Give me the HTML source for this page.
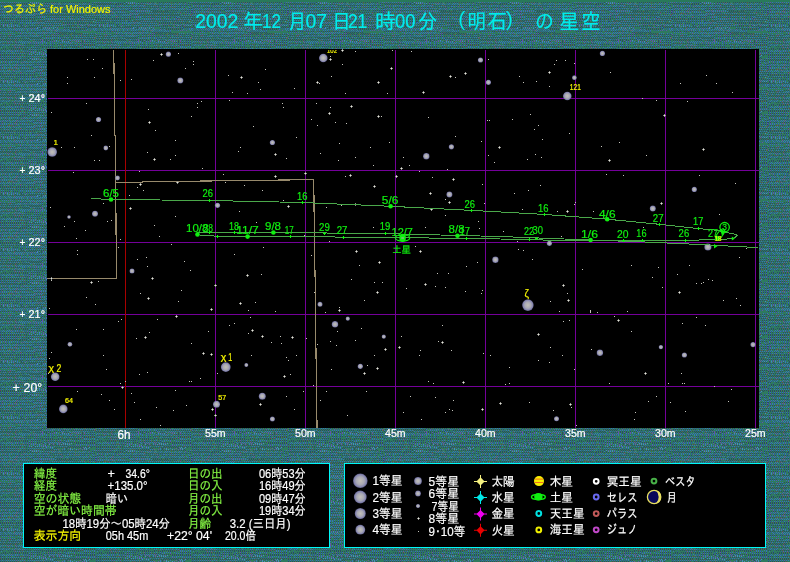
<!DOCTYPE html>
<html lang="ja"><head><meta charset="utf-8"><title>つるぷら for Windows</title>
<style>html,body{margin:0;padding:0;background:#2f7470;overflow:hidden}svg{display:block}text{font-family:"Liberation Sans","IPAGothic","Noto Sans CJK JP",sans-serif}.g{fill:#10f010;stroke:#10f010}.w{fill:#fff;stroke:#fff}.y{fill:#f4f400;stroke:#f4f400}.lg{fill:#84f444;stroke:#84f444}.c{fill:#00ecec;stroke:#00ecec}text{stroke-width:.2px}</style></head><body>
<svg style="will-change:transform" width="790" height="562" viewBox="0 0 790 562">
<defs>
<pattern id="bg" width="96" height="56" patternUnits="userSpaceOnUse"><rect width="96" height="56" fill="#2e7a5e"/>
<rect x="0" y="0" width="1" height="1" fill="#2e609c"/>
<rect x="2" y="0" width="1" height="1" fill="#3672ba"/>
<rect x="4" y="0" width="1" height="1" fill="#2e609c"/>
<rect x="6" y="0" width="1" height="1" fill="#3672ba"/>
<rect x="8" y="0" width="1" height="1" fill="#3672ba"/>
<rect x="10" y="0" width="1" height="1" fill="#3672ba"/>
<rect x="12" y="0" width="1" height="1" fill="#3672ba"/>
<rect x="14" y="0" width="1" height="1" fill="#3672ba"/>
<rect x="16" y="0" width="1" height="1" fill="#6452ac"/>
<rect x="18" y="0" width="1" height="1" fill="#3672ba"/>
<rect x="20" y="0" width="1" height="1" fill="#3672ba"/>
<rect x="22" y="0" width="1" height="1" fill="#3672ba"/>
<rect x="24" y="0" width="1" height="1" fill="#3672ba"/>
<rect x="28" y="0" width="1" height="1" fill="#3672ba"/>
<rect x="30" y="0" width="1" height="1" fill="#3672ba"/>
<rect x="32" y="0" width="1" height="1" fill="#3672ba"/>
<rect x="34" y="0" width="1" height="1" fill="#3672ba"/>
<rect x="36" y="0" width="1" height="1" fill="#3672ba"/>
<rect x="38" y="0" width="1" height="1" fill="#3672ba"/>
<rect x="40" y="0" width="1" height="1" fill="#3672ba"/>
<rect x="42" y="0" width="1" height="1" fill="#3672ba"/>
<rect x="43" y="0" width="1" height="1" fill="#4a7c52"/>
<rect x="44" y="0" width="1" height="1" fill="#3672ba"/>
<rect x="46" y="0" width="1" height="1" fill="#2e609c"/>
<rect x="48" y="0" width="1" height="1" fill="#2e609c"/>
<rect x="50" y="0" width="1" height="1" fill="#2e609c"/>
<rect x="52" y="0" width="1" height="1" fill="#3672ba"/>
<rect x="54" y="0" width="1" height="1" fill="#2a4c62"/>
<rect x="56" y="0" width="1" height="1" fill="#2a4c62"/>
<rect x="57" y="0" width="1" height="1" fill="#4a7c52"/>
<rect x="64" y="0" width="1" height="1" fill="#3874bc"/>
<rect x="66" y="0" width="1" height="1" fill="#2a4c62"/>
<rect x="68" y="0" width="1" height="1" fill="#6452ac"/>
<rect x="70" y="0" width="1" height="1" fill="#4a86c4"/>
<rect x="74" y="0" width="1" height="1" fill="#3874bc"/>
<rect x="79" y="0" width="1" height="1" fill="#4a7c52"/>
<rect x="80" y="0" width="1" height="1" fill="#6452ac"/>
<rect x="82" y="0" width="1" height="1" fill="#2a4c62"/>
<rect x="84" y="0" width="1" height="1" fill="#4a86c4"/>
<rect x="86" y="0" width="1" height="1" fill="#4a86c4"/>
<rect x="88" y="0" width="1" height="1" fill="#3874bc"/>
<rect x="0" y="1" width="1" height="1" fill="#2a4c62"/>
<rect x="2" y="1" width="1" height="1" fill="#2a4c62"/>
<rect x="4" y="1" width="1" height="1" fill="#2a4c62"/>
<rect x="6" y="1" width="1" height="1" fill="#2a4c62"/>
<rect x="7" y="1" width="1" height="1" fill="#4a7c52"/>
<rect x="8" y="1" width="1" height="1" fill="#2a4c62"/>
<rect x="10" y="1" width="1" height="1" fill="#2a4c62"/>
<rect x="12" y="1" width="1" height="1" fill="#2a4c62"/>
<rect x="14" y="1" width="1" height="1" fill="#2a4c62"/>
<rect x="16" y="1" width="1" height="1" fill="#2a4c62"/>
<rect x="18" y="1" width="1" height="1" fill="#5a4650"/>
<rect x="22" y="1" width="1" height="1" fill="#2a4c62"/>
<rect x="24" y="1" width="1" height="1" fill="#5a4650"/>
<rect x="26" y="1" width="1" height="1" fill="#2a4c62"/>
<rect x="28" y="1" width="1" height="1" fill="#2a4c62"/>
<rect x="30" y="1" width="1" height="1" fill="#2a4c62"/>
<rect x="32" y="1" width="1" height="1" fill="#2a4c62"/>
<rect x="36" y="1" width="1" height="1" fill="#5a4650"/>
<rect x="38" y="1" width="1" height="1" fill="#5a4650"/>
<rect x="40" y="1" width="1" height="1" fill="#2a4c62"/>
<rect x="42" y="1" width="1" height="1" fill="#2a4c62"/>
<rect x="43" y="1" width="1" height="1" fill="#4a7c52"/>
<rect x="44" y="1" width="1" height="1" fill="#2a4c62"/>
<rect x="46" y="1" width="1" height="1" fill="#2a4c62"/>
<rect x="48" y="1" width="1" height="1" fill="#2a4c62"/>
<rect x="50" y="1" width="1" height="1" fill="#2a4c62"/>
<rect x="52" y="1" width="1" height="1" fill="#2a4c62"/>
<rect x="54" y="1" width="1" height="1" fill="#3874bc"/>
<rect x="56" y="1" width="1" height="1" fill="#3874bc"/>
<rect x="58" y="1" width="1" height="1" fill="#6452ac"/>
<rect x="59" y="1" width="1" height="1" fill="#4a7c52"/>
<rect x="62" y="1" width="1" height="1" fill="#6452ac"/>
<rect x="64" y="1" width="1" height="1" fill="#3874bc"/>
<rect x="66" y="1" width="1" height="1" fill="#2a4c62"/>
<rect x="70" y="1" width="1" height="1" fill="#4a86c4"/>
<rect x="72" y="1" width="1" height="1" fill="#4a86c4"/>
<rect x="76" y="1" width="1" height="1" fill="#4a86c4"/>
<rect x="78" y="1" width="1" height="1" fill="#6452ac"/>
<rect x="82" y="1" width="1" height="1" fill="#6452ac"/>
<rect x="84" y="1" width="1" height="1" fill="#6452ac"/>
<rect x="86" y="1" width="1" height="1" fill="#4a86c4"/>
<rect x="88" y="1" width="1" height="1" fill="#2a4c62"/>
<rect x="0" y="2" width="1" height="1" fill="#3672ba"/>
<rect x="2" y="2" width="1" height="1" fill="#6452ac"/>
<rect x="4" y="2" width="1" height="1" fill="#3672ba"/>
<rect x="6" y="2" width="1" height="1" fill="#2e609c"/>
<rect x="8" y="2" width="1" height="1" fill="#3672ba"/>
<rect x="10" y="2" width="1" height="1" fill="#3672ba"/>
<rect x="12" y="2" width="1" height="1" fill="#3672ba"/>
<rect x="14" y="2" width="1" height="1" fill="#6452ac"/>
<rect x="16" y="2" width="1" height="1" fill="#3672ba"/>
<rect x="18" y="2" width="1" height="1" fill="#3672ba"/>
<rect x="20" y="2" width="1" height="1" fill="#3672ba"/>
<rect x="22" y="2" width="1" height="1" fill="#2e609c"/>
<rect x="24" y="2" width="1" height="1" fill="#2e609c"/>
<rect x="26" y="2" width="1" height="1" fill="#2e609c"/>
<rect x="28" y="2" width="1" height="1" fill="#2a4c62"/>
<rect x="30" y="2" width="1" height="1" fill="#4a86c4"/>
<rect x="32" y="2" width="1" height="1" fill="#6452ac"/>
<rect x="34" y="2" width="1" height="1" fill="#3874bc"/>
<rect x="36" y="2" width="1" height="1" fill="#4a86c4"/>
<rect x="38" y="2" width="1" height="1" fill="#3874bc"/>
<rect x="42" y="2" width="1" height="1" fill="#2a4c62"/>
<rect x="45" y="2" width="1" height="1" fill="#2a4c62"/>
<rect x="47" y="2" width="1" height="1" fill="#2a4c62"/>
<rect x="49" y="2" width="1" height="1" fill="#2a4c62"/>
<rect x="51" y="2" width="1" height="1" fill="#5a4650"/>
<rect x="53" y="2" width="1" height="1" fill="#2a4c62"/>
<rect x="54" y="2" width="1" height="1" fill="#4a7c52"/>
<rect x="55" y="2" width="1" height="1" fill="#2a4c62"/>
<rect x="57" y="2" width="1" height="1" fill="#2a4c62"/>
<rect x="61" y="2" width="1" height="1" fill="#2a4c62"/>
<rect x="63" y="2" width="1" height="1" fill="#2a4c62"/>
<rect x="65" y="2" width="1" height="1" fill="#2a4c62"/>
<rect x="67" y="2" width="1" height="1" fill="#2a4c62"/>
<rect x="69" y="2" width="1" height="1" fill="#2a4c62"/>
<rect x="70" y="2" width="1" height="1" fill="#4a7c52"/>
<rect x="71" y="2" width="1" height="1" fill="#2a4c62"/>
<rect x="73" y="2" width="1" height="1" fill="#2a4c62"/>
<rect x="75" y="2" width="1" height="1" fill="#5a4650"/>
<rect x="77" y="2" width="1" height="1" fill="#2a4c62"/>
<rect x="79" y="2" width="1" height="1" fill="#2a4c62"/>
<rect x="81" y="2" width="1" height="1" fill="#2a4c62"/>
<rect x="82" y="2" width="1" height="1" fill="#4a7c52"/>
<rect x="83" y="2" width="1" height="1" fill="#2a4c62"/>
<rect x="85" y="2" width="1" height="1" fill="#2a4c62"/>
<rect x="87" y="2" width="1" height="1" fill="#2a4c62"/>
<rect x="89" y="2" width="1" height="1" fill="#2a4c62"/>
<rect x="92" y="2" width="1" height="1" fill="#2e609c"/>
<rect x="94" y="2" width="1" height="1" fill="#3672ba"/>
<rect x="95" y="2" width="1" height="1" fill="#4a7c52"/>
<rect x="0" y="3" width="1" height="1" fill="#2a4c62"/>
<rect x="2" y="3" width="1" height="1" fill="#2a4c62"/>
<rect x="4" y="3" width="1" height="1" fill="#2a4c62"/>
<rect x="6" y="3" width="1" height="1" fill="#2a4c62"/>
<rect x="8" y="3" width="1" height="1" fill="#2a4c62"/>
<rect x="10" y="3" width="1" height="1" fill="#2a4c62"/>
<rect x="12" y="3" width="1" height="1" fill="#2a4c62"/>
<rect x="14" y="3" width="1" height="1" fill="#2a4c62"/>
<rect x="16" y="3" width="1" height="1" fill="#2a4c62"/>
<rect x="19" y="3" width="1" height="1" fill="#4a7c52"/>
<rect x="20" y="3" width="1" height="1" fill="#2a4c62"/>
<rect x="22" y="3" width="1" height="1" fill="#2a4c62"/>
<rect x="24" y="3" width="1" height="1" fill="#2a4c62"/>
<rect x="26" y="3" width="1" height="1" fill="#2a4c62"/>
<rect x="28" y="3" width="1" height="1" fill="#3874bc"/>
<rect x="30" y="3" width="1" height="1" fill="#2a4c62"/>
<rect x="32" y="3" width="1" height="1" fill="#4a86c4"/>
<rect x="33" y="3" width="1" height="1" fill="#4a7c52"/>
<rect x="34" y="3" width="1" height="1" fill="#4a86c4"/>
<rect x="36" y="3" width="1" height="1" fill="#4a86c4"/>
<rect x="38" y="3" width="1" height="1" fill="#6452ac"/>
<rect x="40" y="3" width="1" height="1" fill="#3874bc"/>
<rect x="42" y="3" width="1" height="1" fill="#4a86c4"/>
<rect x="45" y="3" width="1" height="1" fill="#6452ac"/>
<rect x="47" y="3" width="1" height="1" fill="#3672ba"/>
<rect x="49" y="3" width="1" height="1" fill="#3672ba"/>
<rect x="51" y="3" width="1" height="1" fill="#3672ba"/>
<rect x="53" y="3" width="1" height="1" fill="#6452ac"/>
<rect x="54" y="3" width="1" height="1" fill="#4a7c52"/>
<rect x="55" y="3" width="1" height="1" fill="#3672ba"/>
<rect x="57" y="3" width="1" height="1" fill="#2e609c"/>
<rect x="58" y="3" width="1" height="1" fill="#4a7c52"/>
<rect x="59" y="3" width="1" height="1" fill="#3672ba"/>
<rect x="60" y="3" width="1" height="1" fill="#4a7c52"/>
<rect x="63" y="3" width="1" height="1" fill="#2e609c"/>
<rect x="65" y="3" width="1" height="1" fill="#3672ba"/>
<rect x="69" y="3" width="1" height="1" fill="#3672ba"/>
<rect x="71" y="3" width="1" height="1" fill="#3672ba"/>
<rect x="73" y="3" width="1" height="1" fill="#3672ba"/>
<rect x="78" y="3" width="1" height="1" fill="#4a7c52"/>
<rect x="79" y="3" width="1" height="1" fill="#3672ba"/>
<rect x="83" y="3" width="1" height="1" fill="#3672ba"/>
<rect x="85" y="3" width="1" height="1" fill="#3672ba"/>
<rect x="89" y="3" width="1" height="1" fill="#6452ac"/>
<rect x="92" y="3" width="1" height="1" fill="#2a4c62"/>
<rect x="94" y="3" width="1" height="1" fill="#2a4c62"/>
<rect x="1" y="4" width="1" height="1" fill="#2a4c62"/>
<rect x="3" y="4" width="1" height="1" fill="#2a4c62"/>
<rect x="5" y="4" width="1" height="1" fill="#2a4c62"/>
<rect x="6" y="4" width="1" height="1" fill="#4a7c52"/>
<rect x="7" y="4" width="1" height="1" fill="#2a4c62"/>
<rect x="9" y="4" width="1" height="1" fill="#2a4c62"/>
<rect x="11" y="4" width="1" height="1" fill="#5a4650"/>
<rect x="13" y="4" width="1" height="1" fill="#2a4c62"/>
<rect x="15" y="4" width="1" height="1" fill="#2a4c62"/>
<rect x="17" y="4" width="1" height="1" fill="#2a4c62"/>
<rect x="19" y="4" width="1" height="1" fill="#2a4c62"/>
<rect x="20" y="4" width="1" height="1" fill="#2a4c62"/>
<rect x="22" y="4" width="1" height="1" fill="#2a4c62"/>
<rect x="24" y="4" width="1" height="1" fill="#5a4650"/>
<rect x="26" y="4" width="1" height="1" fill="#2a4c62"/>
<rect x="28" y="4" width="1" height="1" fill="#2a4c62"/>
<rect x="30" y="4" width="1" height="1" fill="#2a4c62"/>
<rect x="32" y="4" width="1" height="1" fill="#2a4c62"/>
<rect x="34" y="4" width="1" height="1" fill="#2a4c62"/>
<rect x="36" y="4" width="1" height="1" fill="#5a4650"/>
<rect x="38" y="4" width="1" height="1" fill="#2a4c62"/>
<rect x="42" y="4" width="1" height="1" fill="#2a4c62"/>
<rect x="44" y="4" width="1" height="1" fill="#2a4c62"/>
<rect x="46" y="4" width="1" height="1" fill="#2a4c62"/>
<rect x="48" y="4" width="1" height="1" fill="#5a4650"/>
<rect x="51" y="4" width="1" height="1" fill="#4a7c52"/>
<rect x="52" y="4" width="1" height="1" fill="#3672ba"/>
<rect x="54" y="4" width="1" height="1" fill="#3672ba"/>
<rect x="56" y="4" width="1" height="1" fill="#2e609c"/>
<rect x="58" y="4" width="1" height="1" fill="#3672ba"/>
<rect x="60" y="4" width="1" height="1" fill="#3672ba"/>
<rect x="62" y="4" width="1" height="1" fill="#2e609c"/>
<rect x="64" y="4" width="1" height="1" fill="#3672ba"/>
<rect x="66" y="4" width="1" height="1" fill="#2e609c"/>
<rect x="68" y="4" width="1" height="1" fill="#3672ba"/>
<rect x="70" y="4" width="1" height="1" fill="#3672ba"/>
<rect x="72" y="4" width="1" height="1" fill="#2e609c"/>
<rect x="74" y="4" width="1" height="1" fill="#3672ba"/>
<rect x="75" y="4" width="1" height="1" fill="#4a7c52"/>
<rect x="76" y="4" width="1" height="1" fill="#3672ba"/>
<rect x="78" y="4" width="1" height="1" fill="#3672ba"/>
<rect x="80" y="4" width="1" height="1" fill="#3672ba"/>
<rect x="82" y="4" width="1" height="1" fill="#3672ba"/>
<rect x="83" y="4" width="1" height="1" fill="#4a7c52"/>
<rect x="84" y="4" width="1" height="1" fill="#3672ba"/>
<rect x="86" y="4" width="1" height="1" fill="#2e609c"/>
<rect x="88" y="4" width="1" height="1" fill="#3672ba"/>
<rect x="90" y="4" width="1" height="1" fill="#2e609c"/>
<rect x="92" y="4" width="1" height="1" fill="#3672ba"/>
<rect x="1" y="5" width="1" height="1" fill="#3672ba"/>
<rect x="3" y="5" width="1" height="1" fill="#6452ac"/>
<rect x="5" y="5" width="1" height="1" fill="#3672ba"/>
<rect x="7" y="5" width="1" height="1" fill="#2e609c"/>
<rect x="9" y="5" width="1" height="1" fill="#3672ba"/>
<rect x="11" y="5" width="1" height="1" fill="#3672ba"/>
<rect x="13" y="5" width="1" height="1" fill="#3672ba"/>
<rect x="15" y="5" width="1" height="1" fill="#3672ba"/>
<rect x="17" y="5" width="1" height="1" fill="#3672ba"/>
<rect x="19" y="5" width="1" height="1" fill="#2e609c"/>
<rect x="22" y="5" width="1" height="1" fill="#2e609c"/>
<rect x="24" y="5" width="1" height="1" fill="#3672ba"/>
<rect x="26" y="5" width="1" height="1" fill="#3672ba"/>
<rect x="30" y="5" width="1" height="1" fill="#3672ba"/>
<rect x="34" y="5" width="1" height="1" fill="#3672ba"/>
<rect x="38" y="5" width="1" height="1" fill="#3672ba"/>
<rect x="40" y="5" width="1" height="1" fill="#3672ba"/>
<rect x="42" y="5" width="1" height="1" fill="#2e609c"/>
<rect x="44" y="5" width="1" height="1" fill="#3672ba"/>
<rect x="46" y="5" width="1" height="1" fill="#3672ba"/>
<rect x="48" y="5" width="1" height="1" fill="#6452ac"/>
<rect x="50" y="5" width="1" height="1" fill="#2a4c62"/>
<rect x="52" y="5" width="1" height="1" fill="#2a4c62"/>
<rect x="54" y="5" width="1" height="1" fill="#2a4c62"/>
<rect x="56" y="5" width="1" height="1" fill="#2a4c62"/>
<rect x="58" y="5" width="1" height="1" fill="#5a4650"/>
<rect x="59" y="5" width="1" height="1" fill="#4a7c52"/>
<rect x="60" y="5" width="1" height="1" fill="#2a4c62"/>
<rect x="62" y="5" width="1" height="1" fill="#2a4c62"/>
<rect x="64" y="5" width="1" height="1" fill="#2a4c62"/>
<rect x="66" y="5" width="1" height="1" fill="#2a4c62"/>
<rect x="68" y="5" width="1" height="1" fill="#2a4c62"/>
<rect x="70" y="5" width="1" height="1" fill="#2a4c62"/>
<rect x="72" y="5" width="1" height="1" fill="#2a4c62"/>
<rect x="74" y="5" width="1" height="1" fill="#2a4c62"/>
<rect x="75" y="5" width="1" height="1" fill="#4a7c52"/>
<rect x="76" y="5" width="1" height="1" fill="#2a4c62"/>
<rect x="78" y="5" width="1" height="1" fill="#2a4c62"/>
<rect x="80" y="5" width="1" height="1" fill="#2a4c62"/>
<rect x="82" y="5" width="1" height="1" fill="#2a4c62"/>
<rect x="84" y="5" width="1" height="1" fill="#2a4c62"/>
<rect x="86" y="5" width="1" height="1" fill="#2a4c62"/>
<rect x="88" y="5" width="1" height="1" fill="#2a4c62"/>
<rect x="90" y="5" width="1" height="1" fill="#2a4c62"/>
<rect x="92" y="5" width="1" height="1" fill="#2a4c62"/>
<rect x="94" y="5" width="1" height="1" fill="#2a4c62"/>
<rect x="0" y="6" width="1" height="1" fill="#4a7c52"/>
<rect x="1" y="6" width="1" height="1" fill="#3672ba"/>
<rect x="5" y="6" width="1" height="1" fill="#6452ac"/>
<rect x="7" y="6" width="1" height="1" fill="#2e609c"/>
<rect x="9" y="6" width="1" height="1" fill="#3672ba"/>
<rect x="11" y="6" width="1" height="1" fill="#3672ba"/>
<rect x="15" y="6" width="1" height="1" fill="#2e609c"/>
<rect x="17" y="6" width="1" height="1" fill="#3672ba"/>
<rect x="19" y="6" width="1" height="1" fill="#2e609c"/>
<rect x="21" y="6" width="1" height="1" fill="#6452ac"/>
<rect x="23" y="6" width="1" height="1" fill="#6452ac"/>
<rect x="25" y="6" width="1" height="1" fill="#3672ba"/>
<rect x="27" y="6" width="1" height="1" fill="#3672ba"/>
<rect x="29" y="6" width="1" height="1" fill="#3672ba"/>
<rect x="31" y="6" width="1" height="1" fill="#3672ba"/>
<rect x="33" y="6" width="1" height="1" fill="#3672ba"/>
<rect x="35" y="6" width="1" height="1" fill="#2e609c"/>
<rect x="37" y="6" width="1" height="1" fill="#3672ba"/>
<rect x="39" y="6" width="1" height="1" fill="#3672ba"/>
<rect x="41" y="6" width="1" height="1" fill="#2e609c"/>
<rect x="43" y="6" width="1" height="1" fill="#6452ac"/>
<rect x="45" y="6" width="1" height="1" fill="#2e609c"/>
<rect x="47" y="6" width="1" height="1" fill="#3672ba"/>
<rect x="49" y="6" width="1" height="1" fill="#2e609c"/>
<rect x="51" y="6" width="1" height="1" fill="#2e609c"/>
<rect x="55" y="6" width="1" height="1" fill="#3672ba"/>
<rect x="57" y="6" width="1" height="1" fill="#3672ba"/>
<rect x="59" y="6" width="1" height="1" fill="#2e609c"/>
<rect x="60" y="6" width="1" height="1" fill="#4a7c52"/>
<rect x="61" y="6" width="1" height="1" fill="#6452ac"/>
<rect x="63" y="6" width="1" height="1" fill="#2e609c"/>
<rect x="65" y="6" width="1" height="1" fill="#2e609c"/>
<rect x="67" y="6" width="1" height="1" fill="#3672ba"/>
<rect x="68" y="6" width="1" height="1" fill="#3672ba"/>
<rect x="69" y="6" width="1" height="1" fill="#4a7c52"/>
<rect x="70" y="6" width="1" height="1" fill="#3672ba"/>
<rect x="72" y="6" width="1" height="1" fill="#3672ba"/>
<rect x="74" y="6" width="1" height="1" fill="#6452ac"/>
<rect x="76" y="6" width="1" height="1" fill="#3672ba"/>
<rect x="78" y="6" width="1" height="1" fill="#3672ba"/>
<rect x="79" y="6" width="1" height="1" fill="#4a7c52"/>
<rect x="80" y="6" width="1" height="1" fill="#3672ba"/>
<rect x="82" y="6" width="1" height="1" fill="#3672ba"/>
<rect x="84" y="6" width="1" height="1" fill="#2e609c"/>
<rect x="86" y="6" width="1" height="1" fill="#3672ba"/>
<rect x="88" y="6" width="1" height="1" fill="#3672ba"/>
<rect x="92" y="6" width="1" height="1" fill="#3672ba"/>
<rect x="94" y="6" width="1" height="1" fill="#2e609c"/>
<rect x="1" y="7" width="1" height="1" fill="#2a4c62"/>
<rect x="3" y="7" width="1" height="1" fill="#2a4c62"/>
<rect x="5" y="7" width="1" height="1" fill="#2a4c62"/>
<rect x="7" y="7" width="1" height="1" fill="#2a4c62"/>
<rect x="11" y="7" width="1" height="1" fill="#2a4c62"/>
<rect x="13" y="7" width="1" height="1" fill="#2a4c62"/>
<rect x="15" y="7" width="1" height="1" fill="#2a4c62"/>
<rect x="17" y="7" width="1" height="1" fill="#2a4c62"/>
<rect x="19" y="7" width="1" height="1" fill="#2a4c62"/>
<rect x="23" y="7" width="1" height="1" fill="#2a4c62"/>
<rect x="25" y="7" width="1" height="1" fill="#2a4c62"/>
<rect x="27" y="7" width="1" height="1" fill="#5a4650"/>
<rect x="29" y="7" width="1" height="1" fill="#2a4c62"/>
<rect x="31" y="7" width="1" height="1" fill="#2a4c62"/>
<rect x="33" y="7" width="1" height="1" fill="#2a4c62"/>
<rect x="35" y="7" width="1" height="1" fill="#2a4c62"/>
<rect x="37" y="7" width="1" height="1" fill="#2a4c62"/>
<rect x="39" y="7" width="1" height="1" fill="#2a4c62"/>
<rect x="41" y="7" width="1" height="1" fill="#2a4c62"/>
<rect x="43" y="7" width="1" height="1" fill="#2a4c62"/>
<rect x="44" y="7" width="1" height="1" fill="#2a4c62"/>
<rect x="46" y="7" width="1" height="1" fill="#2a4c62"/>
<rect x="48" y="7" width="1" height="1" fill="#5a4650"/>
<rect x="50" y="7" width="1" height="1" fill="#2a4c62"/>
<rect x="52" y="7" width="1" height="1" fill="#2a4c62"/>
<rect x="54" y="7" width="1" height="1" fill="#2a4c62"/>
<rect x="56" y="7" width="1" height="1" fill="#2a4c62"/>
<rect x="58" y="7" width="1" height="1" fill="#2a4c62"/>
<rect x="60" y="7" width="1" height="1" fill="#2a4c62"/>
<rect x="62" y="7" width="1" height="1" fill="#2a4c62"/>
<rect x="66" y="7" width="1" height="1" fill="#2a4c62"/>
<rect x="68" y="7" width="1" height="1" fill="#2a4c62"/>
<rect x="72" y="7" width="1" height="1" fill="#2a4c62"/>
<rect x="76" y="7" width="1" height="1" fill="#5a4650"/>
<rect x="78" y="7" width="1" height="1" fill="#5a4650"/>
<rect x="80" y="7" width="1" height="1" fill="#2a4c62"/>
<rect x="82" y="7" width="1" height="1" fill="#2a4c62"/>
<rect x="84" y="7" width="1" height="1" fill="#2a4c62"/>
<rect x="88" y="7" width="1" height="1" fill="#2a4c62"/>
<rect x="93" y="7" width="1" height="1" fill="#3672ba"/>
<rect x="94" y="7" width="1" height="1" fill="#4a7c52"/>
<rect x="95" y="7" width="1" height="1" fill="#2e609c"/>
<rect x="1" y="8" width="1" height="1" fill="#2e609c"/>
<rect x="3" y="8" width="1" height="1" fill="#3672ba"/>
<rect x="5" y="8" width="1" height="1" fill="#3672ba"/>
<rect x="7" y="8" width="1" height="1" fill="#6452ac"/>
<rect x="9" y="8" width="1" height="1" fill="#3672ba"/>
<rect x="13" y="8" width="1" height="1" fill="#3672ba"/>
<rect x="15" y="8" width="1" height="1" fill="#3672ba"/>
<rect x="16" y="8" width="1" height="1" fill="#4a7c52"/>
<rect x="17" y="8" width="1" height="1" fill="#6452ac"/>
<rect x="19" y="8" width="1" height="1" fill="#2e609c"/>
<rect x="21" y="8" width="1" height="1" fill="#2e609c"/>
<rect x="23" y="8" width="1" height="1" fill="#3672ba"/>
<rect x="25" y="8" width="1" height="1" fill="#2e609c"/>
<rect x="27" y="8" width="1" height="1" fill="#3672ba"/>
<rect x="29" y="8" width="1" height="1" fill="#3672ba"/>
<rect x="31" y="8" width="1" height="1" fill="#3672ba"/>
<rect x="33" y="8" width="1" height="1" fill="#3672ba"/>
<rect x="37" y="8" width="1" height="1" fill="#6452ac"/>
<rect x="39" y="8" width="1" height="1" fill="#3672ba"/>
<rect x="41" y="8" width="1" height="1" fill="#3672ba"/>
<rect x="43" y="8" width="1" height="1" fill="#3672ba"/>
<rect x="44" y="8" width="1" height="1" fill="#2e609c"/>
<rect x="46" y="8" width="1" height="1" fill="#3672ba"/>
<rect x="48" y="8" width="1" height="1" fill="#3672ba"/>
<rect x="50" y="8" width="1" height="1" fill="#3672ba"/>
<rect x="51" y="8" width="1" height="1" fill="#4a7c52"/>
<rect x="52" y="8" width="1" height="1" fill="#3672ba"/>
<rect x="55" y="8" width="1" height="1" fill="#4a7c52"/>
<rect x="56" y="8" width="1" height="1" fill="#3672ba"/>
<rect x="58" y="8" width="1" height="1" fill="#2e609c"/>
<rect x="60" y="8" width="1" height="1" fill="#3672ba"/>
<rect x="62" y="8" width="1" height="1" fill="#6452ac"/>
<rect x="66" y="8" width="1" height="1" fill="#3672ba"/>
<rect x="68" y="8" width="1" height="1" fill="#3672ba"/>
<rect x="70" y="8" width="1" height="1" fill="#2e609c"/>
<rect x="72" y="8" width="1" height="1" fill="#2e609c"/>
<rect x="74" y="8" width="1" height="1" fill="#2e609c"/>
<rect x="76" y="8" width="1" height="1" fill="#3672ba"/>
<rect x="78" y="8" width="1" height="1" fill="#3672ba"/>
<rect x="80" y="8" width="1" height="1" fill="#3672ba"/>
<rect x="82" y="8" width="1" height="1" fill="#3672ba"/>
<rect x="84" y="8" width="1" height="1" fill="#3672ba"/>
<rect x="86" y="8" width="1" height="1" fill="#3672ba"/>
<rect x="88" y="8" width="1" height="1" fill="#6452ac"/>
<rect x="90" y="8" width="1" height="1" fill="#3672ba"/>
<rect x="93" y="8" width="1" height="1" fill="#2a4c62"/>
<rect x="95" y="8" width="1" height="1" fill="#2a4c62"/>
<rect x="0" y="9" width="1" height="1" fill="#3672ba"/>
<rect x="2" y="9" width="1" height="1" fill="#6452ac"/>
<rect x="4" y="9" width="1" height="1" fill="#2e609c"/>
<rect x="6" y="9" width="1" height="1" fill="#3672ba"/>
<rect x="8" y="9" width="1" height="1" fill="#2e609c"/>
<rect x="10" y="9" width="1" height="1" fill="#3672ba"/>
<rect x="12" y="9" width="1" height="1" fill="#3672ba"/>
<rect x="14" y="9" width="1" height="1" fill="#3672ba"/>
<rect x="16" y="9" width="1" height="1" fill="#6452ac"/>
<rect x="18" y="9" width="1" height="1" fill="#3672ba"/>
<rect x="20" y="9" width="1" height="1" fill="#3672ba"/>
<rect x="22" y="9" width="1" height="1" fill="#3672ba"/>
<rect x="24" y="9" width="1" height="1" fill="#3672ba"/>
<rect x="26" y="9" width="1" height="1" fill="#2e609c"/>
<rect x="30" y="9" width="1" height="1" fill="#3672ba"/>
<rect x="32" y="9" width="1" height="1" fill="#2e609c"/>
<rect x="33" y="9" width="1" height="1" fill="#2a4c62"/>
<rect x="35" y="9" width="1" height="1" fill="#2a4c62"/>
<rect x="37" y="9" width="1" height="1" fill="#2a4c62"/>
<rect x="39" y="9" width="1" height="1" fill="#2a4c62"/>
<rect x="40" y="9" width="1" height="1" fill="#4a7c52"/>
<rect x="41" y="9" width="1" height="1" fill="#2a4c62"/>
<rect x="43" y="9" width="1" height="1" fill="#2a4c62"/>
<rect x="45" y="9" width="1" height="1" fill="#2a4c62"/>
<rect x="47" y="9" width="1" height="1" fill="#2a4c62"/>
<rect x="49" y="9" width="1" height="1" fill="#2a4c62"/>
<rect x="53" y="9" width="1" height="1" fill="#2a4c62"/>
<rect x="55" y="9" width="1" height="1" fill="#3672ba"/>
<rect x="57" y="9" width="1" height="1" fill="#2e609c"/>
<rect x="59" y="9" width="1" height="1" fill="#2e609c"/>
<rect x="61" y="9" width="1" height="1" fill="#6452ac"/>
<rect x="63" y="9" width="1" height="1" fill="#2e609c"/>
<rect x="65" y="9" width="1" height="1" fill="#3672ba"/>
<rect x="67" y="9" width="1" height="1" fill="#3672ba"/>
<rect x="69" y="9" width="1" height="1" fill="#2e609c"/>
<rect x="71" y="9" width="1" height="1" fill="#2e609c"/>
<rect x="73" y="9" width="1" height="1" fill="#3672ba"/>
<rect x="75" y="9" width="1" height="1" fill="#2e609c"/>
<rect x="77" y="9" width="1" height="1" fill="#2e609c"/>
<rect x="79" y="9" width="1" height="1" fill="#3672ba"/>
<rect x="81" y="9" width="1" height="1" fill="#2e609c"/>
<rect x="83" y="9" width="1" height="1" fill="#3672ba"/>
<rect x="85" y="9" width="1" height="1" fill="#3672ba"/>
<rect x="87" y="9" width="1" height="1" fill="#3672ba"/>
<rect x="91" y="9" width="1" height="1" fill="#3672ba"/>
<rect x="93" y="9" width="1" height="1" fill="#3672ba"/>
<rect x="95" y="9" width="1" height="1" fill="#3672ba"/>
<rect x="0" y="10" width="1" height="1" fill="#2a4c62"/>
<rect x="2" y="10" width="1" height="1" fill="#2a4c62"/>
<rect x="6" y="10" width="1" height="1" fill="#2a4c62"/>
<rect x="8" y="10" width="1" height="1" fill="#2a4c62"/>
<rect x="12" y="10" width="1" height="1" fill="#2a4c62"/>
<rect x="14" y="10" width="1" height="1" fill="#2a4c62"/>
<rect x="15" y="10" width="1" height="1" fill="#4a7c52"/>
<rect x="16" y="10" width="1" height="1" fill="#2a4c62"/>
<rect x="18" y="10" width="1" height="1" fill="#2a4c62"/>
<rect x="20" y="10" width="1" height="1" fill="#2a4c62"/>
<rect x="22" y="10" width="1" height="1" fill="#2a4c62"/>
<rect x="24" y="10" width="1" height="1" fill="#2a4c62"/>
<rect x="26" y="10" width="1" height="1" fill="#5a4650"/>
<rect x="28" y="10" width="1" height="1" fill="#2a4c62"/>
<rect x="30" y="10" width="1" height="1" fill="#2a4c62"/>
<rect x="32" y="10" width="1" height="1" fill="#2a4c62"/>
<rect x="33" y="10" width="1" height="1" fill="#3672ba"/>
<rect x="35" y="10" width="1" height="1" fill="#3672ba"/>
<rect x="37" y="10" width="1" height="1" fill="#3672ba"/>
<rect x="39" y="10" width="1" height="1" fill="#6452ac"/>
<rect x="41" y="10" width="1" height="1" fill="#3672ba"/>
<rect x="43" y="10" width="1" height="1" fill="#3672ba"/>
<rect x="45" y="10" width="1" height="1" fill="#6452ac"/>
<rect x="47" y="10" width="1" height="1" fill="#6452ac"/>
<rect x="49" y="10" width="1" height="1" fill="#3672ba"/>
<rect x="51" y="10" width="1" height="1" fill="#3672ba"/>
<rect x="53" y="10" width="1" height="1" fill="#3672ba"/>
<rect x="55" y="10" width="1" height="1" fill="#2a4c62"/>
<rect x="57" y="10" width="1" height="1" fill="#2a4c62"/>
<rect x="59" y="10" width="1" height="1" fill="#2a4c62"/>
<rect x="61" y="10" width="1" height="1" fill="#2a4c62"/>
<rect x="65" y="10" width="1" height="1" fill="#2a4c62"/>
<rect x="69" y="10" width="1" height="1" fill="#2a4c62"/>
<rect x="71" y="10" width="1" height="1" fill="#2a4c62"/>
<rect x="72" y="10" width="1" height="1" fill="#4a7c52"/>
<rect x="73" y="10" width="1" height="1" fill="#2a4c62"/>
<rect x="75" y="10" width="1" height="1" fill="#2a4c62"/>
<rect x="77" y="10" width="1" height="1" fill="#2a4c62"/>
<rect x="79" y="10" width="1" height="1" fill="#2a4c62"/>
<rect x="81" y="10" width="1" height="1" fill="#2a4c62"/>
<rect x="85" y="10" width="1" height="1" fill="#2a4c62"/>
<rect x="87" y="10" width="1" height="1" fill="#2a4c62"/>
<rect x="89" y="10" width="1" height="1" fill="#2a4c62"/>
<rect x="91" y="10" width="1" height="1" fill="#2a4c62"/>
<rect x="93" y="10" width="1" height="1" fill="#2a4c62"/>
<rect x="95" y="10" width="1" height="1" fill="#2a4c62"/>
<rect x="0" y="11" width="1" height="1" fill="#2e609c"/>
<rect x="2" y="11" width="1" height="1" fill="#6452ac"/>
<rect x="4" y="11" width="1" height="1" fill="#3672ba"/>
<rect x="6" y="11" width="1" height="1" fill="#3672ba"/>
<rect x="8" y="11" width="1" height="1" fill="#3672ba"/>
<rect x="10" y="11" width="1" height="1" fill="#3672ba"/>
<rect x="12" y="11" width="1" height="1" fill="#3672ba"/>
<rect x="14" y="11" width="1" height="1" fill="#6452ac"/>
<rect x="15" y="11" width="1" height="1" fill="#4a7c52"/>
<rect x="16" y="11" width="1" height="1" fill="#6452ac"/>
<rect x="18" y="11" width="1" height="1" fill="#2e609c"/>
<rect x="20" y="11" width="1" height="1" fill="#6452ac"/>
<rect x="22" y="11" width="1" height="1" fill="#3672ba"/>
<rect x="24" y="11" width="1" height="1" fill="#3672ba"/>
<rect x="26" y="11" width="1" height="1" fill="#2e609c"/>
<rect x="27" y="11" width="1" height="1" fill="#4a7c52"/>
<rect x="28" y="11" width="1" height="1" fill="#2e609c"/>
<rect x="34" y="11" width="1" height="1" fill="#3672ba"/>
<rect x="36" y="11" width="1" height="1" fill="#3672ba"/>
<rect x="38" y="11" width="1" height="1" fill="#2e609c"/>
<rect x="40" y="11" width="1" height="1" fill="#6452ac"/>
<rect x="41" y="11" width="1" height="1" fill="#3672ba"/>
<rect x="43" y="11" width="1" height="1" fill="#3672ba"/>
<rect x="45" y="11" width="1" height="1" fill="#3672ba"/>
<rect x="47" y="11" width="1" height="1" fill="#3672ba"/>
<rect x="49" y="11" width="1" height="1" fill="#6452ac"/>
<rect x="51" y="11" width="1" height="1" fill="#6452ac"/>
<rect x="53" y="11" width="1" height="1" fill="#3672ba"/>
<rect x="55" y="11" width="1" height="1" fill="#3672ba"/>
<rect x="57" y="11" width="1" height="1" fill="#2a4c62"/>
<rect x="59" y="11" width="1" height="1" fill="#2a4c62"/>
<rect x="61" y="11" width="1" height="1" fill="#2a4c62"/>
<rect x="63" y="11" width="1" height="1" fill="#2a4c62"/>
<rect x="65" y="11" width="1" height="1" fill="#2a4c62"/>
<rect x="67" y="11" width="1" height="1" fill="#5a4650"/>
<rect x="69" y="11" width="1" height="1" fill="#2a4c62"/>
<rect x="71" y="11" width="1" height="1" fill="#2a4c62"/>
<rect x="75" y="11" width="1" height="1" fill="#2e609c"/>
<rect x="79" y="11" width="1" height="1" fill="#2e609c"/>
<rect x="81" y="11" width="1" height="1" fill="#2e609c"/>
<rect x="83" y="11" width="1" height="1" fill="#2e609c"/>
<rect x="85" y="11" width="1" height="1" fill="#2e609c"/>
<rect x="87" y="11" width="1" height="1" fill="#2e609c"/>
<rect x="89" y="11" width="1" height="1" fill="#3672ba"/>
<rect x="90" y="11" width="1" height="1" fill="#4a7c52"/>
<rect x="91" y="11" width="1" height="1" fill="#2e609c"/>
<rect x="93" y="11" width="1" height="1" fill="#2e609c"/>
<rect x="95" y="11" width="1" height="1" fill="#6452ac"/>
<rect x="0" y="12" width="1" height="1" fill="#2e609c"/>
<rect x="2" y="12" width="1" height="1" fill="#3672ba"/>
<rect x="4" y="12" width="1" height="1" fill="#3672ba"/>
<rect x="6" y="12" width="1" height="1" fill="#3672ba"/>
<rect x="9" y="12" width="1" height="1" fill="#4a7c52"/>
<rect x="10" y="12" width="1" height="1" fill="#2e609c"/>
<rect x="11" y="12" width="1" height="1" fill="#4a7c52"/>
<rect x="12" y="12" width="1" height="1" fill="#3672ba"/>
<rect x="14" y="12" width="1" height="1" fill="#2e609c"/>
<rect x="16" y="12" width="1" height="1" fill="#3672ba"/>
<rect x="17" y="12" width="1" height="1" fill="#4a7c52"/>
<rect x="18" y="12" width="1" height="1" fill="#3672ba"/>
<rect x="22" y="12" width="1" height="1" fill="#3672ba"/>
<rect x="24" y="12" width="1" height="1" fill="#3672ba"/>
<rect x="26" y="12" width="1" height="1" fill="#3672ba"/>
<rect x="28" y="12" width="1" height="1" fill="#3672ba"/>
<rect x="29" y="12" width="1" height="1" fill="#4a7c52"/>
<rect x="30" y="12" width="1" height="1" fill="#2e609c"/>
<rect x="34" y="12" width="1" height="1" fill="#5a4650"/>
<rect x="36" y="12" width="1" height="1" fill="#2a4c62"/>
<rect x="38" y="12" width="1" height="1" fill="#2a4c62"/>
<rect x="40" y="12" width="1" height="1" fill="#2a4c62"/>
<rect x="41" y="12" width="1" height="1" fill="#4a7c52"/>
<rect x="42" y="12" width="1" height="1" fill="#2a4c62"/>
<rect x="44" y="12" width="1" height="1" fill="#5a4650"/>
<rect x="46" y="12" width="1" height="1" fill="#2a4c62"/>
<rect x="48" y="12" width="1" height="1" fill="#2a4c62"/>
<rect x="54" y="12" width="1" height="1" fill="#2a4c62"/>
<rect x="55" y="12" width="1" height="1" fill="#4a7c52"/>
<rect x="56" y="12" width="1" height="1" fill="#2a4c62"/>
<rect x="58" y="12" width="1" height="1" fill="#2a4c62"/>
<rect x="60" y="12" width="1" height="1" fill="#2a4c62"/>
<rect x="62" y="12" width="1" height="1" fill="#5a4650"/>
<rect x="64" y="12" width="1" height="1" fill="#2a4c62"/>
<rect x="66" y="12" width="1" height="1" fill="#2a4c62"/>
<rect x="68" y="12" width="1" height="1" fill="#2a4c62"/>
<rect x="70" y="12" width="1" height="1" fill="#2a4c62"/>
<rect x="72" y="12" width="1" height="1" fill="#2a4c62"/>
<rect x="74" y="12" width="1" height="1" fill="#2a4c62"/>
<rect x="76" y="12" width="1" height="1" fill="#2a4c62"/>
<rect x="78" y="12" width="1" height="1" fill="#2a4c62"/>
<rect x="80" y="12" width="1" height="1" fill="#2a4c62"/>
<rect x="81" y="12" width="1" height="1" fill="#4a7c52"/>
<rect x="84" y="12" width="1" height="1" fill="#5a4650"/>
<rect x="86" y="12" width="1" height="1" fill="#2a4c62"/>
<rect x="89" y="12" width="1" height="1" fill="#2a4c62"/>
<rect x="91" y="12" width="1" height="1" fill="#2a4c62"/>
<rect x="93" y="12" width="1" height="1" fill="#2a4c62"/>
<rect x="95" y="12" width="1" height="1" fill="#2a4c62"/>
<rect x="0" y="13" width="1" height="1" fill="#5a4650"/>
<rect x="2" y="13" width="1" height="1" fill="#2a4c62"/>
<rect x="3" y="13" width="1" height="1" fill="#4a7c52"/>
<rect x="4" y="13" width="1" height="1" fill="#2a4c62"/>
<rect x="6" y="13" width="1" height="1" fill="#2a4c62"/>
<rect x="8" y="13" width="1" height="1" fill="#5a4650"/>
<rect x="9" y="13" width="1" height="1" fill="#4a7c52"/>
<rect x="10" y="13" width="1" height="1" fill="#5a4650"/>
<rect x="12" y="13" width="1" height="1" fill="#5a4650"/>
<rect x="14" y="13" width="1" height="1" fill="#2a4c62"/>
<rect x="16" y="13" width="1" height="1" fill="#5a4650"/>
<rect x="20" y="13" width="1" height="1" fill="#2a4c62"/>
<rect x="22" y="13" width="1" height="1" fill="#2a4c62"/>
<rect x="24" y="13" width="1" height="1" fill="#2a4c62"/>
<rect x="26" y="13" width="1" height="1" fill="#2a4c62"/>
<rect x="28" y="13" width="1" height="1" fill="#2a4c62"/>
<rect x="30" y="13" width="1" height="1" fill="#2a4c62"/>
<rect x="32" y="13" width="1" height="1" fill="#2a4c62"/>
<rect x="34" y="13" width="1" height="1" fill="#3672ba"/>
<rect x="36" y="13" width="1" height="1" fill="#6452ac"/>
<rect x="38" y="13" width="1" height="1" fill="#3672ba"/>
<rect x="40" y="13" width="1" height="1" fill="#6452ac"/>
<rect x="42" y="13" width="1" height="1" fill="#3672ba"/>
<rect x="44" y="13" width="1" height="1" fill="#2e609c"/>
<rect x="46" y="13" width="1" height="1" fill="#3672ba"/>
<rect x="48" y="13" width="1" height="1" fill="#2e609c"/>
<rect x="50" y="13" width="1" height="1" fill="#2e609c"/>
<rect x="52" y="13" width="1" height="1" fill="#3672ba"/>
<rect x="54" y="13" width="1" height="1" fill="#3672ba"/>
<rect x="56" y="13" width="1" height="1" fill="#3672ba"/>
<rect x="58" y="13" width="1" height="1" fill="#2e609c"/>
<rect x="60" y="13" width="1" height="1" fill="#3672ba"/>
<rect x="62" y="13" width="1" height="1" fill="#3672ba"/>
<rect x="64" y="13" width="1" height="1" fill="#3672ba"/>
<rect x="65" y="13" width="1" height="1" fill="#4a7c52"/>
<rect x="68" y="13" width="1" height="1" fill="#3672ba"/>
<rect x="70" y="13" width="1" height="1" fill="#3672ba"/>
<rect x="72" y="13" width="1" height="1" fill="#3672ba"/>
<rect x="74" y="13" width="1" height="1" fill="#2e609c"/>
<rect x="78" y="13" width="1" height="1" fill="#3672ba"/>
<rect x="80" y="13" width="1" height="1" fill="#3672ba"/>
<rect x="82" y="13" width="1" height="1" fill="#3672ba"/>
<rect x="84" y="13" width="1" height="1" fill="#6452ac"/>
<rect x="88" y="13" width="1" height="1" fill="#4a7c52"/>
<rect x="89" y="13" width="1" height="1" fill="#2e609c"/>
<rect x="91" y="13" width="1" height="1" fill="#3672ba"/>
<rect x="93" y="13" width="1" height="1" fill="#3672ba"/>
<rect x="95" y="13" width="1" height="1" fill="#2e609c"/>
<rect x="1" y="14" width="1" height="1" fill="#2e609c"/>
<rect x="3" y="14" width="1" height="1" fill="#3672ba"/>
<rect x="7" y="14" width="1" height="1" fill="#3672ba"/>
<rect x="8" y="14" width="1" height="1" fill="#4a7c52"/>
<rect x="9" y="14" width="1" height="1" fill="#3672ba"/>
<rect x="13" y="14" width="1" height="1" fill="#6452ac"/>
<rect x="14" y="14" width="1" height="1" fill="#4a7c52"/>
<rect x="15" y="14" width="1" height="1" fill="#2e609c"/>
<rect x="17" y="14" width="1" height="1" fill="#2e609c"/>
<rect x="19" y="14" width="1" height="1" fill="#3672ba"/>
<rect x="21" y="14" width="1" height="1" fill="#2e609c"/>
<rect x="23" y="14" width="1" height="1" fill="#2e609c"/>
<rect x="25" y="14" width="1" height="1" fill="#2e609c"/>
<rect x="27" y="14" width="1" height="1" fill="#3672ba"/>
<rect x="29" y="14" width="1" height="1" fill="#3672ba"/>
<rect x="31" y="14" width="1" height="1" fill="#3672ba"/>
<rect x="33" y="14" width="1" height="1" fill="#3672ba"/>
<rect x="35" y="14" width="1" height="1" fill="#2e609c"/>
<rect x="36" y="14" width="1" height="1" fill="#4a7c52"/>
<rect x="37" y="14" width="1" height="1" fill="#2e609c"/>
<rect x="39" y="14" width="1" height="1" fill="#3672ba"/>
<rect x="41" y="14" width="1" height="1" fill="#3672ba"/>
<rect x="43" y="14" width="1" height="1" fill="#5a4650"/>
<rect x="45" y="14" width="1" height="1" fill="#2a4c62"/>
<rect x="47" y="14" width="1" height="1" fill="#2a4c62"/>
<rect x="49" y="14" width="1" height="1" fill="#5a4650"/>
<rect x="51" y="14" width="1" height="1" fill="#2a4c62"/>
<rect x="53" y="14" width="1" height="1" fill="#5a4650"/>
<rect x="55" y="14" width="1" height="1" fill="#2a4c62"/>
<rect x="57" y="14" width="1" height="1" fill="#2a4c62"/>
<rect x="58" y="14" width="1" height="1" fill="#4a7c52"/>
<rect x="59" y="14" width="1" height="1" fill="#2a4c62"/>
<rect x="61" y="14" width="1" height="1" fill="#2a4c62"/>
<rect x="63" y="14" width="1" height="1" fill="#2a4c62"/>
<rect x="65" y="14" width="1" height="1" fill="#2a4c62"/>
<rect x="67" y="14" width="1" height="1" fill="#5a4650"/>
<rect x="69" y="14" width="1" height="1" fill="#2a4c62"/>
<rect x="71" y="14" width="1" height="1" fill="#2a4c62"/>
<rect x="73" y="14" width="1" height="1" fill="#2a4c62"/>
<rect x="75" y="14" width="1" height="1" fill="#2a4c62"/>
<rect x="77" y="14" width="1" height="1" fill="#2a4c62"/>
<rect x="79" y="14" width="1" height="1" fill="#2a4c62"/>
<rect x="81" y="14" width="1" height="1" fill="#2a4c62"/>
<rect x="83" y="14" width="1" height="1" fill="#2a4c62"/>
<rect x="87" y="14" width="1" height="1" fill="#2a4c62"/>
<rect x="89" y="14" width="1" height="1" fill="#5a4650"/>
<rect x="90" y="14" width="1" height="1" fill="#4a7c52"/>
<rect x="91" y="14" width="1" height="1" fill="#2a4c62"/>
<rect x="94" y="14" width="1" height="1" fill="#4a7c52"/>
<rect x="95" y="14" width="1" height="1" fill="#5a4650"/>
<rect x="0" y="15" width="1" height="1" fill="#3672ba"/>
<rect x="2" y="15" width="1" height="1" fill="#3672ba"/>
<rect x="4" y="15" width="1" height="1" fill="#3672ba"/>
<rect x="6" y="15" width="1" height="1" fill="#3672ba"/>
<rect x="8" y="15" width="1" height="1" fill="#3672ba"/>
<rect x="10" y="15" width="1" height="1" fill="#3672ba"/>
<rect x="12" y="15" width="1" height="1" fill="#2e609c"/>
<rect x="14" y="15" width="1" height="1" fill="#3672ba"/>
<rect x="16" y="15" width="1" height="1" fill="#3672ba"/>
<rect x="18" y="15" width="1" height="1" fill="#3672ba"/>
<rect x="20" y="15" width="1" height="1" fill="#3672ba"/>
<rect x="22" y="15" width="1" height="1" fill="#2e609c"/>
<rect x="24" y="15" width="1" height="1" fill="#2e609c"/>
<rect x="26" y="15" width="1" height="1" fill="#3672ba"/>
<rect x="28" y="15" width="1" height="1" fill="#3672ba"/>
<rect x="30" y="15" width="1" height="1" fill="#3672ba"/>
<rect x="32" y="15" width="1" height="1" fill="#3672ba"/>
<rect x="34" y="15" width="1" height="1" fill="#6452ac"/>
<rect x="36" y="15" width="1" height="1" fill="#2a4c62"/>
<rect x="38" y="15" width="1" height="1" fill="#2a4c62"/>
<rect x="40" y="15" width="1" height="1" fill="#2a4c62"/>
<rect x="42" y="15" width="1" height="1" fill="#5a4650"/>
<rect x="44" y="15" width="1" height="1" fill="#2a4c62"/>
<rect x="46" y="15" width="1" height="1" fill="#2a4c62"/>
<rect x="47" y="15" width="1" height="1" fill="#4a7c52"/>
<rect x="48" y="15" width="1" height="1" fill="#2a4c62"/>
<rect x="50" y="15" width="1" height="1" fill="#2a4c62"/>
<rect x="52" y="15" width="1" height="1" fill="#2a4c62"/>
<rect x="54" y="15" width="1" height="1" fill="#5a4650"/>
<rect x="56" y="15" width="1" height="1" fill="#2a4c62"/>
<rect x="58" y="15" width="1" height="1" fill="#2a4c62"/>
<rect x="59" y="15" width="1" height="1" fill="#4a7c52"/>
<rect x="60" y="15" width="1" height="1" fill="#5a4650"/>
<rect x="62" y="15" width="1" height="1" fill="#2a4c62"/>
<rect x="64" y="15" width="1" height="1" fill="#2a4c62"/>
<rect x="66" y="15" width="1" height="1" fill="#2a4c62"/>
<rect x="68" y="15" width="1" height="1" fill="#2a4c62"/>
<rect x="70" y="15" width="1" height="1" fill="#2a4c62"/>
<rect x="72" y="15" width="1" height="1" fill="#5a4650"/>
<rect x="73" y="15" width="1" height="1" fill="#4a7c52"/>
<rect x="74" y="15" width="1" height="1" fill="#2a4c62"/>
<rect x="76" y="15" width="1" height="1" fill="#2a4c62"/>
<rect x="77" y="15" width="1" height="1" fill="#4a7c52"/>
<rect x="78" y="15" width="1" height="1" fill="#2a4c62"/>
<rect x="80" y="15" width="1" height="1" fill="#2a4c62"/>
<rect x="82" y="15" width="1" height="1" fill="#2a4c62"/>
<rect x="84" y="15" width="1" height="1" fill="#2e609c"/>
<rect x="85" y="15" width="1" height="1" fill="#4a7c52"/>
<rect x="86" y="15" width="1" height="1" fill="#3672ba"/>
<rect x="88" y="15" width="1" height="1" fill="#3672ba"/>
<rect x="90" y="15" width="1" height="1" fill="#3672ba"/>
<rect x="92" y="15" width="1" height="1" fill="#3672ba"/>
<rect x="94" y="15" width="1" height="1" fill="#6452ac"/>
<rect x="0" y="16" width="1" height="1" fill="#2a4c62"/>
<rect x="2" y="16" width="1" height="1" fill="#2a4c62"/>
<rect x="6" y="16" width="1" height="1" fill="#2a4c62"/>
<rect x="8" y="16" width="1" height="1" fill="#2a4c62"/>
<rect x="12" y="16" width="1" height="1" fill="#2a4c62"/>
<rect x="14" y="16" width="1" height="1" fill="#2a4c62"/>
<rect x="20" y="16" width="1" height="1" fill="#5a4650"/>
<rect x="21" y="16" width="1" height="1" fill="#4a7c52"/>
<rect x="22" y="16" width="1" height="1" fill="#2a4c62"/>
<rect x="26" y="16" width="1" height="1" fill="#2a4c62"/>
<rect x="28" y="16" width="1" height="1" fill="#2a4c62"/>
<rect x="30" y="16" width="1" height="1" fill="#2a4c62"/>
<rect x="32" y="16" width="1" height="1" fill="#2a4c62"/>
<rect x="33" y="16" width="1" height="1" fill="#4a7c52"/>
<rect x="34" y="16" width="1" height="1" fill="#2a4c62"/>
<rect x="36" y="16" width="1" height="1" fill="#2e609c"/>
<rect x="38" y="16" width="1" height="1" fill="#2e609c"/>
<rect x="40" y="16" width="1" height="1" fill="#6452ac"/>
<rect x="42" y="16" width="1" height="1" fill="#3672ba"/>
<rect x="44" y="16" width="1" height="1" fill="#3672ba"/>
<rect x="46" y="16" width="1" height="1" fill="#3672ba"/>
<rect x="50" y="16" width="1" height="1" fill="#3672ba"/>
<rect x="52" y="16" width="1" height="1" fill="#3672ba"/>
<rect x="54" y="16" width="1" height="1" fill="#3672ba"/>
<rect x="56" y="16" width="1" height="1" fill="#2e609c"/>
<rect x="58" y="16" width="1" height="1" fill="#2e609c"/>
<rect x="60" y="16" width="1" height="1" fill="#3672ba"/>
<rect x="62" y="16" width="1" height="1" fill="#3672ba"/>
<rect x="64" y="16" width="1" height="1" fill="#3672ba"/>
<rect x="66" y="16" width="1" height="1" fill="#3672ba"/>
<rect x="68" y="16" width="1" height="1" fill="#3672ba"/>
<rect x="70" y="16" width="1" height="1" fill="#3672ba"/>
<rect x="72" y="16" width="1" height="1" fill="#3672ba"/>
<rect x="74" y="16" width="1" height="1" fill="#2e609c"/>
<rect x="76" y="16" width="1" height="1" fill="#2e609c"/>
<rect x="78" y="16" width="1" height="1" fill="#2e609c"/>
<rect x="80" y="16" width="1" height="1" fill="#3672ba"/>
<rect x="82" y="16" width="1" height="1" fill="#3672ba"/>
<rect x="84" y="16" width="1" height="1" fill="#2a4c62"/>
<rect x="86" y="16" width="1" height="1" fill="#2a4c62"/>
<rect x="88" y="16" width="1" height="1" fill="#2a4c62"/>
<rect x="89" y="16" width="1" height="1" fill="#4a7c52"/>
<rect x="90" y="16" width="1" height="1" fill="#2a4c62"/>
<rect x="92" y="16" width="1" height="1" fill="#2a4c62"/>
<rect x="94" y="16" width="1" height="1" fill="#2a4c62"/>
<rect x="2" y="17" width="1" height="1" fill="#2e609c"/>
<rect x="4" y="17" width="1" height="1" fill="#3672ba"/>
<rect x="6" y="17" width="1" height="1" fill="#3672ba"/>
<rect x="7" y="17" width="1" height="1" fill="#4a7c52"/>
<rect x="8" y="17" width="1" height="1" fill="#3672ba"/>
<rect x="10" y="17" width="1" height="1" fill="#2e609c"/>
<rect x="12" y="17" width="1" height="1" fill="#3672ba"/>
<rect x="14" y="17" width="1" height="1" fill="#2e609c"/>
<rect x="16" y="17" width="1" height="1" fill="#3672ba"/>
<rect x="18" y="17" width="1" height="1" fill="#2e609c"/>
<rect x="20" y="17" width="1" height="1" fill="#6452ac"/>
<rect x="22" y="17" width="1" height="1" fill="#3672ba"/>
<rect x="24" y="17" width="1" height="1" fill="#2e609c"/>
<rect x="26" y="17" width="1" height="1" fill="#3672ba"/>
<rect x="28" y="17" width="1" height="1" fill="#2e609c"/>
<rect x="30" y="17" width="1" height="1" fill="#3672ba"/>
<rect x="32" y="17" width="1" height="1" fill="#3672ba"/>
<rect x="34" y="17" width="1" height="1" fill="#2e609c"/>
<rect x="38" y="17" width="1" height="1" fill="#3672ba"/>
<rect x="40" y="17" width="1" height="1" fill="#6452ac"/>
<rect x="42" y="17" width="1" height="1" fill="#3672ba"/>
<rect x="44" y="17" width="1" height="1" fill="#3672ba"/>
<rect x="46" y="17" width="1" height="1" fill="#2a4c62"/>
<rect x="48" y="17" width="1" height="1" fill="#2a4c62"/>
<rect x="50" y="17" width="1" height="1" fill="#2a4c62"/>
<rect x="52" y="17" width="1" height="1" fill="#5a4650"/>
<rect x="54" y="17" width="1" height="1" fill="#2a4c62"/>
<rect x="56" y="17" width="1" height="1" fill="#2a4c62"/>
<rect x="58" y="17" width="1" height="1" fill="#2a4c62"/>
<rect x="60" y="17" width="1" height="1" fill="#2a4c62"/>
<rect x="62" y="17" width="1" height="1" fill="#2a4c62"/>
<rect x="64" y="17" width="1" height="1" fill="#5a4650"/>
<rect x="66" y="17" width="1" height="1" fill="#2a4c62"/>
<rect x="69" y="17" width="1" height="1" fill="#4a7c52"/>
<rect x="70" y="17" width="1" height="1" fill="#2a4c62"/>
<rect x="72" y="17" width="1" height="1" fill="#2a4c62"/>
<rect x="74" y="17" width="1" height="1" fill="#2a4c62"/>
<rect x="78" y="17" width="1" height="1" fill="#2a4c62"/>
<rect x="80" y="17" width="1" height="1" fill="#2a4c62"/>
<rect x="81" y="17" width="1" height="1" fill="#3672ba"/>
<rect x="83" y="17" width="1" height="1" fill="#3672ba"/>
<rect x="85" y="17" width="1" height="1" fill="#2e609c"/>
<rect x="87" y="17" width="1" height="1" fill="#3672ba"/>
<rect x="89" y="17" width="1" height="1" fill="#3672ba"/>
<rect x="91" y="17" width="1" height="1" fill="#2e609c"/>
<rect x="95" y="17" width="1" height="1" fill="#3672ba"/>
<rect x="0" y="18" width="1" height="1" fill="#2a4c62"/>
<rect x="2" y="18" width="1" height="1" fill="#2a4c62"/>
<rect x="4" y="18" width="1" height="1" fill="#5a4650"/>
<rect x="6" y="18" width="1" height="1" fill="#2a4c62"/>
<rect x="8" y="18" width="1" height="1" fill="#5a4650"/>
<rect x="10" y="18" width="1" height="1" fill="#2a4c62"/>
<rect x="12" y="18" width="1" height="1" fill="#2a4c62"/>
<rect x="16" y="18" width="1" height="1" fill="#2a4c62"/>
<rect x="18" y="18" width="1" height="1" fill="#2a4c62"/>
<rect x="20" y="18" width="1" height="1" fill="#2a4c62"/>
<rect x="22" y="18" width="1" height="1" fill="#2a4c62"/>
<rect x="24" y="18" width="1" height="1" fill="#2a4c62"/>
<rect x="28" y="18" width="1" height="1" fill="#2a4c62"/>
<rect x="30" y="18" width="1" height="1" fill="#2a4c62"/>
<rect x="32" y="18" width="1" height="1" fill="#2a4c62"/>
<rect x="33" y="18" width="1" height="1" fill="#4a7c52"/>
<rect x="34" y="18" width="1" height="1" fill="#2a4c62"/>
<rect x="36" y="18" width="1" height="1" fill="#2a4c62"/>
<rect x="38" y="18" width="1" height="1" fill="#2a4c62"/>
<rect x="40" y="18" width="1" height="1" fill="#2a4c62"/>
<rect x="42" y="18" width="1" height="1" fill="#2a4c62"/>
<rect x="46" y="18" width="1" height="1" fill="#3672ba"/>
<rect x="48" y="18" width="1" height="1" fill="#3672ba"/>
<rect x="50" y="18" width="1" height="1" fill="#3672ba"/>
<rect x="52" y="18" width="1" height="1" fill="#3672ba"/>
<rect x="54" y="18" width="1" height="1" fill="#6452ac"/>
<rect x="56" y="18" width="1" height="1" fill="#6452ac"/>
<rect x="57" y="18" width="1" height="1" fill="#4a7c52"/>
<rect x="58" y="18" width="1" height="1" fill="#3672ba"/>
<rect x="60" y="18" width="1" height="1" fill="#3672ba"/>
<rect x="62" y="18" width="1" height="1" fill="#3672ba"/>
<rect x="64" y="18" width="1" height="1" fill="#3672ba"/>
<rect x="68" y="18" width="1" height="1" fill="#3672ba"/>
<rect x="70" y="18" width="1" height="1" fill="#3672ba"/>
<rect x="71" y="18" width="1" height="1" fill="#4a7c52"/>
<rect x="72" y="18" width="1" height="1" fill="#6452ac"/>
<rect x="76" y="18" width="1" height="1" fill="#2e609c"/>
<rect x="78" y="18" width="1" height="1" fill="#3672ba"/>
<rect x="80" y="18" width="1" height="1" fill="#6452ac"/>
<rect x="81" y="18" width="1" height="1" fill="#2a4c62"/>
<rect x="83" y="18" width="1" height="1" fill="#5a4650"/>
<rect x="85" y="18" width="1" height="1" fill="#2a4c62"/>
<rect x="87" y="18" width="1" height="1" fill="#2a4c62"/>
<rect x="89" y="18" width="1" height="1" fill="#2a4c62"/>
<rect x="91" y="18" width="1" height="1" fill="#2a4c62"/>
<rect x="93" y="18" width="1" height="1" fill="#2a4c62"/>
<rect x="95" y="18" width="1" height="1" fill="#2a4c62"/>
<rect x="0" y="19" width="1" height="1" fill="#2a4c62"/>
<rect x="2" y="19" width="1" height="1" fill="#2a4c62"/>
<rect x="4" y="19" width="1" height="1" fill="#2a4c62"/>
<rect x="6" y="19" width="1" height="1" fill="#2a4c62"/>
<rect x="8" y="19" width="1" height="1" fill="#2a4c62"/>
<rect x="10" y="19" width="1" height="1" fill="#2a4c62"/>
<rect x="12" y="19" width="1" height="1" fill="#2a4c62"/>
<rect x="14" y="19" width="1" height="1" fill="#5a4650"/>
<rect x="16" y="19" width="1" height="1" fill="#2a4c62"/>
<rect x="18" y="19" width="1" height="1" fill="#2a4c62"/>
<rect x="20" y="19" width="1" height="1" fill="#2a4c62"/>
<rect x="22" y="19" width="1" height="1" fill="#2a4c62"/>
<rect x="24" y="19" width="1" height="1" fill="#2a4c62"/>
<rect x="26" y="19" width="1" height="1" fill="#2a4c62"/>
<rect x="28" y="19" width="1" height="1" fill="#2a4c62"/>
<rect x="30" y="19" width="1" height="1" fill="#5a4650"/>
<rect x="32" y="19" width="1" height="1" fill="#2a4c62"/>
<rect x="34" y="19" width="1" height="1" fill="#2a4c62"/>
<rect x="40" y="19" width="1" height="1" fill="#3672ba"/>
<rect x="42" y="19" width="1" height="1" fill="#3672ba"/>
<rect x="44" y="19" width="1" height="1" fill="#3672ba"/>
<rect x="46" y="19" width="1" height="1" fill="#2e609c"/>
<rect x="48" y="19" width="1" height="1" fill="#3672ba"/>
<rect x="50" y="19" width="1" height="1" fill="#3672ba"/>
<rect x="52" y="19" width="1" height="1" fill="#3672ba"/>
<rect x="54" y="19" width="1" height="1" fill="#3672ba"/>
<rect x="56" y="19" width="1" height="1" fill="#2e609c"/>
<rect x="58" y="19" width="1" height="1" fill="#2e609c"/>
<rect x="60" y="19" width="1" height="1" fill="#3672ba"/>
<rect x="62" y="19" width="1" height="1" fill="#3672ba"/>
<rect x="64" y="19" width="1" height="1" fill="#6452ac"/>
<rect x="66" y="19" width="1" height="1" fill="#2e609c"/>
<rect x="68" y="19" width="1" height="1" fill="#2e609c"/>
<rect x="70" y="19" width="1" height="1" fill="#3672ba"/>
<rect x="72" y="19" width="1" height="1" fill="#3672ba"/>
<rect x="74" y="19" width="1" height="1" fill="#3672ba"/>
<rect x="76" y="19" width="1" height="1" fill="#2e609c"/>
<rect x="78" y="19" width="1" height="1" fill="#3672ba"/>
<rect x="80" y="19" width="1" height="1" fill="#2e609c"/>
<rect x="82" y="19" width="1" height="1" fill="#6452ac"/>
<rect x="84" y="19" width="1" height="1" fill="#3672ba"/>
<rect x="85" y="19" width="1" height="1" fill="#4a7c52"/>
<rect x="86" y="19" width="1" height="1" fill="#2e609c"/>
<rect x="88" y="19" width="1" height="1" fill="#3672ba"/>
<rect x="90" y="19" width="1" height="1" fill="#2e609c"/>
<rect x="92" y="19" width="1" height="1" fill="#3672ba"/>
<rect x="94" y="19" width="1" height="1" fill="#3672ba"/>
<rect x="0" y="20" width="1" height="1" fill="#3672ba"/>
<rect x="4" y="20" width="1" height="1" fill="#2e609c"/>
<rect x="5" y="20" width="1" height="1" fill="#4a7c52"/>
<rect x="6" y="20" width="1" height="1" fill="#3672ba"/>
<rect x="8" y="20" width="1" height="1" fill="#3672ba"/>
<rect x="10" y="20" width="1" height="1" fill="#3672ba"/>
<rect x="11" y="20" width="1" height="1" fill="#4a7c52"/>
<rect x="12" y="20" width="1" height="1" fill="#3672ba"/>
<rect x="14" y="20" width="1" height="1" fill="#3672ba"/>
<rect x="16" y="20" width="1" height="1" fill="#2e609c"/>
<rect x="18" y="20" width="1" height="1" fill="#3672ba"/>
<rect x="20" y="20" width="1" height="1" fill="#2e609c"/>
<rect x="22" y="20" width="1" height="1" fill="#3672ba"/>
<rect x="24" y="20" width="1" height="1" fill="#2e609c"/>
<rect x="26" y="20" width="1" height="1" fill="#3672ba"/>
<rect x="28" y="20" width="1" height="1" fill="#2e609c"/>
<rect x="29" y="20" width="1" height="1" fill="#4a7c52"/>
<rect x="30" y="20" width="1" height="1" fill="#3672ba"/>
<rect x="32" y="20" width="1" height="1" fill="#2e609c"/>
<rect x="36" y="20" width="1" height="1" fill="#3672ba"/>
<rect x="38" y="20" width="1" height="1" fill="#2a4c62"/>
<rect x="40" y="20" width="1" height="1" fill="#5a4650"/>
<rect x="42" y="20" width="1" height="1" fill="#2a4c62"/>
<rect x="44" y="20" width="1" height="1" fill="#2a4c62"/>
<rect x="46" y="20" width="1" height="1" fill="#2a4c62"/>
<rect x="48" y="20" width="1" height="1" fill="#5a4650"/>
<rect x="50" y="20" width="1" height="1" fill="#2a4c62"/>
<rect x="51" y="20" width="1" height="1" fill="#4a7c52"/>
<rect x="52" y="20" width="1" height="1" fill="#2a4c62"/>
<rect x="54" y="20" width="1" height="1" fill="#2a4c62"/>
<rect x="56" y="20" width="1" height="1" fill="#2a4c62"/>
<rect x="58" y="20" width="1" height="1" fill="#2a4c62"/>
<rect x="60" y="20" width="1" height="1" fill="#5a4650"/>
<rect x="62" y="20" width="1" height="1" fill="#2a4c62"/>
<rect x="64" y="20" width="1" height="1" fill="#2a4c62"/>
<rect x="66" y="20" width="1" height="1" fill="#2a4c62"/>
<rect x="67" y="20" width="1" height="1" fill="#4a7c52"/>
<rect x="68" y="20" width="1" height="1" fill="#2a4c62"/>
<rect x="70" y="20" width="1" height="1" fill="#2a4c62"/>
<rect x="72" y="20" width="1" height="1" fill="#2a4c62"/>
<rect x="74" y="20" width="1" height="1" fill="#2a4c62"/>
<rect x="76" y="20" width="1" height="1" fill="#2a4c62"/>
<rect x="78" y="20" width="1" height="1" fill="#2a4c62"/>
<rect x="80" y="20" width="1" height="1" fill="#2a4c62"/>
<rect x="82" y="20" width="1" height="1" fill="#5a4650"/>
<rect x="84" y="20" width="1" height="1" fill="#2a4c62"/>
<rect x="86" y="20" width="1" height="1" fill="#5a4650"/>
<rect x="88" y="20" width="1" height="1" fill="#2a4c62"/>
<rect x="90" y="20" width="1" height="1" fill="#2a4c62"/>
<rect x="92" y="20" width="1" height="1" fill="#2a4c62"/>
<rect x="94" y="20" width="1" height="1" fill="#5a4650"/>
<rect x="1" y="21" width="1" height="1" fill="#2a4c62"/>
<rect x="3" y="21" width="1" height="1" fill="#2a4c62"/>
<rect x="5" y="21" width="1" height="1" fill="#2a4c62"/>
<rect x="7" y="21" width="1" height="1" fill="#2a4c62"/>
<rect x="9" y="21" width="1" height="1" fill="#2a4c62"/>
<rect x="11" y="21" width="1" height="1" fill="#2a4c62"/>
<rect x="13" y="21" width="1" height="1" fill="#2a4c62"/>
<rect x="14" y="21" width="1" height="1" fill="#4a7c52"/>
<rect x="16" y="21" width="1" height="1" fill="#2a4c62"/>
<rect x="18" y="21" width="1" height="1" fill="#2a4c62"/>
<rect x="20" y="21" width="1" height="1" fill="#2a4c62"/>
<rect x="22" y="21" width="1" height="1" fill="#2a4c62"/>
<rect x="24" y="21" width="1" height="1" fill="#2a4c62"/>
<rect x="26" y="21" width="1" height="1" fill="#2a4c62"/>
<rect x="28" y="21" width="1" height="1" fill="#2a4c62"/>
<rect x="32" y="21" width="1" height="1" fill="#2a4c62"/>
<rect x="33" y="21" width="1" height="1" fill="#2a4c62"/>
<rect x="35" y="21" width="1" height="1" fill="#2a4c62"/>
<rect x="37" y="21" width="1" height="1" fill="#5a4650"/>
<rect x="39" y="21" width="1" height="1" fill="#2a4c62"/>
<rect x="41" y="21" width="1" height="1" fill="#5a4650"/>
<rect x="43" y="21" width="1" height="1" fill="#2a4c62"/>
<rect x="45" y="21" width="1" height="1" fill="#6452ac"/>
<rect x="47" y="21" width="1" height="1" fill="#3672ba"/>
<rect x="49" y="21" width="1" height="1" fill="#6452ac"/>
<rect x="51" y="21" width="1" height="1" fill="#3672ba"/>
<rect x="53" y="21" width="1" height="1" fill="#3672ba"/>
<rect x="55" y="21" width="1" height="1" fill="#3672ba"/>
<rect x="56" y="21" width="1" height="1" fill="#4a7c52"/>
<rect x="57" y="21" width="1" height="1" fill="#2e609c"/>
<rect x="59" y="21" width="1" height="1" fill="#6452ac"/>
<rect x="63" y="21" width="1" height="1" fill="#3672ba"/>
<rect x="65" y="21" width="1" height="1" fill="#3672ba"/>
<rect x="67" y="21" width="1" height="1" fill="#2e609c"/>
<rect x="69" y="21" width="1" height="1" fill="#2e609c"/>
<rect x="71" y="21" width="1" height="1" fill="#3672ba"/>
<rect x="73" y="21" width="1" height="1" fill="#3672ba"/>
<rect x="74" y="21" width="1" height="1" fill="#4a7c52"/>
<rect x="75" y="21" width="1" height="1" fill="#3672ba"/>
<rect x="77" y="21" width="1" height="1" fill="#2e609c"/>
<rect x="78" y="21" width="1" height="1" fill="#4a7c52"/>
<rect x="79" y="21" width="1" height="1" fill="#6452ac"/>
<rect x="81" y="21" width="1" height="1" fill="#2e609c"/>
<rect x="83" y="21" width="1" height="1" fill="#3672ba"/>
<rect x="85" y="21" width="1" height="1" fill="#3672ba"/>
<rect x="87" y="21" width="1" height="1" fill="#3672ba"/>
<rect x="89" y="21" width="1" height="1" fill="#2e609c"/>
<rect x="93" y="21" width="1" height="1" fill="#4a86c4"/>
<rect x="1" y="22" width="1" height="1" fill="#3672ba"/>
<rect x="3" y="22" width="1" height="1" fill="#3672ba"/>
<rect x="9" y="22" width="1" height="1" fill="#2e609c"/>
<rect x="11" y="22" width="1" height="1" fill="#3672ba"/>
<rect x="13" y="22" width="1" height="1" fill="#2e609c"/>
<rect x="18" y="22" width="1" height="1" fill="#2e609c"/>
<rect x="20" y="22" width="1" height="1" fill="#3672ba"/>
<rect x="22" y="22" width="1" height="1" fill="#3672ba"/>
<rect x="24" y="22" width="1" height="1" fill="#2e609c"/>
<rect x="26" y="22" width="1" height="1" fill="#3672ba"/>
<rect x="28" y="22" width="1" height="1" fill="#3672ba"/>
<rect x="30" y="22" width="1" height="1" fill="#3672ba"/>
<rect x="32" y="22" width="1" height="1" fill="#2e609c"/>
<rect x="33" y="22" width="1" height="1" fill="#3672ba"/>
<rect x="35" y="22" width="1" height="1" fill="#3672ba"/>
<rect x="37" y="22" width="1" height="1" fill="#3672ba"/>
<rect x="39" y="22" width="1" height="1" fill="#6452ac"/>
<rect x="41" y="22" width="1" height="1" fill="#3672ba"/>
<rect x="43" y="22" width="1" height="1" fill="#3672ba"/>
<rect x="45" y="22" width="1" height="1" fill="#2a4c62"/>
<rect x="47" y="22" width="1" height="1" fill="#2a4c62"/>
<rect x="49" y="22" width="1" height="1" fill="#2a4c62"/>
<rect x="51" y="22" width="1" height="1" fill="#2a4c62"/>
<rect x="53" y="22" width="1" height="1" fill="#2a4c62"/>
<rect x="55" y="22" width="1" height="1" fill="#5a4650"/>
<rect x="57" y="22" width="1" height="1" fill="#2a4c62"/>
<rect x="59" y="22" width="1" height="1" fill="#2a4c62"/>
<rect x="61" y="22" width="1" height="1" fill="#2a4c62"/>
<rect x="63" y="22" width="1" height="1" fill="#5a4650"/>
<rect x="65" y="22" width="1" height="1" fill="#2a4c62"/>
<rect x="67" y="22" width="1" height="1" fill="#2a4c62"/>
<rect x="69" y="22" width="1" height="1" fill="#2a4c62"/>
<rect x="71" y="22" width="1" height="1" fill="#2a4c62"/>
<rect x="73" y="22" width="1" height="1" fill="#2a4c62"/>
<rect x="74" y="22" width="1" height="1" fill="#4a7c52"/>
<rect x="75" y="22" width="1" height="1" fill="#2a4c62"/>
<rect x="77" y="22" width="1" height="1" fill="#2a4c62"/>
<rect x="79" y="22" width="1" height="1" fill="#2a4c62"/>
<rect x="81" y="22" width="1" height="1" fill="#2a4c62"/>
<rect x="83" y="22" width="1" height="1" fill="#2a4c62"/>
<rect x="85" y="22" width="1" height="1" fill="#5a4650"/>
<rect x="87" y="22" width="1" height="1" fill="#2a4c62"/>
<rect x="89" y="22" width="1" height="1" fill="#2a4c62"/>
<rect x="91" y="22" width="1" height="1" fill="#5a4650"/>
<rect x="95" y="22" width="1" height="1" fill="#3874bc"/>
<rect x="1" y="23" width="1" height="1" fill="#2a4c62"/>
<rect x="3" y="23" width="1" height="1" fill="#2a4c62"/>
<rect x="5" y="23" width="1" height="1" fill="#2a4c62"/>
<rect x="7" y="23" width="1" height="1" fill="#2a4c62"/>
<rect x="9" y="23" width="1" height="1" fill="#2a4c62"/>
<rect x="10" y="23" width="1" height="1" fill="#4a7c52"/>
<rect x="13" y="23" width="1" height="1" fill="#2a4c62"/>
<rect x="15" y="23" width="1" height="1" fill="#2a4c62"/>
<rect x="17" y="23" width="1" height="1" fill="#2a4c62"/>
<rect x="20" y="23" width="1" height="1" fill="#2e609c"/>
<rect x="22" y="23" width="1" height="1" fill="#2e609c"/>
<rect x="26" y="23" width="1" height="1" fill="#3672ba"/>
<rect x="28" y="23" width="1" height="1" fill="#3672ba"/>
<rect x="30" y="23" width="1" height="1" fill="#3672ba"/>
<rect x="32" y="23" width="1" height="1" fill="#3672ba"/>
<rect x="34" y="23" width="1" height="1" fill="#3672ba"/>
<rect x="36" y="23" width="1" height="1" fill="#2e609c"/>
<rect x="38" y="23" width="1" height="1" fill="#6452ac"/>
<rect x="40" y="23" width="1" height="1" fill="#2e609c"/>
<rect x="42" y="23" width="1" height="1" fill="#3672ba"/>
<rect x="44" y="23" width="1" height="1" fill="#3672ba"/>
<rect x="46" y="23" width="1" height="1" fill="#3672ba"/>
<rect x="48" y="23" width="1" height="1" fill="#3672ba"/>
<rect x="50" y="23" width="1" height="1" fill="#3672ba"/>
<rect x="52" y="23" width="1" height="1" fill="#2e609c"/>
<rect x="54" y="23" width="1" height="1" fill="#3672ba"/>
<rect x="56" y="23" width="1" height="1" fill="#3672ba"/>
<rect x="58" y="23" width="1" height="1" fill="#3672ba"/>
<rect x="60" y="23" width="1" height="1" fill="#3672ba"/>
<rect x="63" y="23" width="1" height="1" fill="#2a4c62"/>
<rect x="65" y="23" width="1" height="1" fill="#2a4c62"/>
<rect x="67" y="23" width="1" height="1" fill="#2a4c62"/>
<rect x="69" y="23" width="1" height="1" fill="#2a4c62"/>
<rect x="71" y="23" width="1" height="1" fill="#2a4c62"/>
<rect x="73" y="23" width="1" height="1" fill="#2a4c62"/>
<rect x="77" y="23" width="1" height="1" fill="#2a4c62"/>
<rect x="79" y="23" width="1" height="1" fill="#2a4c62"/>
<rect x="81" y="23" width="1" height="1" fill="#2a4c62"/>
<rect x="83" y="23" width="1" height="1" fill="#2a4c62"/>
<rect x="85" y="23" width="1" height="1" fill="#2a4c62"/>
<rect x="89" y="23" width="1" height="1" fill="#2a4c62"/>
<rect x="91" y="23" width="1" height="1" fill="#2a4c62"/>
<rect x="93" y="23" width="1" height="1" fill="#2a4c62"/>
<rect x="95" y="23" width="1" height="1" fill="#2a4c62"/>
<rect x="1" y="24" width="1" height="1" fill="#6452ac"/>
<rect x="3" y="24" width="1" height="1" fill="#3672ba"/>
<rect x="5" y="24" width="1" height="1" fill="#6452ac"/>
<rect x="7" y="24" width="1" height="1" fill="#3672ba"/>
<rect x="9" y="24" width="1" height="1" fill="#6452ac"/>
<rect x="11" y="24" width="1" height="1" fill="#3672ba"/>
<rect x="13" y="24" width="1" height="1" fill="#2e609c"/>
<rect x="15" y="24" width="1" height="1" fill="#2e609c"/>
<rect x="17" y="24" width="1" height="1" fill="#2e609c"/>
<rect x="20" y="24" width="1" height="1" fill="#2a4c62"/>
<rect x="22" y="24" width="1" height="1" fill="#2a4c62"/>
<rect x="26" y="24" width="1" height="1" fill="#2a4c62"/>
<rect x="28" y="24" width="1" height="1" fill="#2a4c62"/>
<rect x="30" y="24" width="1" height="1" fill="#2a4c62"/>
<rect x="34" y="24" width="1" height="1" fill="#2a4c62"/>
<rect x="36" y="24" width="1" height="1" fill="#5a4650"/>
<rect x="38" y="24" width="1" height="1" fill="#2a4c62"/>
<rect x="40" y="24" width="1" height="1" fill="#2a4c62"/>
<rect x="41" y="24" width="1" height="1" fill="#4a7c52"/>
<rect x="42" y="24" width="1" height="1" fill="#2a4c62"/>
<rect x="44" y="24" width="1" height="1" fill="#5a4650"/>
<rect x="46" y="24" width="1" height="1" fill="#2a4c62"/>
<rect x="48" y="24" width="1" height="1" fill="#2a4c62"/>
<rect x="49" y="24" width="1" height="1" fill="#4a7c52"/>
<rect x="50" y="24" width="1" height="1" fill="#2a4c62"/>
<rect x="51" y="24" width="1" height="1" fill="#4a7c52"/>
<rect x="52" y="24" width="1" height="1" fill="#2a4c62"/>
<rect x="54" y="24" width="1" height="1" fill="#2a4c62"/>
<rect x="56" y="24" width="1" height="1" fill="#2a4c62"/>
<rect x="58" y="24" width="1" height="1" fill="#2a4c62"/>
<rect x="59" y="24" width="1" height="1" fill="#4a7c52"/>
<rect x="60" y="24" width="1" height="1" fill="#2a4c62"/>
<rect x="61" y="24" width="1" height="1" fill="#4a7c52"/>
<rect x="63" y="24" width="1" height="1" fill="#6452ac"/>
<rect x="64" y="24" width="1" height="1" fill="#4a7c52"/>
<rect x="65" y="24" width="1" height="1" fill="#3672ba"/>
<rect x="67" y="24" width="1" height="1" fill="#6452ac"/>
<rect x="69" y="24" width="1" height="1" fill="#6452ac"/>
<rect x="71" y="24" width="1" height="1" fill="#3672ba"/>
<rect x="73" y="24" width="1" height="1" fill="#2e609c"/>
<rect x="75" y="24" width="1" height="1" fill="#3672ba"/>
<rect x="77" y="24" width="1" height="1" fill="#6452ac"/>
<rect x="78" y="24" width="1" height="1" fill="#4a7c52"/>
<rect x="79" y="24" width="1" height="1" fill="#3672ba"/>
<rect x="81" y="24" width="1" height="1" fill="#3672ba"/>
<rect x="83" y="24" width="1" height="1" fill="#2e609c"/>
<rect x="85" y="24" width="1" height="1" fill="#3672ba"/>
<rect x="86" y="24" width="1" height="1" fill="#4a7c52"/>
<rect x="87" y="24" width="1" height="1" fill="#3672ba"/>
<rect x="89" y="24" width="1" height="1" fill="#6452ac"/>
<rect x="91" y="24" width="1" height="1" fill="#3672ba"/>
<rect x="93" y="24" width="1" height="1" fill="#2e609c"/>
<rect x="95" y="24" width="1" height="1" fill="#3672ba"/>
<rect x="1" y="25" width="1" height="1" fill="#2a4c62"/>
<rect x="3" y="25" width="1" height="1" fill="#4a86c4"/>
<rect x="5" y="25" width="1" height="1" fill="#6452ac"/>
<rect x="7" y="25" width="1" height="1" fill="#4a86c4"/>
<rect x="11" y="25" width="1" height="1" fill="#3874bc"/>
<rect x="13" y="25" width="1" height="1" fill="#6452ac"/>
<rect x="15" y="25" width="1" height="1" fill="#4a86c4"/>
<rect x="17" y="25" width="1" height="1" fill="#3874bc"/>
<rect x="21" y="25" width="1" height="1" fill="#2a4c62"/>
<rect x="22" y="25" width="1" height="1" fill="#3672ba"/>
<rect x="24" y="25" width="1" height="1" fill="#2e609c"/>
<rect x="26" y="25" width="1" height="1" fill="#6452ac"/>
<rect x="28" y="25" width="1" height="1" fill="#2e609c"/>
<rect x="30" y="25" width="1" height="1" fill="#3672ba"/>
<rect x="32" y="25" width="1" height="1" fill="#3672ba"/>
<rect x="34" y="25" width="1" height="1" fill="#3672ba"/>
<rect x="38" y="25" width="1" height="1" fill="#3672ba"/>
<rect x="40" y="25" width="1" height="1" fill="#3672ba"/>
<rect x="42" y="25" width="1" height="1" fill="#3672ba"/>
<rect x="46" y="25" width="1" height="1" fill="#3672ba"/>
<rect x="48" y="25" width="1" height="1" fill="#3672ba"/>
<rect x="50" y="25" width="1" height="1" fill="#3672ba"/>
<rect x="52" y="25" width="1" height="1" fill="#6452ac"/>
<rect x="53" y="25" width="1" height="1" fill="#4a7c52"/>
<rect x="54" y="25" width="1" height="1" fill="#3672ba"/>
<rect x="56" y="25" width="1" height="1" fill="#3672ba"/>
<rect x="58" y="25" width="1" height="1" fill="#3672ba"/>
<rect x="60" y="25" width="1" height="1" fill="#3672ba"/>
<rect x="62" y="25" width="1" height="1" fill="#3672ba"/>
<rect x="64" y="25" width="1" height="1" fill="#2e609c"/>
<rect x="67" y="25" width="1" height="1" fill="#2a4c62"/>
<rect x="69" y="25" width="1" height="1" fill="#2a4c62"/>
<rect x="71" y="25" width="1" height="1" fill="#2a4c62"/>
<rect x="72" y="25" width="1" height="1" fill="#4a7c52"/>
<rect x="73" y="25" width="1" height="1" fill="#5a4650"/>
<rect x="75" y="25" width="1" height="1" fill="#2a4c62"/>
<rect x="79" y="25" width="1" height="1" fill="#2a4c62"/>
<rect x="80" y="25" width="1" height="1" fill="#6452ac"/>
<rect x="81" y="25" width="1" height="1" fill="#4a7c52"/>
<rect x="82" y="25" width="1" height="1" fill="#4a86c4"/>
<rect x="84" y="25" width="1" height="1" fill="#6452ac"/>
<rect x="86" y="25" width="1" height="1" fill="#2a4c62"/>
<rect x="88" y="25" width="1" height="1" fill="#6452ac"/>
<rect x="90" y="25" width="1" height="1" fill="#3874bc"/>
<rect x="92" y="25" width="1" height="1" fill="#4a86c4"/>
<rect x="94" y="25" width="1" height="1" fill="#4a86c4"/>
<rect x="1" y="26" width="1" height="1" fill="#2a4c62"/>
<rect x="3" y="26" width="1" height="1" fill="#3874bc"/>
<rect x="4" y="26" width="1" height="1" fill="#4a7c52"/>
<rect x="5" y="26" width="1" height="1" fill="#2a4c62"/>
<rect x="7" y="26" width="1" height="1" fill="#3874bc"/>
<rect x="8" y="26" width="1" height="1" fill="#4a7c52"/>
<rect x="9" y="26" width="1" height="1" fill="#3874bc"/>
<rect x="11" y="26" width="1" height="1" fill="#4a86c4"/>
<rect x="13" y="26" width="1" height="1" fill="#3874bc"/>
<rect x="15" y="26" width="1" height="1" fill="#2a4c62"/>
<rect x="17" y="26" width="1" height="1" fill="#3874bc"/>
<rect x="19" y="26" width="1" height="1" fill="#3874bc"/>
<rect x="21" y="26" width="1" height="1" fill="#2a4c62"/>
<rect x="23" y="26" width="1" height="1" fill="#2a4c62"/>
<rect x="24" y="26" width="1" height="1" fill="#4a7c52"/>
<rect x="25" y="26" width="1" height="1" fill="#3874bc"/>
<rect x="29" y="26" width="1" height="1" fill="#2a4c62"/>
<rect x="31" y="26" width="1" height="1" fill="#2a4c62"/>
<rect x="33" y="26" width="1" height="1" fill="#2a4c62"/>
<rect x="35" y="26" width="1" height="1" fill="#2a4c62"/>
<rect x="37" y="26" width="1" height="1" fill="#2a4c62"/>
<rect x="39" y="26" width="1" height="1" fill="#2a4c62"/>
<rect x="41" y="26" width="1" height="1" fill="#2a4c62"/>
<rect x="43" y="26" width="1" height="1" fill="#2a4c62"/>
<rect x="45" y="26" width="1" height="1" fill="#5a4650"/>
<rect x="47" y="26" width="1" height="1" fill="#2a4c62"/>
<rect x="49" y="26" width="1" height="1" fill="#2a4c62"/>
<rect x="51" y="26" width="1" height="1" fill="#2a4c62"/>
<rect x="55" y="26" width="1" height="1" fill="#2a4c62"/>
<rect x="57" y="26" width="1" height="1" fill="#2a4c62"/>
<rect x="58" y="26" width="1" height="1" fill="#4a7c52"/>
<rect x="59" y="26" width="1" height="1" fill="#2a4c62"/>
<rect x="61" y="26" width="1" height="1" fill="#2a4c62"/>
<rect x="63" y="26" width="1" height="1" fill="#2a4c62"/>
<rect x="65" y="26" width="1" height="1" fill="#2a4c62"/>
<rect x="67" y="26" width="1" height="1" fill="#2a4c62"/>
<rect x="69" y="26" width="1" height="1" fill="#2a4c62"/>
<rect x="71" y="26" width="1" height="1" fill="#2a4c62"/>
<rect x="74" y="26" width="1" height="1" fill="#2a4c62"/>
<rect x="76" y="26" width="1" height="1" fill="#2a4c62"/>
<rect x="77" y="26" width="1" height="1" fill="#4a7c52"/>
<rect x="80" y="26" width="1" height="1" fill="#2a4c62"/>
<rect x="82" y="26" width="1" height="1" fill="#2a4c62"/>
<rect x="84" y="26" width="1" height="1" fill="#2a4c62"/>
<rect x="86" y="26" width="1" height="1" fill="#2a4c62"/>
<rect x="88" y="26" width="1" height="1" fill="#5a4650"/>
<rect x="90" y="26" width="1" height="1" fill="#2a4c62"/>
<rect x="92" y="26" width="1" height="1" fill="#2a4c62"/>
<rect x="94" y="26" width="1" height="1" fill="#2a4c62"/>
<rect x="0" y="27" width="1" height="1" fill="#2a4c62"/>
<rect x="2" y="27" width="1" height="1" fill="#2a4c62"/>
<rect x="4" y="27" width="1" height="1" fill="#2a4c62"/>
<rect x="6" y="27" width="1" height="1" fill="#2a4c62"/>
<rect x="10" y="27" width="1" height="1" fill="#2a4c62"/>
<rect x="12" y="27" width="1" height="1" fill="#2a4c62"/>
<rect x="14" y="27" width="1" height="1" fill="#5a4650"/>
<rect x="16" y="27" width="1" height="1" fill="#2a4c62"/>
<rect x="18" y="27" width="1" height="1" fill="#2a4c62"/>
<rect x="20" y="27" width="1" height="1" fill="#2a4c62"/>
<rect x="22" y="27" width="1" height="1" fill="#2a4c62"/>
<rect x="24" y="27" width="1" height="1" fill="#2a4c62"/>
<rect x="26" y="27" width="1" height="1" fill="#2a4c62"/>
<rect x="28" y="27" width="1" height="1" fill="#2a4c62"/>
<rect x="30" y="27" width="1" height="1" fill="#2a4c62"/>
<rect x="32" y="27" width="1" height="1" fill="#2a4c62"/>
<rect x="34" y="27" width="1" height="1" fill="#2a4c62"/>
<rect x="36" y="27" width="1" height="1" fill="#2a4c62"/>
<rect x="37" y="27" width="1" height="1" fill="#4a86c4"/>
<rect x="39" y="27" width="1" height="1" fill="#3874bc"/>
<rect x="41" y="27" width="1" height="1" fill="#2a4c62"/>
<rect x="43" y="27" width="1" height="1" fill="#6452ac"/>
<rect x="45" y="27" width="1" height="1" fill="#4a86c4"/>
<rect x="47" y="27" width="1" height="1" fill="#3874bc"/>
<rect x="49" y="27" width="1" height="1" fill="#6452ac"/>
<rect x="51" y="27" width="1" height="1" fill="#3874bc"/>
<rect x="53" y="27" width="1" height="1" fill="#3874bc"/>
<rect x="55" y="27" width="1" height="1" fill="#4a86c4"/>
<rect x="57" y="27" width="1" height="1" fill="#6452ac"/>
<rect x="64" y="27" width="1" height="1" fill="#3672ba"/>
<rect x="66" y="27" width="1" height="1" fill="#2e609c"/>
<rect x="68" y="27" width="1" height="1" fill="#3672ba"/>
<rect x="72" y="27" width="1" height="1" fill="#3672ba"/>
<rect x="74" y="27" width="1" height="1" fill="#3672ba"/>
<rect x="76" y="27" width="1" height="1" fill="#6452ac"/>
<rect x="78" y="27" width="1" height="1" fill="#3672ba"/>
<rect x="80" y="27" width="1" height="1" fill="#3672ba"/>
<rect x="82" y="27" width="1" height="1" fill="#3672ba"/>
<rect x="84" y="27" width="1" height="1" fill="#2e609c"/>
<rect x="86" y="27" width="1" height="1" fill="#3672ba"/>
<rect x="87" y="27" width="1" height="1" fill="#2a4c62"/>
<rect x="89" y="27" width="1" height="1" fill="#2a4c62"/>
<rect x="91" y="27" width="1" height="1" fill="#2a4c62"/>
<rect x="93" y="27" width="1" height="1" fill="#2a4c62"/>
<rect x="95" y="27" width="1" height="1" fill="#5a4650"/>
<rect x="0" y="28" width="1" height="1" fill="#3672ba"/>
<rect x="2" y="28" width="1" height="1" fill="#2e609c"/>
<rect x="4" y="28" width="1" height="1" fill="#3672ba"/>
<rect x="6" y="28" width="1" height="1" fill="#2e609c"/>
<rect x="8" y="28" width="1" height="1" fill="#3672ba"/>
<rect x="10" y="28" width="1" height="1" fill="#3672ba"/>
<rect x="14" y="28" width="1" height="1" fill="#6452ac"/>
<rect x="16" y="28" width="1" height="1" fill="#3672ba"/>
<rect x="18" y="28" width="1" height="1" fill="#3672ba"/>
<rect x="20" y="28" width="1" height="1" fill="#3672ba"/>
<rect x="22" y="28" width="1" height="1" fill="#3672ba"/>
<rect x="24" y="28" width="1" height="1" fill="#6452ac"/>
<rect x="26" y="28" width="1" height="1" fill="#3672ba"/>
<rect x="28" y="28" width="1" height="1" fill="#3672ba"/>
<rect x="30" y="28" width="1" height="1" fill="#6452ac"/>
<rect x="32" y="28" width="1" height="1" fill="#6452ac"/>
<rect x="34" y="28" width="1" height="1" fill="#3672ba"/>
<rect x="35" y="28" width="1" height="1" fill="#4a7c52"/>
<rect x="36" y="28" width="1" height="1" fill="#3672ba"/>
<rect x="37" y="28" width="1" height="1" fill="#4a86c4"/>
<rect x="39" y="28" width="1" height="1" fill="#2a4c62"/>
<rect x="41" y="28" width="1" height="1" fill="#2a4c62"/>
<rect x="43" y="28" width="1" height="1" fill="#3874bc"/>
<rect x="45" y="28" width="1" height="1" fill="#3874bc"/>
<rect x="47" y="28" width="1" height="1" fill="#6452ac"/>
<rect x="48" y="28" width="1" height="1" fill="#4a7c52"/>
<rect x="49" y="28" width="1" height="1" fill="#4a86c4"/>
<rect x="53" y="28" width="1" height="1" fill="#4a86c4"/>
<rect x="55" y="28" width="1" height="1" fill="#2a4c62"/>
<rect x="57" y="28" width="1" height="1" fill="#3874bc"/>
<rect x="64" y="28" width="1" height="1" fill="#2a4c62"/>
<rect x="66" y="28" width="1" height="1" fill="#2a4c62"/>
<rect x="68" y="28" width="1" height="1" fill="#2a4c62"/>
<rect x="70" y="28" width="1" height="1" fill="#2a4c62"/>
<rect x="72" y="28" width="1" height="1" fill="#2a4c62"/>
<rect x="74" y="28" width="1" height="1" fill="#2a4c62"/>
<rect x="76" y="28" width="1" height="1" fill="#2a4c62"/>
<rect x="78" y="28" width="1" height="1" fill="#5a4650"/>
<rect x="80" y="28" width="1" height="1" fill="#2a4c62"/>
<rect x="82" y="28" width="1" height="1" fill="#5a4650"/>
<rect x="84" y="28" width="1" height="1" fill="#2a4c62"/>
<rect x="86" y="28" width="1" height="1" fill="#2a4c62"/>
<rect x="87" y="28" width="1" height="1" fill="#2e609c"/>
<rect x="89" y="28" width="1" height="1" fill="#2e609c"/>
<rect x="91" y="28" width="1" height="1" fill="#2e609c"/>
<rect x="93" y="28" width="1" height="1" fill="#3672ba"/>
<rect x="95" y="28" width="1" height="1" fill="#3672ba"/>
<rect x="1" y="29" width="1" height="1" fill="#2e609c"/>
<rect x="5" y="29" width="1" height="1" fill="#3672ba"/>
<rect x="7" y="29" width="1" height="1" fill="#2e609c"/>
<rect x="9" y="29" width="1" height="1" fill="#3672ba"/>
<rect x="11" y="29" width="1" height="1" fill="#3672ba"/>
<rect x="13" y="29" width="1" height="1" fill="#3672ba"/>
<rect x="14" y="29" width="1" height="1" fill="#4a7c52"/>
<rect x="15" y="29" width="1" height="1" fill="#3672ba"/>
<rect x="17" y="29" width="1" height="1" fill="#3672ba"/>
<rect x="19" y="29" width="1" height="1" fill="#3672ba"/>
<rect x="21" y="29" width="1" height="1" fill="#3672ba"/>
<rect x="22" y="29" width="1" height="1" fill="#4a7c52"/>
<rect x="23" y="29" width="1" height="1" fill="#2e609c"/>
<rect x="27" y="29" width="1" height="1" fill="#3672ba"/>
<rect x="29" y="29" width="1" height="1" fill="#2e609c"/>
<rect x="31" y="29" width="1" height="1" fill="#3672ba"/>
<rect x="33" y="29" width="1" height="1" fill="#2e609c"/>
<rect x="34" y="29" width="1" height="1" fill="#2e609c"/>
<rect x="36" y="29" width="1" height="1" fill="#2e609c"/>
<rect x="38" y="29" width="1" height="1" fill="#2e609c"/>
<rect x="40" y="29" width="1" height="1" fill="#3672ba"/>
<rect x="42" y="29" width="1" height="1" fill="#3672ba"/>
<rect x="44" y="29" width="1" height="1" fill="#3672ba"/>
<rect x="46" y="29" width="1" height="1" fill="#3672ba"/>
<rect x="48" y="29" width="1" height="1" fill="#3672ba"/>
<rect x="50" y="29" width="1" height="1" fill="#6452ac"/>
<rect x="52" y="29" width="1" height="1" fill="#2e609c"/>
<rect x="54" y="29" width="1" height="1" fill="#2e609c"/>
<rect x="56" y="29" width="1" height="1" fill="#3672ba"/>
<rect x="58" y="29" width="1" height="1" fill="#3672ba"/>
<rect x="59" y="29" width="1" height="1" fill="#4a7c52"/>
<rect x="60" y="29" width="1" height="1" fill="#2e609c"/>
<rect x="62" y="29" width="1" height="1" fill="#2e609c"/>
<rect x="64" y="29" width="1" height="1" fill="#6452ac"/>
<rect x="66" y="29" width="1" height="1" fill="#2e609c"/>
<rect x="68" y="29" width="1" height="1" fill="#3672ba"/>
<rect x="70" y="29" width="1" height="1" fill="#2a4c62"/>
<rect x="71" y="29" width="1" height="1" fill="#4a7c52"/>
<rect x="72" y="29" width="1" height="1" fill="#2a4c62"/>
<rect x="74" y="29" width="1" height="1" fill="#2a4c62"/>
<rect x="76" y="29" width="1" height="1" fill="#2a4c62"/>
<rect x="78" y="29" width="1" height="1" fill="#2a4c62"/>
<rect x="80" y="29" width="1" height="1" fill="#2a4c62"/>
<rect x="82" y="29" width="1" height="1" fill="#2a4c62"/>
<rect x="84" y="29" width="1" height="1" fill="#2a4c62"/>
<rect x="87" y="29" width="1" height="1" fill="#3672ba"/>
<rect x="91" y="29" width="1" height="1" fill="#2e609c"/>
<rect x="93" y="29" width="1" height="1" fill="#3672ba"/>
<rect x="95" y="29" width="1" height="1" fill="#3672ba"/>
<rect x="0" y="30" width="1" height="1" fill="#3672ba"/>
<rect x="2" y="30" width="1" height="1" fill="#2e609c"/>
<rect x="4" y="30" width="1" height="1" fill="#2e609c"/>
<rect x="6" y="30" width="1" height="1" fill="#3672ba"/>
<rect x="10" y="30" width="1" height="1" fill="#2e609c"/>
<rect x="12" y="30" width="1" height="1" fill="#2e609c"/>
<rect x="14" y="30" width="1" height="1" fill="#2e609c"/>
<rect x="16" y="30" width="1" height="1" fill="#3672ba"/>
<rect x="17" y="30" width="1" height="1" fill="#2e609c"/>
<rect x="19" y="30" width="1" height="1" fill="#6452ac"/>
<rect x="21" y="30" width="1" height="1" fill="#3672ba"/>
<rect x="23" y="30" width="1" height="1" fill="#3672ba"/>
<rect x="25" y="30" width="1" height="1" fill="#2e609c"/>
<rect x="27" y="30" width="1" height="1" fill="#3672ba"/>
<rect x="29" y="30" width="1" height="1" fill="#2e609c"/>
<rect x="31" y="30" width="1" height="1" fill="#3672ba"/>
<rect x="35" y="30" width="1" height="1" fill="#3672ba"/>
<rect x="37" y="30" width="1" height="1" fill="#3672ba"/>
<rect x="39" y="30" width="1" height="1" fill="#3672ba"/>
<rect x="41" y="30" width="1" height="1" fill="#2e609c"/>
<rect x="45" y="30" width="1" height="1" fill="#2e609c"/>
<rect x="46" y="30" width="1" height="1" fill="#4a7c52"/>
<rect x="47" y="30" width="1" height="1" fill="#3672ba"/>
<rect x="49" y="30" width="1" height="1" fill="#3672ba"/>
<rect x="51" y="30" width="1" height="1" fill="#3672ba"/>
<rect x="52" y="30" width="1" height="1" fill="#4a7c52"/>
<rect x="53" y="30" width="1" height="1" fill="#2e609c"/>
<rect x="54" y="30" width="1" height="1" fill="#4a7c52"/>
<rect x="55" y="30" width="1" height="1" fill="#6452ac"/>
<rect x="56" y="30" width="1" height="1" fill="#4a7c52"/>
<rect x="57" y="30" width="1" height="1" fill="#3672ba"/>
<rect x="59" y="30" width="1" height="1" fill="#2e609c"/>
<rect x="61" y="30" width="1" height="1" fill="#2e609c"/>
<rect x="63" y="30" width="1" height="1" fill="#3672ba"/>
<rect x="65" y="30" width="1" height="1" fill="#3672ba"/>
<rect x="67" y="30" width="1" height="1" fill="#2e609c"/>
<rect x="69" y="30" width="1" height="1" fill="#3672ba"/>
<rect x="71" y="30" width="1" height="1" fill="#2e609c"/>
<rect x="72" y="30" width="1" height="1" fill="#2e609c"/>
<rect x="74" y="30" width="1" height="1" fill="#3672ba"/>
<rect x="78" y="30" width="1" height="1" fill="#2e609c"/>
<rect x="80" y="30" width="1" height="1" fill="#2e609c"/>
<rect x="82" y="30" width="1" height="1" fill="#3672ba"/>
<rect x="84" y="30" width="1" height="1" fill="#6452ac"/>
<rect x="86" y="30" width="1" height="1" fill="#6452ac"/>
<rect x="88" y="30" width="1" height="1" fill="#2e609c"/>
<rect x="90" y="30" width="1" height="1" fill="#6452ac"/>
<rect x="94" y="30" width="1" height="1" fill="#3672ba"/>
<rect x="0" y="31" width="1" height="1" fill="#2a4c62"/>
<rect x="2" y="31" width="1" height="1" fill="#2a4c62"/>
<rect x="4" y="31" width="1" height="1" fill="#2a4c62"/>
<rect x="6" y="31" width="1" height="1" fill="#2a4c62"/>
<rect x="8" y="31" width="1" height="1" fill="#2a4c62"/>
<rect x="12" y="31" width="1" height="1" fill="#2a4c62"/>
<rect x="14" y="31" width="1" height="1" fill="#2a4c62"/>
<rect x="16" y="31" width="1" height="1" fill="#5a4650"/>
<rect x="18" y="31" width="1" height="1" fill="#2a4c62"/>
<rect x="20" y="31" width="1" height="1" fill="#2a4c62"/>
<rect x="23" y="31" width="1" height="1" fill="#2a4c62"/>
<rect x="25" y="31" width="1" height="1" fill="#2a4c62"/>
<rect x="29" y="31" width="1" height="1" fill="#5a4650"/>
<rect x="31" y="31" width="1" height="1" fill="#2a4c62"/>
<rect x="33" y="31" width="1" height="1" fill="#2a4c62"/>
<rect x="35" y="31" width="1" height="1" fill="#2a4c62"/>
<rect x="37" y="31" width="1" height="1" fill="#2a4c62"/>
<rect x="39" y="31" width="1" height="1" fill="#2a4c62"/>
<rect x="41" y="31" width="1" height="1" fill="#2a4c62"/>
<rect x="43" y="31" width="1" height="1" fill="#5a4650"/>
<rect x="45" y="31" width="1" height="1" fill="#2a4c62"/>
<rect x="47" y="31" width="1" height="1" fill="#5a4650"/>
<rect x="49" y="31" width="1" height="1" fill="#2a4c62"/>
<rect x="53" y="31" width="1" height="1" fill="#2a4c62"/>
<rect x="56" y="31" width="1" height="1" fill="#3672ba"/>
<rect x="58" y="31" width="1" height="1" fill="#2e609c"/>
<rect x="60" y="31" width="1" height="1" fill="#2e609c"/>
<rect x="62" y="31" width="1" height="1" fill="#2e609c"/>
<rect x="64" y="31" width="1" height="1" fill="#2e609c"/>
<rect x="66" y="31" width="1" height="1" fill="#2e609c"/>
<rect x="68" y="31" width="1" height="1" fill="#3672ba"/>
<rect x="70" y="31" width="1" height="1" fill="#3672ba"/>
<rect x="72" y="31" width="1" height="1" fill="#3672ba"/>
<rect x="74" y="31" width="1" height="1" fill="#2e609c"/>
<rect x="2" y="32" width="1" height="1" fill="#3672ba"/>
<rect x="4" y="32" width="1" height="1" fill="#3672ba"/>
<rect x="6" y="32" width="1" height="1" fill="#3672ba"/>
<rect x="8" y="32" width="1" height="1" fill="#6452ac"/>
<rect x="10" y="32" width="1" height="1" fill="#3672ba"/>
<rect x="12" y="32" width="1" height="1" fill="#3672ba"/>
<rect x="14" y="32" width="1" height="1" fill="#2e609c"/>
<rect x="18" y="32" width="1" height="1" fill="#3672ba"/>
<rect x="20" y="32" width="1" height="1" fill="#3672ba"/>
<rect x="23" y="32" width="1" height="1" fill="#3672ba"/>
<rect x="25" y="32" width="1" height="1" fill="#3672ba"/>
<rect x="29" y="32" width="1" height="1" fill="#3672ba"/>
<rect x="31" y="32" width="1" height="1" fill="#3672ba"/>
<rect x="33" y="32" width="1" height="1" fill="#3672ba"/>
<rect x="37" y="32" width="1" height="1" fill="#3672ba"/>
<rect x="39" y="32" width="1" height="1" fill="#3672ba"/>
<rect x="41" y="32" width="1" height="1" fill="#3672ba"/>
<rect x="43" y="32" width="1" height="1" fill="#3672ba"/>
<rect x="44" y="32" width="1" height="1" fill="#4a7c52"/>
<rect x="45" y="32" width="1" height="1" fill="#3672ba"/>
<rect x="47" y="32" width="1" height="1" fill="#3672ba"/>
<rect x="49" y="32" width="1" height="1" fill="#3672ba"/>
<rect x="51" y="32" width="1" height="1" fill="#3672ba"/>
<rect x="56" y="32" width="1" height="1" fill="#2a4c62"/>
<rect x="58" y="32" width="1" height="1" fill="#2a4c62"/>
<rect x="60" y="32" width="1" height="1" fill="#5a4650"/>
<rect x="62" y="32" width="1" height="1" fill="#2a4c62"/>
<rect x="64" y="32" width="1" height="1" fill="#2a4c62"/>
<rect x="66" y="32" width="1" height="1" fill="#2a4c62"/>
<rect x="68" y="32" width="1" height="1" fill="#2a4c62"/>
<rect x="70" y="32" width="1" height="1" fill="#2a4c62"/>
<rect x="72" y="32" width="1" height="1" fill="#2a4c62"/>
<rect x="74" y="32" width="1" height="1" fill="#2a4c62"/>
<rect x="20" y="33" width="1" height="1" fill="#6452ac"/>
<rect x="21" y="33" width="1" height="1" fill="#4a7c52"/>
<rect x="22" y="33" width="1" height="1" fill="#3672ba"/>
<rect x="24" y="33" width="1" height="1" fill="#2e609c"/>
<rect x="26" y="33" width="1" height="1" fill="#3672ba"/>
<rect x="28" y="33" width="1" height="1" fill="#3672ba"/>
<rect x="30" y="33" width="1" height="1" fill="#3672ba"/>
<rect x="32" y="33" width="1" height="1" fill="#6452ac"/>
<rect x="34" y="33" width="1" height="1" fill="#3672ba"/>
<rect x="35" y="33" width="1" height="1" fill="#4a7c52"/>
<rect x="36" y="33" width="1" height="1" fill="#3672ba"/>
<rect x="38" y="33" width="1" height="1" fill="#3672ba"/>
<rect x="40" y="33" width="1" height="1" fill="#3672ba"/>
<rect x="42" y="33" width="1" height="1" fill="#6452ac"/>
<rect x="44" y="33" width="1" height="1" fill="#3672ba"/>
<rect x="46" y="33" width="1" height="1" fill="#6452ac"/>
<rect x="48" y="33" width="1" height="1" fill="#2e609c"/>
<rect x="50" y="33" width="1" height="1" fill="#3672ba"/>
<rect x="52" y="33" width="1" height="1" fill="#2e609c"/>
<rect x="54" y="33" width="1" height="1" fill="#3672ba"/>
<rect x="56" y="33" width="1" height="1" fill="#6452ac"/>
<rect x="58" y="33" width="1" height="1" fill="#6452ac"/>
<rect x="59" y="33" width="1" height="1" fill="#2a4c62"/>
<rect x="61" y="33" width="1" height="1" fill="#2a4c62"/>
<rect x="63" y="33" width="1" height="1" fill="#2a4c62"/>
<rect x="65" y="33" width="1" height="1" fill="#2a4c62"/>
<rect x="69" y="33" width="1" height="1" fill="#2a4c62"/>
<rect x="72" y="33" width="1" height="1" fill="#4a7c52"/>
<rect x="73" y="33" width="1" height="1" fill="#2a4c62"/>
<rect x="75" y="33" width="1" height="1" fill="#2a4c62"/>
<rect x="77" y="33" width="1" height="1" fill="#2a4c62"/>
<rect x="79" y="33" width="1" height="1" fill="#2a4c62"/>
<rect x="81" y="33" width="1" height="1" fill="#5a4650"/>
<rect x="83" y="33" width="1" height="1" fill="#3672ba"/>
<rect x="85" y="33" width="1" height="1" fill="#3672ba"/>
<rect x="87" y="33" width="1" height="1" fill="#3672ba"/>
<rect x="88" y="33" width="1" height="1" fill="#4a7c52"/>
<rect x="91" y="33" width="1" height="1" fill="#3672ba"/>
<rect x="93" y="33" width="1" height="1" fill="#2e609c"/>
<rect x="95" y="33" width="1" height="1" fill="#3672ba"/>
<rect x="0" y="34" width="1" height="1" fill="#6452ac"/>
<rect x="2" y="34" width="1" height="1" fill="#2e609c"/>
<rect x="4" y="34" width="1" height="1" fill="#3672ba"/>
<rect x="8" y="34" width="1" height="1" fill="#3672ba"/>
<rect x="10" y="34" width="1" height="1" fill="#6452ac"/>
<rect x="12" y="34" width="1" height="1" fill="#3672ba"/>
<rect x="14" y="34" width="1" height="1" fill="#3672ba"/>
<rect x="16" y="34" width="1" height="1" fill="#2a4c62"/>
<rect x="18" y="34" width="1" height="1" fill="#2a4c62"/>
<rect x="20" y="34" width="1" height="1" fill="#2a4c62"/>
<rect x="22" y="34" width="1" height="1" fill="#2a4c62"/>
<rect x="24" y="34" width="1" height="1" fill="#2a4c62"/>
<rect x="26" y="34" width="1" height="1" fill="#2a4c62"/>
<rect x="28" y="34" width="1" height="1" fill="#2a4c62"/>
<rect x="32" y="34" width="1" height="1" fill="#2a4c62"/>
<rect x="34" y="34" width="1" height="1" fill="#5a4650"/>
<rect x="38" y="34" width="1" height="1" fill="#2a4c62"/>
<rect x="40" y="34" width="1" height="1" fill="#2a4c62"/>
<rect x="42" y="34" width="1" height="1" fill="#2a4c62"/>
<rect x="46" y="34" width="1" height="1" fill="#2a4c62"/>
<rect x="48" y="34" width="1" height="1" fill="#2a4c62"/>
<rect x="50" y="34" width="1" height="1" fill="#2a4c62"/>
<rect x="52" y="34" width="1" height="1" fill="#5a4650"/>
<rect x="53" y="34" width="1" height="1" fill="#4a7c52"/>
<rect x="54" y="34" width="1" height="1" fill="#2a4c62"/>
<rect x="56" y="34" width="1" height="1" fill="#2a4c62"/>
<rect x="58" y="34" width="1" height="1" fill="#2a4c62"/>
<rect x="60" y="34" width="1" height="1" fill="#2a4c62"/>
<rect x="62" y="34" width="1" height="1" fill="#5a4650"/>
<rect x="64" y="34" width="1" height="1" fill="#2a4c62"/>
<rect x="66" y="34" width="1" height="1" fill="#2a4c62"/>
<rect x="68" y="34" width="1" height="1" fill="#2a4c62"/>
<rect x="70" y="34" width="1" height="1" fill="#5a4650"/>
<rect x="71" y="34" width="1" height="1" fill="#4a7c52"/>
<rect x="72" y="34" width="1" height="1" fill="#2a4c62"/>
<rect x="74" y="34" width="1" height="1" fill="#2a4c62"/>
<rect x="76" y="34" width="1" height="1" fill="#2a4c62"/>
<rect x="78" y="34" width="1" height="1" fill="#5a4650"/>
<rect x="80" y="34" width="1" height="1" fill="#2a4c62"/>
<rect x="81" y="34" width="1" height="1" fill="#4a7c52"/>
<rect x="82" y="34" width="1" height="1" fill="#2a4c62"/>
<rect x="84" y="34" width="1" height="1" fill="#2a4c62"/>
<rect x="86" y="34" width="1" height="1" fill="#2a4c62"/>
<rect x="88" y="34" width="1" height="1" fill="#2a4c62"/>
<rect x="90" y="34" width="1" height="1" fill="#2a4c62"/>
<rect x="92" y="34" width="1" height="1" fill="#2a4c62"/>
<rect x="94" y="34" width="1" height="1" fill="#2a4c62"/>
<rect x="0" y="35" width="1" height="1" fill="#2a4c62"/>
<rect x="2" y="35" width="1" height="1" fill="#2a4c62"/>
<rect x="4" y="35" width="1" height="1" fill="#2a4c62"/>
<rect x="6" y="35" width="1" height="1" fill="#2a4c62"/>
<rect x="8" y="35" width="1" height="1" fill="#5a4650"/>
<rect x="10" y="35" width="1" height="1" fill="#5a4650"/>
<rect x="12" y="35" width="1" height="1" fill="#2a4c62"/>
<rect x="14" y="35" width="1" height="1" fill="#2a4c62"/>
<rect x="18" y="35" width="1" height="1" fill="#3672ba"/>
<rect x="20" y="35" width="1" height="1" fill="#3672ba"/>
<rect x="22" y="35" width="1" height="1" fill="#2e609c"/>
<rect x="24" y="35" width="1" height="1" fill="#3672ba"/>
<rect x="26" y="35" width="1" height="1" fill="#6452ac"/>
<rect x="28" y="35" width="1" height="1" fill="#2e609c"/>
<rect x="30" y="35" width="1" height="1" fill="#3672ba"/>
<rect x="32" y="35" width="1" height="1" fill="#3672ba"/>
<rect x="34" y="35" width="1" height="1" fill="#3672ba"/>
<rect x="36" y="35" width="1" height="1" fill="#3672ba"/>
<rect x="37" y="35" width="1" height="1" fill="#4a7c52"/>
<rect x="38" y="35" width="1" height="1" fill="#6452ac"/>
<rect x="40" y="35" width="1" height="1" fill="#3672ba"/>
<rect x="42" y="35" width="1" height="1" fill="#3672ba"/>
<rect x="46" y="35" width="1" height="1" fill="#3672ba"/>
<rect x="48" y="35" width="1" height="1" fill="#3672ba"/>
<rect x="51" y="35" width="1" height="1" fill="#4a7c52"/>
<rect x="52" y="35" width="1" height="1" fill="#3672ba"/>
<rect x="54" y="35" width="1" height="1" fill="#6452ac"/>
<rect x="56" y="35" width="1" height="1" fill="#6452ac"/>
<rect x="58" y="35" width="1" height="1" fill="#3672ba"/>
<rect x="64" y="35" width="1" height="1" fill="#2e609c"/>
<rect x="66" y="35" width="1" height="1" fill="#6452ac"/>
<rect x="68" y="35" width="1" height="1" fill="#2e609c"/>
<rect x="72" y="35" width="1" height="1" fill="#3672ba"/>
<rect x="74" y="35" width="1" height="1" fill="#2e609c"/>
<rect x="76" y="35" width="1" height="1" fill="#3672ba"/>
<rect x="78" y="35" width="1" height="1" fill="#2e609c"/>
<rect x="80" y="35" width="1" height="1" fill="#6452ac"/>
<rect x="81" y="35" width="1" height="1" fill="#4a7c52"/>
<rect x="82" y="35" width="1" height="1" fill="#2e609c"/>
<rect x="84" y="35" width="1" height="1" fill="#3672ba"/>
<rect x="86" y="35" width="1" height="1" fill="#2e609c"/>
<rect x="90" y="35" width="1" height="1" fill="#3672ba"/>
<rect x="92" y="35" width="1" height="1" fill="#3672ba"/>
<rect x="0" y="36" width="1" height="1" fill="#4a7c52"/>
<rect x="1" y="36" width="1" height="1" fill="#2e609c"/>
<rect x="3" y="36" width="1" height="1" fill="#3672ba"/>
<rect x="4" y="36" width="1" height="1" fill="#4a7c52"/>
<rect x="5" y="36" width="1" height="1" fill="#3672ba"/>
<rect x="9" y="36" width="1" height="1" fill="#6452ac"/>
<rect x="11" y="36" width="1" height="1" fill="#3672ba"/>
<rect x="13" y="36" width="1" height="1" fill="#2e609c"/>
<rect x="15" y="36" width="1" height="1" fill="#3672ba"/>
<rect x="17" y="36" width="1" height="1" fill="#3672ba"/>
<rect x="19" y="36" width="1" height="1" fill="#3672ba"/>
<rect x="20" y="36" width="1" height="1" fill="#4a7c52"/>
<rect x="21" y="36" width="1" height="1" fill="#2e609c"/>
<rect x="23" y="36" width="1" height="1" fill="#2e609c"/>
<rect x="25" y="36" width="1" height="1" fill="#2e609c"/>
<rect x="27" y="36" width="1" height="1" fill="#2e609c"/>
<rect x="29" y="36" width="1" height="1" fill="#2e609c"/>
<rect x="31" y="36" width="1" height="1" fill="#2e609c"/>
<rect x="33" y="36" width="1" height="1" fill="#3672ba"/>
<rect x="35" y="36" width="1" height="1" fill="#3672ba"/>
<rect x="37" y="36" width="1" height="1" fill="#3672ba"/>
<rect x="39" y="36" width="1" height="1" fill="#2e609c"/>
<rect x="42" y="36" width="1" height="1" fill="#2a4c62"/>
<rect x="44" y="36" width="1" height="1" fill="#2a4c62"/>
<rect x="46" y="36" width="1" height="1" fill="#2a4c62"/>
<rect x="48" y="36" width="1" height="1" fill="#5a4650"/>
<rect x="50" y="36" width="1" height="1" fill="#2a4c62"/>
<rect x="52" y="36" width="1" height="1" fill="#2a4c62"/>
<rect x="54" y="36" width="1" height="1" fill="#2a4c62"/>
<rect x="56" y="36" width="1" height="1" fill="#2a4c62"/>
<rect x="58" y="36" width="1" height="1" fill="#2a4c62"/>
<rect x="59" y="36" width="1" height="1" fill="#4a7c52"/>
<rect x="60" y="36" width="1" height="1" fill="#2a4c62"/>
<rect x="62" y="36" width="1" height="1" fill="#2a4c62"/>
<rect x="66" y="36" width="1" height="1" fill="#2a4c62"/>
<rect x="68" y="36" width="1" height="1" fill="#2a4c62"/>
<rect x="70" y="36" width="1" height="1" fill="#2a4c62"/>
<rect x="71" y="36" width="1" height="1" fill="#4a7c52"/>
<rect x="72" y="36" width="1" height="1" fill="#2a4c62"/>
<rect x="74" y="36" width="1" height="1" fill="#2a4c62"/>
<rect x="78" y="36" width="1" height="1" fill="#2a4c62"/>
<rect x="80" y="36" width="1" height="1" fill="#2a4c62"/>
<rect x="82" y="36" width="1" height="1" fill="#2a4c62"/>
<rect x="84" y="36" width="1" height="1" fill="#5a4650"/>
<rect x="85" y="36" width="1" height="1" fill="#4a7c52"/>
<rect x="86" y="36" width="1" height="1" fill="#2a4c62"/>
<rect x="88" y="36" width="1" height="1" fill="#2a4c62"/>
<rect x="90" y="36" width="1" height="1" fill="#2a4c62"/>
<rect x="92" y="36" width="1" height="1" fill="#2a4c62"/>
<rect x="94" y="36" width="1" height="1" fill="#2a4c62"/>
<rect x="1" y="37" width="1" height="1" fill="#2a4c62"/>
<rect x="3" y="37" width="1" height="1" fill="#2a4c62"/>
<rect x="5" y="37" width="1" height="1" fill="#2a4c62"/>
<rect x="7" y="37" width="1" height="1" fill="#2a4c62"/>
<rect x="9" y="37" width="1" height="1" fill="#2a4c62"/>
<rect x="11" y="37" width="1" height="1" fill="#2a4c62"/>
<rect x="13" y="37" width="1" height="1" fill="#2a4c62"/>
<rect x="15" y="37" width="1" height="1" fill="#2a4c62"/>
<rect x="17" y="37" width="1" height="1" fill="#2a4c62"/>
<rect x="19" y="37" width="1" height="1" fill="#2a4c62"/>
<rect x="21" y="37" width="1" height="1" fill="#2a4c62"/>
<rect x="23" y="37" width="1" height="1" fill="#2a4c62"/>
<rect x="27" y="37" width="1" height="1" fill="#2a4c62"/>
<rect x="29" y="37" width="1" height="1" fill="#2a4c62"/>
<rect x="31" y="37" width="1" height="1" fill="#2a4c62"/>
<rect x="33" y="37" width="1" height="1" fill="#2a4c62"/>
<rect x="35" y="37" width="1" height="1" fill="#2a4c62"/>
<rect x="37" y="37" width="1" height="1" fill="#2a4c62"/>
<rect x="39" y="37" width="1" height="1" fill="#2a4c62"/>
<rect x="41" y="37" width="1" height="1" fill="#2a4c62"/>
<rect x="42" y="37" width="1" height="1" fill="#3672ba"/>
<rect x="46" y="37" width="1" height="1" fill="#6452ac"/>
<rect x="48" y="37" width="1" height="1" fill="#2e609c"/>
<rect x="50" y="37" width="1" height="1" fill="#2e609c"/>
<rect x="52" y="37" width="1" height="1" fill="#3672ba"/>
<rect x="53" y="37" width="1" height="1" fill="#4a7c52"/>
<rect x="54" y="37" width="1" height="1" fill="#3672ba"/>
<rect x="56" y="37" width="1" height="1" fill="#2e609c"/>
<rect x="58" y="37" width="1" height="1" fill="#3672ba"/>
<rect x="60" y="37" width="1" height="1" fill="#2e609c"/>
<rect x="62" y="37" width="1" height="1" fill="#2e609c"/>
<rect x="64" y="37" width="1" height="1" fill="#6452ac"/>
<rect x="66" y="37" width="1" height="1" fill="#3672ba"/>
<rect x="68" y="37" width="1" height="1" fill="#3672ba"/>
<rect x="70" y="37" width="1" height="1" fill="#2e609c"/>
<rect x="74" y="37" width="1" height="1" fill="#6452ac"/>
<rect x="76" y="37" width="1" height="1" fill="#3672ba"/>
<rect x="78" y="37" width="1" height="1" fill="#3672ba"/>
<rect x="80" y="37" width="1" height="1" fill="#3672ba"/>
<rect x="82" y="37" width="1" height="1" fill="#3672ba"/>
<rect x="84" y="37" width="1" height="1" fill="#2e609c"/>
<rect x="86" y="37" width="1" height="1" fill="#3672ba"/>
<rect x="88" y="37" width="1" height="1" fill="#2e609c"/>
<rect x="90" y="37" width="1" height="1" fill="#3672ba"/>
<rect x="92" y="37" width="1" height="1" fill="#3672ba"/>
<rect x="94" y="37" width="1" height="1" fill="#6452ac"/>
<rect x="95" y="37" width="1" height="1" fill="#4a7c52"/>
<rect x="0" y="38" width="1" height="1" fill="#3672ba"/>
<rect x="2" y="38" width="1" height="1" fill="#2e609c"/>
<rect x="3" y="38" width="1" height="1" fill="#4a7c52"/>
<rect x="4" y="38" width="1" height="1" fill="#3672ba"/>
<rect x="8" y="38" width="1" height="1" fill="#3672ba"/>
<rect x="10" y="38" width="1" height="1" fill="#3672ba"/>
<rect x="12" y="38" width="1" height="1" fill="#2e609c"/>
<rect x="14" y="38" width="1" height="1" fill="#3672ba"/>
<rect x="16" y="38" width="1" height="1" fill="#6452ac"/>
<rect x="18" y="38" width="1" height="1" fill="#3672ba"/>
<rect x="21" y="38" width="1" height="1" fill="#4a7c52"/>
<rect x="22" y="38" width="1" height="1" fill="#2e609c"/>
<rect x="24" y="38" width="1" height="1" fill="#2e609c"/>
<rect x="26" y="38" width="1" height="1" fill="#3672ba"/>
<rect x="28" y="38" width="1" height="1" fill="#3672ba"/>
<rect x="29" y="38" width="1" height="1" fill="#4a7c52"/>
<rect x="30" y="38" width="1" height="1" fill="#2a4c62"/>
<rect x="32" y="38" width="1" height="1" fill="#2a4c62"/>
<rect x="34" y="38" width="1" height="1" fill="#2a4c62"/>
<rect x="36" y="38" width="1" height="1" fill="#2a4c62"/>
<rect x="38" y="38" width="1" height="1" fill="#2a4c62"/>
<rect x="40" y="38" width="1" height="1" fill="#2a4c62"/>
<rect x="44" y="38" width="1" height="1" fill="#3672ba"/>
<rect x="46" y="38" width="1" height="1" fill="#3672ba"/>
<rect x="48" y="38" width="1" height="1" fill="#3672ba"/>
<rect x="50" y="38" width="1" height="1" fill="#3672ba"/>
<rect x="52" y="38" width="1" height="1" fill="#3672ba"/>
<rect x="54" y="38" width="1" height="1" fill="#2e609c"/>
<rect x="58" y="38" width="1" height="1" fill="#3672ba"/>
<rect x="60" y="38" width="1" height="1" fill="#3672ba"/>
<rect x="61" y="38" width="1" height="1" fill="#2a4c62"/>
<rect x="63" y="38" width="1" height="1" fill="#2a4c62"/>
<rect x="65" y="38" width="1" height="1" fill="#2a4c62"/>
<rect x="69" y="38" width="1" height="1" fill="#2a4c62"/>
<rect x="71" y="38" width="1" height="1" fill="#2a4c62"/>
<rect x="73" y="38" width="1" height="1" fill="#2a4c62"/>
<rect x="75" y="38" width="1" height="1" fill="#2a4c62"/>
<rect x="77" y="38" width="1" height="1" fill="#2a4c62"/>
<rect x="79" y="38" width="1" height="1" fill="#2a4c62"/>
<rect x="81" y="38" width="1" height="1" fill="#5a4650"/>
<rect x="83" y="38" width="1" height="1" fill="#2a4c62"/>
<rect x="85" y="38" width="1" height="1" fill="#2a4c62"/>
<rect x="87" y="38" width="1" height="1" fill="#2a4c62"/>
<rect x="89" y="38" width="1" height="1" fill="#2a4c62"/>
<rect x="91" y="38" width="1" height="1" fill="#2a4c62"/>
<rect x="93" y="38" width="1" height="1" fill="#2a4c62"/>
<rect x="94" y="38" width="1" height="1" fill="#4a7c52"/>
<rect x="95" y="38" width="1" height="1" fill="#5a4650"/>
<rect x="0" y="39" width="1" height="1" fill="#2a4c62"/>
<rect x="2" y="39" width="1" height="1" fill="#2a4c62"/>
<rect x="3" y="39" width="1" height="1" fill="#4a7c52"/>
<rect x="4" y="39" width="1" height="1" fill="#2a4c62"/>
<rect x="6" y="39" width="1" height="1" fill="#2a4c62"/>
<rect x="8" y="39" width="1" height="1" fill="#2a4c62"/>
<rect x="10" y="39" width="1" height="1" fill="#5a4650"/>
<rect x="12" y="39" width="1" height="1" fill="#2a4c62"/>
<rect x="14" y="39" width="1" height="1" fill="#2a4c62"/>
<rect x="15" y="39" width="1" height="1" fill="#4a7c52"/>
<rect x="16" y="39" width="1" height="1" fill="#2a4c62"/>
<rect x="18" y="39" width="1" height="1" fill="#2a4c62"/>
<rect x="19" y="39" width="1" height="1" fill="#4a7c52"/>
<rect x="20" y="39" width="1" height="1" fill="#2a4c62"/>
<rect x="22" y="39" width="1" height="1" fill="#2a4c62"/>
<rect x="24" y="39" width="1" height="1" fill="#2a4c62"/>
<rect x="26" y="39" width="1" height="1" fill="#2a4c62"/>
<rect x="28" y="39" width="1" height="1" fill="#2a4c62"/>
<rect x="30" y="39" width="1" height="1" fill="#3672ba"/>
<rect x="32" y="39" width="1" height="1" fill="#2e609c"/>
<rect x="33" y="39" width="1" height="1" fill="#4a7c52"/>
<rect x="34" y="39" width="1" height="1" fill="#3672ba"/>
<rect x="36" y="39" width="1" height="1" fill="#2e609c"/>
<rect x="38" y="39" width="1" height="1" fill="#2e609c"/>
<rect x="40" y="39" width="1" height="1" fill="#6452ac"/>
<rect x="42" y="39" width="1" height="1" fill="#6452ac"/>
<rect x="44" y="39" width="1" height="1" fill="#2a4c62"/>
<rect x="46" y="39" width="1" height="1" fill="#2a4c62"/>
<rect x="48" y="39" width="1" height="1" fill="#2a4c62"/>
<rect x="50" y="39" width="1" height="1" fill="#2a4c62"/>
<rect x="54" y="39" width="1" height="1" fill="#2a4c62"/>
<rect x="56" y="39" width="1" height="1" fill="#2a4c62"/>
<rect x="58" y="39" width="1" height="1" fill="#2a4c62"/>
<rect x="60" y="39" width="1" height="1" fill="#2a4c62"/>
<rect x="61" y="39" width="1" height="1" fill="#3672ba"/>
<rect x="63" y="39" width="1" height="1" fill="#3672ba"/>
<rect x="65" y="39" width="1" height="1" fill="#2e609c"/>
<rect x="67" y="39" width="1" height="1" fill="#2e609c"/>
<rect x="69" y="39" width="1" height="1" fill="#3672ba"/>
<rect x="73" y="39" width="1" height="1" fill="#3672ba"/>
<rect x="75" y="39" width="1" height="1" fill="#3672ba"/>
<rect x="77" y="39" width="1" height="1" fill="#3672ba"/>
<rect x="79" y="39" width="1" height="1" fill="#3672ba"/>
<rect x="81" y="39" width="1" height="1" fill="#2e609c"/>
<rect x="83" y="39" width="1" height="1" fill="#3672ba"/>
<rect x="85" y="39" width="1" height="1" fill="#3672ba"/>
<rect x="87" y="39" width="1" height="1" fill="#3672ba"/>
<rect x="89" y="39" width="1" height="1" fill="#2e609c"/>
<rect x="91" y="39" width="1" height="1" fill="#2e609c"/>
<rect x="93" y="39" width="1" height="1" fill="#3672ba"/>
<rect x="1" y="40" width="1" height="1" fill="#2a4c62"/>
<rect x="3" y="40" width="1" height="1" fill="#2a4c62"/>
<rect x="5" y="40" width="1" height="1" fill="#2a4c62"/>
<rect x="6" y="40" width="1" height="1" fill="#4a7c52"/>
<rect x="7" y="40" width="1" height="1" fill="#2a4c62"/>
<rect x="9" y="40" width="1" height="1" fill="#2a4c62"/>
<rect x="11" y="40" width="1" height="1" fill="#2a4c62"/>
<rect x="13" y="40" width="1" height="1" fill="#2a4c62"/>
<rect x="15" y="40" width="1" height="1" fill="#5a4650"/>
<rect x="17" y="40" width="1" height="1" fill="#2a4c62"/>
<rect x="23" y="40" width="1" height="1" fill="#2a4c62"/>
<rect x="25" y="40" width="1" height="1" fill="#2a4c62"/>
<rect x="27" y="40" width="1" height="1" fill="#2a4c62"/>
<rect x="29" y="40" width="1" height="1" fill="#2a4c62"/>
<rect x="33" y="40" width="1" height="1" fill="#5a4650"/>
<rect x="35" y="40" width="1" height="1" fill="#2a4c62"/>
<rect x="37" y="40" width="1" height="1" fill="#2a4c62"/>
<rect x="39" y="40" width="1" height="1" fill="#2a4c62"/>
<rect x="41" y="40" width="1" height="1" fill="#2a4c62"/>
<rect x="42" y="40" width="1" height="1" fill="#6452ac"/>
<rect x="44" y="40" width="1" height="1" fill="#2a4c62"/>
<rect x="46" y="40" width="1" height="1" fill="#2a4c62"/>
<rect x="48" y="40" width="1" height="1" fill="#6452ac"/>
<rect x="50" y="40" width="1" height="1" fill="#2a4c62"/>
<rect x="52" y="40" width="1" height="1" fill="#2a4c62"/>
<rect x="54" y="40" width="1" height="1" fill="#6452ac"/>
<rect x="56" y="40" width="1" height="1" fill="#4a86c4"/>
<rect x="59" y="40" width="1" height="1" fill="#4a7c52"/>
<rect x="62" y="40" width="1" height="1" fill="#6452ac"/>
<rect x="63" y="40" width="1" height="1" fill="#4a7c52"/>
<rect x="64" y="40" width="1" height="1" fill="#2a4c62"/>
<rect x="66" y="40" width="1" height="1" fill="#2a4c62"/>
<rect x="68" y="40" width="1" height="1" fill="#2a4c62"/>
<rect x="69" y="40" width="1" height="1" fill="#4a7c52"/>
<rect x="70" y="40" width="1" height="1" fill="#3874bc"/>
<rect x="72" y="40" width="1" height="1" fill="#6452ac"/>
<rect x="74" y="40" width="1" height="1" fill="#6452ac"/>
<rect x="76" y="40" width="1" height="1" fill="#6452ac"/>
<rect x="78" y="40" width="1" height="1" fill="#6452ac"/>
<rect x="81" y="40" width="1" height="1" fill="#4a7c52"/>
<rect x="82" y="40" width="1" height="1" fill="#2a4c62"/>
<rect x="84" y="40" width="1" height="1" fill="#6452ac"/>
<rect x="86" y="40" width="1" height="1" fill="#2a4c62"/>
<rect x="90" y="40" width="1" height="1" fill="#2a4c62"/>
<rect x="92" y="40" width="1" height="1" fill="#2a4c62"/>
<rect x="94" y="40" width="1" height="1" fill="#2a4c62"/>
<rect x="1" y="41" width="1" height="1" fill="#3672ba"/>
<rect x="2" y="41" width="1" height="1" fill="#4a7c52"/>
<rect x="3" y="41" width="1" height="1" fill="#3672ba"/>
<rect x="5" y="41" width="1" height="1" fill="#3672ba"/>
<rect x="7" y="41" width="1" height="1" fill="#6452ac"/>
<rect x="9" y="41" width="1" height="1" fill="#6452ac"/>
<rect x="11" y="41" width="1" height="1" fill="#3672ba"/>
<rect x="12" y="41" width="1" height="1" fill="#4a7c52"/>
<rect x="15" y="41" width="1" height="1" fill="#6452ac"/>
<rect x="17" y="41" width="1" height="1" fill="#2e609c"/>
<rect x="19" y="41" width="1" height="1" fill="#3672ba"/>
<rect x="21" y="41" width="1" height="1" fill="#3672ba"/>
<rect x="23" y="41" width="1" height="1" fill="#3672ba"/>
<rect x="25" y="41" width="1" height="1" fill="#3672ba"/>
<rect x="27" y="41" width="1" height="1" fill="#3672ba"/>
<rect x="29" y="41" width="1" height="1" fill="#3672ba"/>
<rect x="33" y="41" width="1" height="1" fill="#3672ba"/>
<rect x="34" y="41" width="1" height="1" fill="#4a7c52"/>
<rect x="35" y="41" width="1" height="1" fill="#3672ba"/>
<rect x="37" y="41" width="1" height="1" fill="#2e609c"/>
<rect x="39" y="41" width="1" height="1" fill="#2e609c"/>
<rect x="41" y="41" width="1" height="1" fill="#3672ba"/>
<rect x="42" y="41" width="1" height="1" fill="#6452ac"/>
<rect x="43" y="41" width="1" height="1" fill="#4a7c52"/>
<rect x="44" y="41" width="1" height="1" fill="#3874bc"/>
<rect x="46" y="41" width="1" height="1" fill="#2a4c62"/>
<rect x="48" y="41" width="1" height="1" fill="#2a4c62"/>
<rect x="50" y="41" width="1" height="1" fill="#3874bc"/>
<rect x="52" y="41" width="1" height="1" fill="#6452ac"/>
<rect x="54" y="41" width="1" height="1" fill="#6452ac"/>
<rect x="56" y="41" width="1" height="1" fill="#3874bc"/>
<rect x="58" y="41" width="1" height="1" fill="#3874bc"/>
<rect x="60" y="41" width="1" height="1" fill="#2a4c62"/>
<rect x="62" y="41" width="1" height="1" fill="#4a86c4"/>
<rect x="64" y="41" width="1" height="1" fill="#4a86c4"/>
<rect x="66" y="41" width="1" height="1" fill="#6452ac"/>
<rect x="68" y="41" width="1" height="1" fill="#4a86c4"/>
<rect x="70" y="41" width="1" height="1" fill="#2a4c62"/>
<rect x="71" y="41" width="1" height="1" fill="#4a7c52"/>
<rect x="75" y="41" width="1" height="1" fill="#4a7c52"/>
<rect x="76" y="41" width="1" height="1" fill="#6452ac"/>
<rect x="78" y="41" width="1" height="1" fill="#4a86c4"/>
<rect x="80" y="41" width="1" height="1" fill="#3874bc"/>
<rect x="81" y="41" width="1" height="1" fill="#4a7c52"/>
<rect x="82" y="41" width="1" height="1" fill="#2a4c62"/>
<rect x="84" y="41" width="1" height="1" fill="#6452ac"/>
<rect x="86" y="41" width="1" height="1" fill="#3672ba"/>
<rect x="88" y="41" width="1" height="1" fill="#3672ba"/>
<rect x="90" y="41" width="1" height="1" fill="#2e609c"/>
<rect x="92" y="41" width="1" height="1" fill="#3672ba"/>
<rect x="94" y="41" width="1" height="1" fill="#3672ba"/>
<rect x="0" y="42" width="1" height="1" fill="#3672ba"/>
<rect x="2" y="42" width="1" height="1" fill="#2e609c"/>
<rect x="8" y="42" width="1" height="1" fill="#3672ba"/>
<rect x="10" y="42" width="1" height="1" fill="#2e609c"/>
<rect x="12" y="42" width="1" height="1" fill="#3672ba"/>
<rect x="16" y="42" width="1" height="1" fill="#6452ac"/>
<rect x="18" y="42" width="1" height="1" fill="#3672ba"/>
<rect x="20" y="42" width="1" height="1" fill="#3672ba"/>
<rect x="22" y="42" width="1" height="1" fill="#3672ba"/>
<rect x="24" y="42" width="1" height="1" fill="#3672ba"/>
<rect x="26" y="42" width="1" height="1" fill="#2e609c"/>
<rect x="28" y="42" width="1" height="1" fill="#3672ba"/>
<rect x="30" y="42" width="1" height="1" fill="#6452ac"/>
<rect x="32" y="42" width="1" height="1" fill="#2e609c"/>
<rect x="33" y="42" width="1" height="1" fill="#4a7c52"/>
<rect x="34" y="42" width="1" height="1" fill="#2e609c"/>
<rect x="36" y="42" width="1" height="1" fill="#6452ac"/>
<rect x="38" y="42" width="1" height="1" fill="#3672ba"/>
<rect x="40" y="42" width="1" height="1" fill="#6452ac"/>
<rect x="42" y="42" width="1" height="1" fill="#3672ba"/>
<rect x="44" y="42" width="1" height="1" fill="#3672ba"/>
<rect x="46" y="42" width="1" height="1" fill="#3672ba"/>
<rect x="50" y="42" width="1" height="1" fill="#2e609c"/>
<rect x="52" y="42" width="1" height="1" fill="#2e609c"/>
<rect x="58" y="42" width="1" height="1" fill="#2e609c"/>
<rect x="60" y="42" width="1" height="1" fill="#3672ba"/>
<rect x="62" y="42" width="1" height="1" fill="#3672ba"/>
<rect x="64" y="42" width="1" height="1" fill="#3672ba"/>
<rect x="66" y="42" width="1" height="1" fill="#3672ba"/>
<rect x="68" y="42" width="1" height="1" fill="#3672ba"/>
<rect x="70" y="42" width="1" height="1" fill="#6452ac"/>
<rect x="72" y="42" width="1" height="1" fill="#3672ba"/>
<rect x="74" y="42" width="1" height="1" fill="#2e609c"/>
<rect x="76" y="42" width="1" height="1" fill="#2e609c"/>
<rect x="77" y="42" width="1" height="1" fill="#4a7c52"/>
<rect x="78" y="42" width="1" height="1" fill="#5a4650"/>
<rect x="80" y="42" width="1" height="1" fill="#2a4c62"/>
<rect x="82" y="42" width="1" height="1" fill="#2a4c62"/>
<rect x="84" y="42" width="1" height="1" fill="#5a4650"/>
<rect x="86" y="42" width="1" height="1" fill="#2a4c62"/>
<rect x="88" y="42" width="1" height="1" fill="#2a4c62"/>
<rect x="90" y="42" width="1" height="1" fill="#2a4c62"/>
<rect x="92" y="42" width="1" height="1" fill="#2a4c62"/>
<rect x="94" y="42" width="1" height="1" fill="#2a4c62"/>
<rect x="1" y="43" width="1" height="1" fill="#2a4c62"/>
<rect x="3" y="43" width="1" height="1" fill="#5a4650"/>
<rect x="5" y="43" width="1" height="1" fill="#2a4c62"/>
<rect x="7" y="43" width="1" height="1" fill="#5a4650"/>
<rect x="9" y="43" width="1" height="1" fill="#5a4650"/>
<rect x="11" y="43" width="1" height="1" fill="#2a4c62"/>
<rect x="13" y="43" width="1" height="1" fill="#2a4c62"/>
<rect x="15" y="43" width="1" height="1" fill="#2a4c62"/>
<rect x="17" y="43" width="1" height="1" fill="#2a4c62"/>
<rect x="19" y="43" width="1" height="1" fill="#2a4c62"/>
<rect x="22" y="43" width="1" height="1" fill="#3672ba"/>
<rect x="24" y="43" width="1" height="1" fill="#3672ba"/>
<rect x="26" y="43" width="1" height="1" fill="#2e609c"/>
<rect x="29" y="43" width="1" height="1" fill="#4a7c52"/>
<rect x="30" y="43" width="1" height="1" fill="#2e609c"/>
<rect x="32" y="43" width="1" height="1" fill="#2e609c"/>
<rect x="34" y="43" width="1" height="1" fill="#3672ba"/>
<rect x="36" y="43" width="1" height="1" fill="#6452ac"/>
<rect x="38" y="43" width="1" height="1" fill="#3672ba"/>
<rect x="40" y="43" width="1" height="1" fill="#2e609c"/>
<rect x="42" y="43" width="1" height="1" fill="#3672ba"/>
<rect x="46" y="43" width="1" height="1" fill="#3672ba"/>
<rect x="50" y="43" width="1" height="1" fill="#3672ba"/>
<rect x="52" y="43" width="1" height="1" fill="#2e609c"/>
<rect x="54" y="43" width="1" height="1" fill="#3672ba"/>
<rect x="57" y="43" width="1" height="1" fill="#3672ba"/>
<rect x="61" y="43" width="1" height="1" fill="#2e609c"/>
<rect x="65" y="43" width="1" height="1" fill="#2e609c"/>
<rect x="67" y="43" width="1" height="1" fill="#3672ba"/>
<rect x="69" y="43" width="1" height="1" fill="#3672ba"/>
<rect x="70" y="43" width="1" height="1" fill="#4a7c52"/>
<rect x="71" y="43" width="1" height="1" fill="#3672ba"/>
<rect x="75" y="43" width="1" height="1" fill="#3672ba"/>
<rect x="78" y="43" width="1" height="1" fill="#3672ba"/>
<rect x="80" y="43" width="1" height="1" fill="#6452ac"/>
<rect x="82" y="43" width="1" height="1" fill="#2e609c"/>
<rect x="84" y="43" width="1" height="1" fill="#3672ba"/>
<rect x="86" y="43" width="1" height="1" fill="#3672ba"/>
<rect x="88" y="43" width="1" height="1" fill="#3672ba"/>
<rect x="89" y="43" width="1" height="1" fill="#4a7c52"/>
<rect x="90" y="43" width="1" height="1" fill="#3672ba"/>
<rect x="92" y="43" width="1" height="1" fill="#2e609c"/>
<rect x="94" y="43" width="1" height="1" fill="#3672ba"/>
<rect x="1" y="44" width="1" height="1" fill="#2e609c"/>
<rect x="3" y="44" width="1" height="1" fill="#3672ba"/>
<rect x="5" y="44" width="1" height="1" fill="#2e609c"/>
<rect x="7" y="44" width="1" height="1" fill="#2e609c"/>
<rect x="9" y="44" width="1" height="1" fill="#3672ba"/>
<rect x="12" y="44" width="1" height="1" fill="#4a7c52"/>
<rect x="15" y="44" width="1" height="1" fill="#3672ba"/>
<rect x="16" y="44" width="1" height="1" fill="#4a7c52"/>
<rect x="17" y="44" width="1" height="1" fill="#2e609c"/>
<rect x="19" y="44" width="1" height="1" fill="#3672ba"/>
<rect x="24" y="44" width="1" height="1" fill="#2a4c62"/>
<rect x="26" y="44" width="1" height="1" fill="#2a4c62"/>
<rect x="28" y="44" width="1" height="1" fill="#2a4c62"/>
<rect x="30" y="44" width="1" height="1" fill="#2a4c62"/>
<rect x="32" y="44" width="1" height="1" fill="#2a4c62"/>
<rect x="34" y="44" width="1" height="1" fill="#2a4c62"/>
<rect x="36" y="44" width="1" height="1" fill="#2a4c62"/>
<rect x="38" y="44" width="1" height="1" fill="#2a4c62"/>
<rect x="44" y="44" width="1" height="1" fill="#2a4c62"/>
<rect x="46" y="44" width="1" height="1" fill="#2a4c62"/>
<rect x="48" y="44" width="1" height="1" fill="#2a4c62"/>
<rect x="52" y="44" width="1" height="1" fill="#2a4c62"/>
<rect x="54" y="44" width="1" height="1" fill="#2a4c62"/>
<rect x="57" y="44" width="1" height="1" fill="#2a4c62"/>
<rect x="59" y="44" width="1" height="1" fill="#2a4c62"/>
<rect x="60" y="44" width="1" height="1" fill="#4a7c52"/>
<rect x="61" y="44" width="1" height="1" fill="#5a4650"/>
<rect x="63" y="44" width="1" height="1" fill="#2a4c62"/>
<rect x="67" y="44" width="1" height="1" fill="#2a4c62"/>
<rect x="69" y="44" width="1" height="1" fill="#2a4c62"/>
<rect x="71" y="44" width="1" height="1" fill="#2a4c62"/>
<rect x="73" y="44" width="1" height="1" fill="#2a4c62"/>
<rect x="75" y="44" width="1" height="1" fill="#5a4650"/>
<rect x="78" y="44" width="1" height="1" fill="#2a4c62"/>
<rect x="82" y="44" width="1" height="1" fill="#2a4c62"/>
<rect x="84" y="44" width="1" height="1" fill="#2a4c62"/>
<rect x="86" y="44" width="1" height="1" fill="#5a4650"/>
<rect x="87" y="44" width="1" height="1" fill="#4a7c52"/>
<rect x="88" y="44" width="1" height="1" fill="#2a4c62"/>
<rect x="90" y="44" width="1" height="1" fill="#2a4c62"/>
<rect x="92" y="44" width="1" height="1" fill="#5a4650"/>
<rect x="94" y="44" width="1" height="1" fill="#2a4c62"/>
<rect x="0" y="45" width="1" height="1" fill="#2e609c"/>
<rect x="2" y="45" width="1" height="1" fill="#3672ba"/>
<rect x="4" y="45" width="1" height="1" fill="#2e609c"/>
<rect x="6" y="45" width="1" height="1" fill="#3672ba"/>
<rect x="8" y="45" width="1" height="1" fill="#3672ba"/>
<rect x="12" y="45" width="1" height="1" fill="#3672ba"/>
<rect x="14" y="45" width="1" height="1" fill="#6452ac"/>
<rect x="16" y="45" width="1" height="1" fill="#2e609c"/>
<rect x="17" y="45" width="1" height="1" fill="#4a7c52"/>
<rect x="18" y="45" width="1" height="1" fill="#3672ba"/>
<rect x="19" y="45" width="1" height="1" fill="#4a7c52"/>
<rect x="20" y="45" width="1" height="1" fill="#6452ac"/>
<rect x="22" y="45" width="1" height="1" fill="#3672ba"/>
<rect x="23" y="45" width="1" height="1" fill="#4a7c52"/>
<rect x="24" y="45" width="1" height="1" fill="#3672ba"/>
<rect x="26" y="45" width="1" height="1" fill="#2e609c"/>
<rect x="34" y="45" width="1" height="1" fill="#3672ba"/>
<rect x="36" y="45" width="1" height="1" fill="#6452ac"/>
<rect x="38" y="45" width="1" height="1" fill="#3672ba"/>
<rect x="40" y="45" width="1" height="1" fill="#2e609c"/>
<rect x="43" y="45" width="1" height="1" fill="#4a7c52"/>
<rect x="44" y="45" width="1" height="1" fill="#3672ba"/>
<rect x="46" y="45" width="1" height="1" fill="#3672ba"/>
<rect x="48" y="45" width="1" height="1" fill="#2e609c"/>
<rect x="50" y="45" width="1" height="1" fill="#3672ba"/>
<rect x="52" y="45" width="1" height="1" fill="#2e609c"/>
<rect x="58" y="45" width="1" height="1" fill="#3672ba"/>
<rect x="60" y="45" width="1" height="1" fill="#3672ba"/>
<rect x="64" y="45" width="1" height="1" fill="#3672ba"/>
<rect x="66" y="45" width="1" height="1" fill="#3672ba"/>
<rect x="68" y="45" width="1" height="1" fill="#2e609c"/>
<rect x="69" y="45" width="1" height="1" fill="#4a7c52"/>
<rect x="70" y="45" width="1" height="1" fill="#3672ba"/>
<rect x="72" y="45" width="1" height="1" fill="#3672ba"/>
<rect x="74" y="45" width="1" height="1" fill="#2e609c"/>
<rect x="76" y="45" width="1" height="1" fill="#3672ba"/>
<rect x="78" y="45" width="1" height="1" fill="#2e609c"/>
<rect x="80" y="45" width="1" height="1" fill="#3672ba"/>
<rect x="82" y="45" width="1" height="1" fill="#6452ac"/>
<rect x="84" y="45" width="1" height="1" fill="#2a4c62"/>
<rect x="86" y="45" width="1" height="1" fill="#2a4c62"/>
<rect x="88" y="45" width="1" height="1" fill="#2a4c62"/>
<rect x="89" y="45" width="1" height="1" fill="#4a7c52"/>
<rect x="90" y="45" width="1" height="1" fill="#5a4650"/>
<rect x="92" y="45" width="1" height="1" fill="#2a4c62"/>
<rect x="93" y="45" width="1" height="1" fill="#4a7c52"/>
<rect x="94" y="45" width="1" height="1" fill="#2a4c62"/>
<rect x="0" y="46" width="1" height="1" fill="#2a4c62"/>
<rect x="2" y="46" width="1" height="1" fill="#2a4c62"/>
<rect x="8" y="46" width="1" height="1" fill="#2a4c62"/>
<rect x="10" y="46" width="1" height="1" fill="#2a4c62"/>
<rect x="12" y="46" width="1" height="1" fill="#2a4c62"/>
<rect x="14" y="46" width="1" height="1" fill="#5a4650"/>
<rect x="16" y="46" width="1" height="1" fill="#2a4c62"/>
<rect x="18" y="46" width="1" height="1" fill="#2a4c62"/>
<rect x="20" y="46" width="1" height="1" fill="#2a4c62"/>
<rect x="22" y="46" width="1" height="1" fill="#5a4650"/>
<rect x="24" y="46" width="1" height="1" fill="#2a4c62"/>
<rect x="26" y="46" width="1" height="1" fill="#2a4c62"/>
<rect x="28" y="46" width="1" height="1" fill="#2a4c62"/>
<rect x="30" y="46" width="1" height="1" fill="#2a4c62"/>
<rect x="34" y="46" width="1" height="1" fill="#2a4c62"/>
<rect x="36" y="46" width="1" height="1" fill="#2a4c62"/>
<rect x="38" y="46" width="1" height="1" fill="#2a4c62"/>
<rect x="40" y="46" width="1" height="1" fill="#2a4c62"/>
<rect x="42" y="46" width="1" height="1" fill="#2a4c62"/>
<rect x="44" y="46" width="1" height="1" fill="#2a4c62"/>
<rect x="46" y="46" width="1" height="1" fill="#2a4c62"/>
<rect x="48" y="46" width="1" height="1" fill="#2a4c62"/>
<rect x="50" y="46" width="1" height="1" fill="#2a4c62"/>
<rect x="52" y="46" width="1" height="1" fill="#2a4c62"/>
<rect x="58" y="46" width="1" height="1" fill="#2a4c62"/>
<rect x="60" y="46" width="1" height="1" fill="#2a4c62"/>
<rect x="62" y="46" width="1" height="1" fill="#5a4650"/>
<rect x="66" y="46" width="1" height="1" fill="#2a4c62"/>
<rect x="68" y="46" width="1" height="1" fill="#2a4c62"/>
<rect x="70" y="46" width="1" height="1" fill="#2a4c62"/>
<rect x="72" y="46" width="1" height="1" fill="#2a4c62"/>
<rect x="74" y="46" width="1" height="1" fill="#2a4c62"/>
<rect x="76" y="46" width="1" height="1" fill="#2a4c62"/>
<rect x="78" y="46" width="1" height="1" fill="#5a4650"/>
<rect x="79" y="46" width="1" height="1" fill="#4a7c52"/>
<rect x="80" y="46" width="1" height="1" fill="#2a4c62"/>
<rect x="82" y="46" width="1" height="1" fill="#5a4650"/>
<rect x="84" y="46" width="1" height="1" fill="#3672ba"/>
<rect x="86" y="46" width="1" height="1" fill="#3672ba"/>
<rect x="88" y="46" width="1" height="1" fill="#2e609c"/>
<rect x="92" y="46" width="1" height="1" fill="#3672ba"/>
<rect x="94" y="46" width="1" height="1" fill="#3672ba"/>
<rect x="1" y="47" width="1" height="1" fill="#3672ba"/>
<rect x="5" y="47" width="1" height="1" fill="#2e609c"/>
<rect x="13" y="47" width="1" height="1" fill="#2e609c"/>
<rect x="15" y="47" width="1" height="1" fill="#6452ac"/>
<rect x="17" y="47" width="1" height="1" fill="#3672ba"/>
<rect x="19" y="47" width="1" height="1" fill="#6452ac"/>
<rect x="21" y="47" width="1" height="1" fill="#2e609c"/>
<rect x="23" y="47" width="1" height="1" fill="#3672ba"/>
<rect x="27" y="47" width="1" height="1" fill="#3672ba"/>
<rect x="29" y="47" width="1" height="1" fill="#2e609c"/>
<rect x="31" y="47" width="1" height="1" fill="#3672ba"/>
<rect x="33" y="47" width="1" height="1" fill="#3672ba"/>
<rect x="35" y="47" width="1" height="1" fill="#3672ba"/>
<rect x="37" y="47" width="1" height="1" fill="#2e609c"/>
<rect x="39" y="47" width="1" height="1" fill="#2e609c"/>
<rect x="42" y="47" width="1" height="1" fill="#2a4c62"/>
<rect x="46" y="47" width="1" height="1" fill="#2a4c62"/>
<rect x="48" y="47" width="1" height="1" fill="#2a4c62"/>
<rect x="50" y="47" width="1" height="1" fill="#2a4c62"/>
<rect x="51" y="47" width="1" height="1" fill="#4a7c52"/>
<rect x="52" y="47" width="1" height="1" fill="#2a4c62"/>
<rect x="54" y="47" width="1" height="1" fill="#2a4c62"/>
<rect x="56" y="47" width="1" height="1" fill="#2a4c62"/>
<rect x="58" y="47" width="1" height="1" fill="#2a4c62"/>
<rect x="62" y="47" width="1" height="1" fill="#2a4c62"/>
<rect x="64" y="47" width="1" height="1" fill="#2a4c62"/>
<rect x="66" y="47" width="1" height="1" fill="#2a4c62"/>
<rect x="71" y="47" width="1" height="1" fill="#4a7c52"/>
<rect x="72" y="47" width="1" height="1" fill="#2a4c62"/>
<rect x="74" y="47" width="1" height="1" fill="#2a4c62"/>
<rect x="76" y="47" width="1" height="1" fill="#2a4c62"/>
<rect x="78" y="47" width="1" height="1" fill="#2a4c62"/>
<rect x="82" y="47" width="1" height="1" fill="#2e609c"/>
<rect x="84" y="47" width="1" height="1" fill="#3672ba"/>
<rect x="85" y="47" width="1" height="1" fill="#4a7c52"/>
<rect x="86" y="47" width="1" height="1" fill="#3672ba"/>
<rect x="88" y="47" width="1" height="1" fill="#3672ba"/>
<rect x="90" y="47" width="1" height="1" fill="#3672ba"/>
<rect x="94" y="47" width="1" height="1" fill="#3874bc"/>
<rect x="3" y="48" width="1" height="1" fill="#2a4c62"/>
<rect x="5" y="48" width="1" height="1" fill="#2a4c62"/>
<rect x="9" y="48" width="1" height="1" fill="#2a4c62"/>
<rect x="11" y="48" width="1" height="1" fill="#2a4c62"/>
<rect x="13" y="48" width="1" height="1" fill="#2a4c62"/>
<rect x="15" y="48" width="1" height="1" fill="#5a4650"/>
<rect x="17" y="48" width="1" height="1" fill="#2a4c62"/>
<rect x="19" y="48" width="1" height="1" fill="#5a4650"/>
<rect x="20" y="48" width="1" height="1" fill="#4a7c52"/>
<rect x="21" y="48" width="1" height="1" fill="#2a4c62"/>
<rect x="22" y="48" width="1" height="1" fill="#4a7c52"/>
<rect x="23" y="48" width="1" height="1" fill="#2a4c62"/>
<rect x="25" y="48" width="1" height="1" fill="#2a4c62"/>
<rect x="27" y="48" width="1" height="1" fill="#2a4c62"/>
<rect x="31" y="48" width="1" height="1" fill="#2a4c62"/>
<rect x="33" y="48" width="1" height="1" fill="#2a4c62"/>
<rect x="35" y="48" width="1" height="1" fill="#2a4c62"/>
<rect x="37" y="48" width="1" height="1" fill="#2a4c62"/>
<rect x="39" y="48" width="1" height="1" fill="#2a4c62"/>
<rect x="42" y="48" width="1" height="1" fill="#2e609c"/>
<rect x="44" y="48" width="1" height="1" fill="#3672ba"/>
<rect x="47" y="48" width="1" height="1" fill="#4a7c52"/>
<rect x="48" y="48" width="1" height="1" fill="#6452ac"/>
<rect x="50" y="48" width="1" height="1" fill="#2e609c"/>
<rect x="52" y="48" width="1" height="1" fill="#2e609c"/>
<rect x="54" y="48" width="1" height="1" fill="#3672ba"/>
<rect x="55" y="48" width="1" height="1" fill="#4a7c52"/>
<rect x="58" y="48" width="1" height="1" fill="#3672ba"/>
<rect x="60" y="48" width="1" height="1" fill="#3672ba"/>
<rect x="61" y="48" width="1" height="1" fill="#4a7c52"/>
<rect x="64" y="48" width="1" height="1" fill="#3672ba"/>
<rect x="66" y="48" width="1" height="1" fill="#2e609c"/>
<rect x="68" y="48" width="1" height="1" fill="#3672ba"/>
<rect x="70" y="48" width="1" height="1" fill="#3672ba"/>
<rect x="72" y="48" width="1" height="1" fill="#3672ba"/>
<rect x="74" y="48" width="1" height="1" fill="#3672ba"/>
<rect x="78" y="48" width="1" height="1" fill="#3672ba"/>
<rect x="80" y="48" width="1" height="1" fill="#2e609c"/>
<rect x="84" y="48" width="1" height="1" fill="#2a4c62"/>
<rect x="86" y="48" width="1" height="1" fill="#2a4c62"/>
<rect x="88" y="48" width="1" height="1" fill="#2a4c62"/>
<rect x="89" y="48" width="1" height="1" fill="#4a7c52"/>
<rect x="90" y="48" width="1" height="1" fill="#2a4c62"/>
<rect x="92" y="48" width="1" height="1" fill="#2a4c62"/>
<rect x="94" y="48" width="1" height="1" fill="#2a4c62"/>
<rect x="1" y="49" width="1" height="1" fill="#2a4c62"/>
<rect x="3" y="49" width="1" height="1" fill="#2a4c62"/>
<rect x="5" y="49" width="1" height="1" fill="#2a4c62"/>
<rect x="7" y="49" width="1" height="1" fill="#2a4c62"/>
<rect x="11" y="49" width="1" height="1" fill="#2a4c62"/>
<rect x="13" y="49" width="1" height="1" fill="#2a4c62"/>
<rect x="15" y="49" width="1" height="1" fill="#2a4c62"/>
<rect x="17" y="49" width="1" height="1" fill="#2a4c62"/>
<rect x="19" y="49" width="1" height="1" fill="#2a4c62"/>
<rect x="23" y="49" width="1" height="1" fill="#2a4c62"/>
<rect x="25" y="49" width="1" height="1" fill="#2a4c62"/>
<rect x="27" y="49" width="1" height="1" fill="#2a4c62"/>
<rect x="29" y="49" width="1" height="1" fill="#3672ba"/>
<rect x="31" y="49" width="1" height="1" fill="#6452ac"/>
<rect x="33" y="49" width="1" height="1" fill="#3672ba"/>
<rect x="35" y="49" width="1" height="1" fill="#3672ba"/>
<rect x="37" y="49" width="1" height="1" fill="#2e609c"/>
<rect x="40" y="49" width="1" height="1" fill="#4a7c52"/>
<rect x="41" y="49" width="1" height="1" fill="#2e609c"/>
<rect x="44" y="49" width="1" height="1" fill="#2a4c62"/>
<rect x="45" y="49" width="1" height="1" fill="#4a7c52"/>
<rect x="46" y="49" width="1" height="1" fill="#2a4c62"/>
<rect x="48" y="49" width="1" height="1" fill="#2a4c62"/>
<rect x="50" y="49" width="1" height="1" fill="#2a4c62"/>
<rect x="52" y="49" width="1" height="1" fill="#2a4c62"/>
<rect x="54" y="49" width="1" height="1" fill="#2a4c62"/>
<rect x="55" y="49" width="1" height="1" fill="#4a7c52"/>
<rect x="56" y="49" width="1" height="1" fill="#2a4c62"/>
<rect x="58" y="49" width="1" height="1" fill="#5a4650"/>
<rect x="60" y="49" width="1" height="1" fill="#2a4c62"/>
<rect x="62" y="49" width="1" height="1" fill="#2a4c62"/>
<rect x="64" y="49" width="1" height="1" fill="#2a4c62"/>
<rect x="66" y="49" width="1" height="1" fill="#3672ba"/>
<rect x="67" y="49" width="1" height="1" fill="#4a7c52"/>
<rect x="68" y="49" width="1" height="1" fill="#3672ba"/>
<rect x="74" y="49" width="1" height="1" fill="#6452ac"/>
<rect x="80" y="49" width="1" height="1" fill="#3672ba"/>
<rect x="82" y="49" width="1" height="1" fill="#3672ba"/>
<rect x="84" y="49" width="1" height="1" fill="#3672ba"/>
<rect x="86" y="49" width="1" height="1" fill="#2e609c"/>
<rect x="88" y="49" width="1" height="1" fill="#3672ba"/>
<rect x="90" y="49" width="1" height="1" fill="#3672ba"/>
<rect x="92" y="49" width="1" height="1" fill="#2e609c"/>
<rect x="94" y="49" width="1" height="1" fill="#3672ba"/>
<rect x="1" y="50" width="1" height="1" fill="#2e609c"/>
<rect x="3" y="50" width="1" height="1" fill="#3672ba"/>
<rect x="7" y="50" width="1" height="1" fill="#3672ba"/>
<rect x="9" y="50" width="1" height="1" fill="#3672ba"/>
<rect x="11" y="50" width="1" height="1" fill="#6452ac"/>
<rect x="13" y="50" width="1" height="1" fill="#2e609c"/>
<rect x="15" y="50" width="1" height="1" fill="#3672ba"/>
<rect x="17" y="50" width="1" height="1" fill="#3672ba"/>
<rect x="19" y="50" width="1" height="1" fill="#2e609c"/>
<rect x="21" y="50" width="1" height="1" fill="#3672ba"/>
<rect x="23" y="50" width="1" height="1" fill="#2e609c"/>
<rect x="25" y="50" width="1" height="1" fill="#2e609c"/>
<rect x="27" y="50" width="1" height="1" fill="#2e609c"/>
<rect x="29" y="50" width="1" height="1" fill="#2a4c62"/>
<rect x="31" y="50" width="1" height="1" fill="#2a4c62"/>
<rect x="33" y="50" width="1" height="1" fill="#2a4c62"/>
<rect x="37" y="50" width="1" height="1" fill="#2a4c62"/>
<rect x="39" y="50" width="1" height="1" fill="#2a4c62"/>
<rect x="41" y="50" width="1" height="1" fill="#2a4c62"/>
<rect x="44" y="50" width="1" height="1" fill="#3672ba"/>
<rect x="46" y="50" width="1" height="1" fill="#2e609c"/>
<rect x="48" y="50" width="1" height="1" fill="#6452ac"/>
<rect x="50" y="50" width="1" height="1" fill="#3672ba"/>
<rect x="52" y="50" width="1" height="1" fill="#3672ba"/>
<rect x="54" y="50" width="1" height="1" fill="#3672ba"/>
<rect x="56" y="50" width="1" height="1" fill="#3672ba"/>
<rect x="58" y="50" width="1" height="1" fill="#6452ac"/>
<rect x="60" y="50" width="1" height="1" fill="#6452ac"/>
<rect x="62" y="50" width="1" height="1" fill="#3672ba"/>
<rect x="64" y="50" width="1" height="1" fill="#2e609c"/>
<rect x="66" y="50" width="1" height="1" fill="#2a4c62"/>
<rect x="68" y="50" width="1" height="1" fill="#2a4c62"/>
<rect x="70" y="50" width="1" height="1" fill="#2a4c62"/>
<rect x="72" y="50" width="1" height="1" fill="#2a4c62"/>
<rect x="74" y="50" width="1" height="1" fill="#2a4c62"/>
<rect x="75" y="50" width="1" height="1" fill="#4a7c52"/>
<rect x="76" y="50" width="1" height="1" fill="#2a4c62"/>
<rect x="78" y="50" width="1" height="1" fill="#2a4c62"/>
<rect x="80" y="50" width="1" height="1" fill="#2a4c62"/>
<rect x="82" y="50" width="1" height="1" fill="#2a4c62"/>
<rect x="84" y="50" width="1" height="1" fill="#2a4c62"/>
<rect x="86" y="50" width="1" height="1" fill="#2a4c62"/>
<rect x="90" y="50" width="1" height="1" fill="#2a4c62"/>
<rect x="92" y="50" width="1" height="1" fill="#2a4c62"/>
<rect x="93" y="50" width="1" height="1" fill="#4a7c52"/>
<rect x="94" y="50" width="1" height="1" fill="#2a4c62"/>
<rect x="0" y="51" width="1" height="1" fill="#2e609c"/>
<rect x="2" y="51" width="1" height="1" fill="#3672ba"/>
<rect x="4" y="51" width="1" height="1" fill="#3672ba"/>
<rect x="6" y="51" width="1" height="1" fill="#3672ba"/>
<rect x="8" y="51" width="1" height="1" fill="#3672ba"/>
<rect x="10" y="51" width="1" height="1" fill="#3672ba"/>
<rect x="12" y="51" width="1" height="1" fill="#3672ba"/>
<rect x="13" y="51" width="1" height="1" fill="#2e609c"/>
<rect x="15" y="51" width="1" height="1" fill="#3672ba"/>
<rect x="17" y="51" width="1" height="1" fill="#6452ac"/>
<rect x="19" y="51" width="1" height="1" fill="#2e609c"/>
<rect x="22" y="51" width="1" height="1" fill="#4a7c52"/>
<rect x="23" y="51" width="1" height="1" fill="#3672ba"/>
<rect x="25" y="51" width="1" height="1" fill="#2e609c"/>
<rect x="27" y="51" width="1" height="1" fill="#6452ac"/>
<rect x="29" y="51" width="1" height="1" fill="#3672ba"/>
<rect x="31" y="51" width="1" height="1" fill="#6452ac"/>
<rect x="33" y="51" width="1" height="1" fill="#3874bc"/>
<rect x="35" y="51" width="1" height="1" fill="#3874bc"/>
<rect x="36" y="51" width="1" height="1" fill="#4a7c52"/>
<rect x="37" y="51" width="1" height="1" fill="#2a4c62"/>
<rect x="41" y="51" width="1" height="1" fill="#6452ac"/>
<rect x="43" y="51" width="1" height="1" fill="#2a4c62"/>
<rect x="45" y="51" width="1" height="1" fill="#3874bc"/>
<rect x="47" y="51" width="1" height="1" fill="#2a4c62"/>
<rect x="49" y="51" width="1" height="1" fill="#6452ac"/>
<rect x="51" y="51" width="1" height="1" fill="#6452ac"/>
<rect x="53" y="51" width="1" height="1" fill="#6452ac"/>
<rect x="57" y="51" width="1" height="1" fill="#3874bc"/>
<rect x="59" y="51" width="1" height="1" fill="#6452ac"/>
<rect x="61" y="51" width="1" height="1" fill="#2a4c62"/>
<rect x="63" y="51" width="1" height="1" fill="#4a86c4"/>
<rect x="65" y="51" width="1" height="1" fill="#4a86c4"/>
<rect x="67" y="51" width="1" height="1" fill="#3874bc"/>
<rect x="68" y="51" width="1" height="1" fill="#4a7c52"/>
<rect x="69" y="51" width="1" height="1" fill="#6452ac"/>
<rect x="71" y="51" width="1" height="1" fill="#4a86c4"/>
<rect x="76" y="51" width="1" height="1" fill="#2a4c62"/>
<rect x="78" y="51" width="1" height="1" fill="#2a4c62"/>
<rect x="80" y="51" width="1" height="1" fill="#2a4c62"/>
<rect x="82" y="51" width="1" height="1" fill="#2a4c62"/>
<rect x="84" y="51" width="1" height="1" fill="#2a4c62"/>
<rect x="86" y="51" width="1" height="1" fill="#2a4c62"/>
<rect x="88" y="51" width="1" height="1" fill="#2a4c62"/>
<rect x="90" y="51" width="1" height="1" fill="#2a4c62"/>
<rect x="92" y="51" width="1" height="1" fill="#2a4c62"/>
<rect x="94" y="51" width="1" height="1" fill="#2a4c62"/>
<rect x="0" y="52" width="1" height="1" fill="#2a4c62"/>
<rect x="2" y="52" width="1" height="1" fill="#2a4c62"/>
<rect x="4" y="52" width="1" height="1" fill="#2a4c62"/>
<rect x="8" y="52" width="1" height="1" fill="#2a4c62"/>
<rect x="10" y="52" width="1" height="1" fill="#2a4c62"/>
<rect x="11" y="52" width="1" height="1" fill="#4a7c52"/>
<rect x="15" y="52" width="1" height="1" fill="#2a4c62"/>
<rect x="17" y="52" width="1" height="1" fill="#2a4c62"/>
<rect x="19" y="52" width="1" height="1" fill="#2a4c62"/>
<rect x="20" y="52" width="1" height="1" fill="#4a7c52"/>
<rect x="21" y="52" width="1" height="1" fill="#5a4650"/>
<rect x="23" y="52" width="1" height="1" fill="#5a4650"/>
<rect x="25" y="52" width="1" height="1" fill="#2a4c62"/>
<rect x="27" y="52" width="1" height="1" fill="#2a4c62"/>
<rect x="29" y="52" width="1" height="1" fill="#2a4c62"/>
<rect x="30" y="52" width="1" height="1" fill="#4a7c52"/>
<rect x="31" y="52" width="1" height="1" fill="#3874bc"/>
<rect x="33" y="52" width="1" height="1" fill="#3874bc"/>
<rect x="34" y="52" width="1" height="1" fill="#4a7c52"/>
<rect x="35" y="52" width="1" height="1" fill="#6452ac"/>
<rect x="37" y="52" width="1" height="1" fill="#3874bc"/>
<rect x="39" y="52" width="1" height="1" fill="#4a86c4"/>
<rect x="43" y="52" width="1" height="1" fill="#6452ac"/>
<rect x="47" y="52" width="1" height="1" fill="#2a4c62"/>
<rect x="49" y="52" width="1" height="1" fill="#4a86c4"/>
<rect x="51" y="52" width="1" height="1" fill="#2a4c62"/>
<rect x="53" y="52" width="1" height="1" fill="#6452ac"/>
<rect x="55" y="52" width="1" height="1" fill="#2a4c62"/>
<rect x="57" y="52" width="1" height="1" fill="#3874bc"/>
<rect x="59" y="52" width="1" height="1" fill="#6452ac"/>
<rect x="61" y="52" width="1" height="1" fill="#4a86c4"/>
<rect x="62" y="52" width="1" height="1" fill="#4a7c52"/>
<rect x="63" y="52" width="1" height="1" fill="#6452ac"/>
<rect x="65" y="52" width="1" height="1" fill="#4a86c4"/>
<rect x="67" y="52" width="1" height="1" fill="#4a86c4"/>
<rect x="69" y="52" width="1" height="1" fill="#4a86c4"/>
<rect x="73" y="52" width="1" height="1" fill="#2a4c62"/>
<rect x="76" y="52" width="1" height="1" fill="#3672ba"/>
<rect x="78" y="52" width="1" height="1" fill="#2e609c"/>
<rect x="80" y="52" width="1" height="1" fill="#3672ba"/>
<rect x="82" y="52" width="1" height="1" fill="#3672ba"/>
<rect x="84" y="52" width="1" height="1" fill="#3672ba"/>
<rect x="86" y="52" width="1" height="1" fill="#3672ba"/>
<rect x="88" y="52" width="1" height="1" fill="#2e609c"/>
<rect x="90" y="52" width="1" height="1" fill="#2e609c"/>
<rect x="92" y="52" width="1" height="1" fill="#2e609c"/>
<rect x="94" y="52" width="1" height="1" fill="#6452ac"/>
<rect x="0" y="53" width="1" height="1" fill="#2e609c"/>
<rect x="2" y="53" width="1" height="1" fill="#3672ba"/>
<rect x="6" y="53" width="1" height="1" fill="#3672ba"/>
<rect x="8" y="53" width="1" height="1" fill="#3672ba"/>
<rect x="10" y="53" width="1" height="1" fill="#3672ba"/>
<rect x="12" y="53" width="1" height="1" fill="#3672ba"/>
<rect x="14" y="53" width="1" height="1" fill="#3672ba"/>
<rect x="16" y="53" width="1" height="1" fill="#3672ba"/>
<rect x="18" y="53" width="1" height="1" fill="#3672ba"/>
<rect x="20" y="53" width="1" height="1" fill="#3672ba"/>
<rect x="22" y="53" width="1" height="1" fill="#3672ba"/>
<rect x="24" y="53" width="1" height="1" fill="#3672ba"/>
<rect x="25" y="53" width="1" height="1" fill="#4a7c52"/>
<rect x="26" y="53" width="1" height="1" fill="#2e609c"/>
<rect x="29" y="53" width="1" height="1" fill="#6452ac"/>
<rect x="33" y="53" width="1" height="1" fill="#3874bc"/>
<rect x="35" y="53" width="1" height="1" fill="#2a4c62"/>
<rect x="39" y="53" width="1" height="1" fill="#3874bc"/>
<rect x="41" y="53" width="1" height="1" fill="#3874bc"/>
<rect x="43" y="53" width="1" height="1" fill="#6452ac"/>
<rect x="45" y="53" width="1" height="1" fill="#4a86c4"/>
<rect x="46" y="53" width="1" height="1" fill="#2a4c62"/>
<rect x="47" y="53" width="1" height="1" fill="#4a7c52"/>
<rect x="50" y="53" width="1" height="1" fill="#2a4c62"/>
<rect x="52" y="53" width="1" height="1" fill="#2a4c62"/>
<rect x="54" y="53" width="1" height="1" fill="#5a4650"/>
<rect x="56" y="53" width="1" height="1" fill="#2a4c62"/>
<rect x="58" y="53" width="1" height="1" fill="#2a4c62"/>
<rect x="59" y="53" width="1" height="1" fill="#4a7c52"/>
<rect x="60" y="53" width="1" height="1" fill="#2a4c62"/>
<rect x="62" y="53" width="1" height="1" fill="#2a4c62"/>
<rect x="64" y="53" width="1" height="1" fill="#2a4c62"/>
<rect x="66" y="53" width="1" height="1" fill="#2a4c62"/>
<rect x="68" y="53" width="1" height="1" fill="#2e609c"/>
<rect x="70" y="53" width="1" height="1" fill="#2e609c"/>
<rect x="72" y="53" width="1" height="1" fill="#2e609c"/>
<rect x="74" y="53" width="1" height="1" fill="#2e609c"/>
<rect x="76" y="53" width="1" height="1" fill="#6452ac"/>
<rect x="78" y="53" width="1" height="1" fill="#6452ac"/>
<rect x="80" y="53" width="1" height="1" fill="#3672ba"/>
<rect x="86" y="53" width="1" height="1" fill="#3672ba"/>
<rect x="88" y="53" width="1" height="1" fill="#6452ac"/>
<rect x="90" y="53" width="1" height="1" fill="#3672ba"/>
<rect x="92" y="53" width="1" height="1" fill="#3672ba"/>
<rect x="94" y="53" width="1" height="1" fill="#3672ba"/>
<rect x="0" y="54" width="1" height="1" fill="#5a4650"/>
<rect x="2" y="54" width="1" height="1" fill="#2a4c62"/>
<rect x="4" y="54" width="1" height="1" fill="#2a4c62"/>
<rect x="6" y="54" width="1" height="1" fill="#2a4c62"/>
<rect x="8" y="54" width="1" height="1" fill="#2a4c62"/>
<rect x="10" y="54" width="1" height="1" fill="#2a4c62"/>
<rect x="12" y="54" width="1" height="1" fill="#2a4c62"/>
<rect x="13" y="54" width="1" height="1" fill="#4a7c52"/>
<rect x="14" y="54" width="1" height="1" fill="#2a4c62"/>
<rect x="15" y="54" width="1" height="1" fill="#4a7c52"/>
<rect x="16" y="54" width="1" height="1" fill="#2a4c62"/>
<rect x="18" y="54" width="1" height="1" fill="#2a4c62"/>
<rect x="20" y="54" width="1" height="1" fill="#2a4c62"/>
<rect x="24" y="54" width="1" height="1" fill="#2a4c62"/>
<rect x="26" y="54" width="1" height="1" fill="#2a4c62"/>
<rect x="29" y="54" width="1" height="1" fill="#3874bc"/>
<rect x="31" y="54" width="1" height="1" fill="#4a86c4"/>
<rect x="33" y="54" width="1" height="1" fill="#2a4c62"/>
<rect x="35" y="54" width="1" height="1" fill="#4a86c4"/>
<rect x="37" y="54" width="1" height="1" fill="#4a86c4"/>
<rect x="39" y="54" width="1" height="1" fill="#3874bc"/>
<rect x="41" y="54" width="1" height="1" fill="#6452ac"/>
<rect x="43" y="54" width="1" height="1" fill="#4a86c4"/>
<rect x="45" y="54" width="1" height="1" fill="#6452ac"/>
<rect x="46" y="54" width="1" height="1" fill="#3672ba"/>
<rect x="48" y="54" width="1" height="1" fill="#3672ba"/>
<rect x="50" y="54" width="1" height="1" fill="#6452ac"/>
<rect x="52" y="54" width="1" height="1" fill="#2e609c"/>
<rect x="54" y="54" width="1" height="1" fill="#3672ba"/>
<rect x="58" y="54" width="1" height="1" fill="#2e609c"/>
<rect x="60" y="54" width="1" height="1" fill="#3672ba"/>
<rect x="62" y="54" width="1" height="1" fill="#3672ba"/>
<rect x="64" y="54" width="1" height="1" fill="#2e609c"/>
<rect x="65" y="54" width="1" height="1" fill="#4a7c52"/>
<rect x="66" y="54" width="1" height="1" fill="#3672ba"/>
<rect x="68" y="54" width="1" height="1" fill="#2a4c62"/>
<rect x="69" y="54" width="1" height="1" fill="#4a7c52"/>
<rect x="70" y="54" width="1" height="1" fill="#2a4c62"/>
<rect x="72" y="54" width="1" height="1" fill="#2a4c62"/>
<rect x="74" y="54" width="1" height="1" fill="#2a4c62"/>
<rect x="76" y="54" width="1" height="1" fill="#2a4c62"/>
<rect x="78" y="54" width="1" height="1" fill="#2a4c62"/>
<rect x="80" y="54" width="1" height="1" fill="#2a4c62"/>
<rect x="82" y="54" width="1" height="1" fill="#2a4c62"/>
<rect x="84" y="54" width="1" height="1" fill="#2a4c62"/>
<rect x="86" y="54" width="1" height="1" fill="#2a4c62"/>
<rect x="88" y="54" width="1" height="1" fill="#5a4650"/>
<rect x="90" y="54" width="1" height="1" fill="#2a4c62"/>
<rect x="92" y="54" width="1" height="1" fill="#2a4c62"/>
<rect x="94" y="54" width="1" height="1" fill="#2a4c62"/>
<rect x="0" y="55" width="1" height="1" fill="#2a4c62"/>
<rect x="2" y="55" width="1" height="1" fill="#2a4c62"/>
<rect x="4" y="55" width="1" height="1" fill="#2a4c62"/>
<rect x="6" y="55" width="1" height="1" fill="#2a4c62"/>
<rect x="8" y="55" width="1" height="1" fill="#5a4650"/>
<rect x="10" y="55" width="1" height="1" fill="#2a4c62"/>
<rect x="12" y="55" width="1" height="1" fill="#2a4c62"/>
<rect x="14" y="55" width="1" height="1" fill="#2a4c62"/>
<rect x="16" y="55" width="1" height="1" fill="#2a4c62"/>
<rect x="18" y="55" width="1" height="1" fill="#2a4c62"/>
<rect x="20" y="55" width="1" height="1" fill="#5a4650"/>
<rect x="24" y="55" width="1" height="1" fill="#5a4650"/>
<rect x="26" y="55" width="1" height="1" fill="#2a4c62"/>
<rect x="28" y="55" width="1" height="1" fill="#2a4c62"/>
<rect x="30" y="55" width="1" height="1" fill="#2a4c62"/>
<rect x="32" y="55" width="1" height="1" fill="#5a4650"/>
<rect x="34" y="55" width="1" height="1" fill="#2a4c62"/>
<rect x="36" y="55" width="1" height="1" fill="#2a4c62"/>
<rect x="38" y="55" width="1" height="1" fill="#2a4c62"/>
<rect x="40" y="55" width="1" height="1" fill="#2a4c62"/>
<rect x="44" y="55" width="1" height="1" fill="#2a4c62"/>
<rect x="46" y="55" width="1" height="1" fill="#4a86c4"/>
<rect x="50" y="55" width="1" height="1" fill="#4a86c4"/>
<rect x="52" y="55" width="1" height="1" fill="#4a86c4"/>
<rect x="55" y="55" width="1" height="1" fill="#2a4c62"/>
<rect x="57" y="55" width="1" height="1" fill="#2a4c62"/>
<rect x="59" y="55" width="1" height="1" fill="#2a4c62"/>
<rect x="61" y="55" width="1" height="1" fill="#2a4c62"/>
<rect x="63" y="55" width="1" height="1" fill="#5a4650"/>
<rect x="65" y="55" width="1" height="1" fill="#2a4c62"/>
<rect x="67" y="55" width="1" height="1" fill="#2a4c62"/>
<rect x="69" y="55" width="1" height="1" fill="#2a4c62"/>
<rect x="71" y="55" width="1" height="1" fill="#5a4650"/>
<rect x="73" y="55" width="1" height="1" fill="#2a4c62"/>
<rect x="75" y="55" width="1" height="1" fill="#2a4c62"/>
<rect x="77" y="55" width="1" height="1" fill="#2a4c62"/>
<rect x="79" y="55" width="1" height="1" fill="#2a4c62"/>
<rect x="81" y="55" width="1" height="1" fill="#2a4c62"/>
<rect x="83" y="55" width="1" height="1" fill="#6452ac"/>
<rect x="85" y="55" width="1" height="1" fill="#4a86c4"/>
<rect x="87" y="55" width="1" height="1" fill="#2a4c62"/>
<rect x="89" y="55" width="1" height="1" fill="#4a86c4"/>
<rect x="91" y="55" width="1" height="1" fill="#2a4c62"/>
</pattern>
<radialGradient id="s"><stop offset="0" stop-color="#c2c0b8"/><stop offset="0.55" stop-color="#a8a8b4"/><stop offset="0.85" stop-color="#8484ae"/><stop offset="1" stop-color="#5c5c84"/></radialGradient>
<clipPath id="cc"><rect x="47" y="50" width="712" height="378"/></clipPath>
</defs>
<rect width="790" height="562" fill="url(#bg)"/><rect width="790" height="2" fill="#28795a"/>
<rect x="47" y="49" width="712" height="379" fill="#000"/>
<g shape-rendering="crispEdges">
<rect x="48" y="98" width="711" height="1" fill="#74009a"/>
<rect x="48" y="170" width="711" height="1" fill="#74009a"/>
<rect x="48" y="242" width="711" height="1" fill="#74009a"/>
<rect x="48" y="314" width="711" height="1" fill="#74009a"/>
<rect x="48" y="386" width="711" height="1" fill="#74009a"/>
<rect x="215" y="50" width="1" height="378" fill="#74009a"/>
<rect x="305" y="50" width="1" height="378" fill="#74009a"/>
<rect x="395" y="50" width="1" height="378" fill="#74009a"/>
<rect x="485" y="50" width="1" height="378" fill="#74009a"/>
<rect x="575" y="50" width="1" height="378" fill="#74009a"/>
<rect x="665" y="50" width="1" height="378" fill="#74009a"/>
<rect x="755" y="50" width="1" height="378" fill="#74009a"/>
<rect x="125" y="50" width="1" height="378" fill="#a80000"/>
</g>
<g fill="#988a6c" shape-rendering="crispEdges">
<rect x="113" y="50" width="1" height="24"/>
<rect x="114" y="63" width="1" height="73"/>
<rect x="115" y="135" width="1" height="100"/>
<rect x="116" y="213" width="1" height="66"/>
<rect x="313" y="179" width="1" height="33"/>
<rect x="314" y="195" width="1" height="82"/>
<rect x="315" y="270" width="1" height="89"/>
<rect x="316" y="348" width="1" height="80"/>
<rect x="317" y="420" width="1" height="8"/>
<rect x="47" y="278" width="70" height="1"/>
<rect x="116" y="182" width="27" height="1"/>
<rect x="142" y="181" width="70" height="1"/>
<rect x="200" y="180" width="90" height="1"/>
<rect x="278" y="179" width="36" height="1"/>
</g>
<g fill="#c4c4bc" shape-rendering="crispEdges">
<rect x="87" y="59" width="1" height="1"/>
<rect x="93" y="59" width="1" height="1"/>
<rect x="102" y="68" width="1" height="1"/>
<rect x="67" y="77" width="1" height="1"/>
<rect x="67" y="83" width="1" height="1"/>
<rect x="94" y="77" width="1" height="1"/>
<rect x="120" y="80" width="1" height="1"/>
<rect x="131" y="79" width="1" height="1"/>
<rect x="153" y="60" width="1" height="1"/>
<rect x="178" y="53" width="1" height="1"/>
<rect x="193" y="61" width="1" height="1"/>
<rect x="193" y="64" width="1" height="1"/>
<rect x="185" y="68" width="1" height="1"/>
<rect x="86" y="103" width="1" height="1"/>
<rect x="51" y="112" width="1" height="1"/>
<rect x="148" y="109" width="1" height="1"/>
<rect x="155" y="130" width="1" height="1"/>
<rect x="191" y="116" width="1" height="1"/>
<rect x="197" y="103" width="1" height="1"/>
<rect x="197" y="107" width="1" height="1"/>
<rect x="91" y="135" width="1" height="1"/>
<rect x="265" y="69" width="1" height="1"/>
<rect x="228" y="75" width="1" height="1"/>
<rect x="258" y="82" width="1" height="1"/>
<rect x="260" y="89" width="1" height="1"/>
<rect x="232" y="92" width="1" height="1"/>
<rect x="247" y="93" width="1" height="1"/>
<rect x="294" y="88" width="1" height="1"/>
<rect x="201" y="101" width="1" height="1"/>
<rect x="229" y="100" width="1" height="1"/>
<rect x="282" y="103" width="1" height="1"/>
<rect x="283" y="107" width="1" height="1"/>
<rect x="253" y="126" width="1" height="1"/>
<rect x="296" y="137" width="1" height="1"/>
<rect x="342" y="64" width="1" height="1"/>
<rect x="331" y="76" width="1" height="1"/>
<rect x="345" y="93" width="1" height="1"/>
<rect x="355" y="51" width="1" height="1"/>
<rect x="392" y="50" width="1" height="1"/>
<rect x="387" y="93" width="1" height="1"/>
<rect x="316" y="103" width="1" height="1"/>
<rect x="330" y="107" width="1" height="1"/>
<rect x="311" y="119" width="1" height="1"/>
<rect x="317" y="125" width="1" height="1"/>
<rect x="335" y="122" width="1" height="1"/>
<rect x="346" y="123" width="1" height="1"/>
<rect x="381" y="116" width="1" height="1"/>
<rect x="411" y="51" width="1" height="1"/>
<rect x="488" y="59" width="1" height="1"/>
<rect x="455" y="77" width="1" height="1"/>
<rect x="519" y="76" width="1" height="1"/>
<rect x="523" y="82" width="1" height="1"/>
<rect x="536" y="81" width="1" height="1"/>
<rect x="549" y="86" width="1" height="1"/>
<rect x="556" y="60" width="1" height="1"/>
<rect x="554" y="64" width="1" height="1"/>
<rect x="565" y="60" width="1" height="1"/>
<rect x="574" y="63" width="1" height="1"/>
<rect x="428" y="117" width="1" height="1"/>
<rect x="487" y="120" width="1" height="1"/>
<rect x="489" y="120" width="1" height="1"/>
<rect x="512" y="119" width="1" height="1"/>
<rect x="530" y="114" width="1" height="1"/>
<rect x="538" y="125" width="1" height="1"/>
<rect x="534" y="129" width="1" height="1"/>
<rect x="569" y="133" width="1" height="1"/>
<rect x="455" y="136" width="1" height="1"/>
<rect x="542" y="139" width="1" height="1"/>
<rect x="610" y="72" width="1" height="1"/>
<rect x="680" y="83" width="1" height="1"/>
<rect x="706" y="75" width="1" height="1"/>
<rect x="716" y="83" width="1" height="1"/>
<rect x="732" y="92" width="1" height="1"/>
<rect x="642" y="98" width="1" height="1"/>
<rect x="656" y="100" width="1" height="1"/>
<rect x="687" y="101" width="1" height="1"/>
<rect x="61" y="147" width="1" height="1"/>
<rect x="74" y="147" width="1" height="1"/>
<rect x="94" y="160" width="1" height="1"/>
<rect x="99" y="160" width="1" height="1"/>
<rect x="109" y="146" width="1" height="1"/>
<rect x="147" y="152" width="1" height="1"/>
<rect x="170" y="159" width="1" height="1"/>
<rect x="175" y="155" width="1" height="1"/>
<rect x="175" y="140" width="1" height="1"/>
<rect x="73" y="172" width="1" height="1"/>
<rect x="139" y="171" width="1" height="1"/>
<rect x="137" y="187" width="1" height="1"/>
<rect x="143" y="190" width="1" height="1"/>
<rect x="129" y="195" width="1" height="1"/>
<rect x="50" y="207" width="1" height="1"/>
<rect x="103" y="203" width="1" height="1"/>
<rect x="74" y="221" width="1" height="1"/>
<rect x="64" y="226" width="1" height="1"/>
<rect x="85" y="230" width="1" height="1"/>
<rect x="107" y="221" width="1" height="1"/>
<rect x="111" y="220" width="1" height="1"/>
<rect x="76" y="238" width="1" height="1"/>
<rect x="175" y="216" width="1" height="1"/>
<rect x="154" y="225" width="1" height="1"/>
<rect x="159" y="236" width="1" height="1"/>
<rect x="120" y="239" width="1" height="1"/>
<rect x="118" y="247" width="1" height="1"/>
<rect x="171" y="244" width="1" height="1"/>
<rect x="77" y="250" width="1" height="1"/>
<rect x="77" y="254" width="1" height="1"/>
<rect x="137" y="259" width="1" height="1"/>
<rect x="146" y="257" width="1" height="1"/>
<rect x="147" y="266" width="1" height="1"/>
<rect x="184" y="261" width="1" height="1"/>
<rect x="190" y="270" width="1" height="1"/>
<rect x="240" y="147" width="1" height="1"/>
<rect x="238" y="151" width="1" height="1"/>
<rect x="286" y="158" width="1" height="1"/>
<rect x="202" y="168" width="1" height="1"/>
<rect x="223" y="174" width="1" height="1"/>
<rect x="225" y="182" width="1" height="1"/>
<rect x="244" y="185" width="1" height="1"/>
<rect x="262" y="190" width="1" height="1"/>
<rect x="283" y="200" width="1" height="1"/>
<rect x="239" y="211" width="1" height="1"/>
<rect x="256" y="222" width="1" height="1"/>
<rect x="263" y="247" width="1" height="1"/>
<rect x="234" y="254" width="1" height="1"/>
<rect x="261" y="274" width="1" height="1"/>
<rect x="311" y="255" width="1" height="1"/>
<rect x="304" y="235" width="1" height="1"/>
<rect x="320" y="153" width="1" height="1"/>
<rect x="338" y="160" width="1" height="1"/>
<rect x="339" y="143" width="1" height="1"/>
<rect x="355" y="157" width="1" height="1"/>
<rect x="370" y="147" width="1" height="1"/>
<rect x="373" y="165" width="1" height="1"/>
<rect x="389" y="142" width="1" height="1"/>
<rect x="345" y="176" width="1" height="1"/>
<rect x="326" y="207" width="1" height="1"/>
<rect x="341" y="205" width="1" height="1"/>
<rect x="373" y="227" width="1" height="1"/>
<rect x="329" y="241" width="1" height="1"/>
<rect x="359" y="265" width="1" height="1"/>
<rect x="351" y="279" width="1" height="1"/>
<rect x="481" y="141" width="1" height="1"/>
<rect x="403" y="157" width="1" height="1"/>
<rect x="409" y="165" width="1" height="1"/>
<rect x="419" y="171" width="1" height="1"/>
<rect x="447" y="169" width="1" height="1"/>
<rect x="488" y="155" width="1" height="1"/>
<rect x="494" y="162" width="1" height="1"/>
<rect x="527" y="159" width="1" height="1"/>
<rect x="535" y="154" width="1" height="1"/>
<rect x="541" y="157" width="1" height="1"/>
<rect x="432" y="177" width="1" height="1"/>
<rect x="482" y="184" width="1" height="1"/>
<rect x="540" y="185" width="1" height="1"/>
<rect x="514" y="193" width="1" height="1"/>
<rect x="528" y="190" width="1" height="1"/>
<rect x="445" y="199" width="1" height="1"/>
<rect x="484" y="203" width="1" height="1"/>
<rect x="522" y="209" width="1" height="1"/>
<rect x="557" y="211" width="1" height="1"/>
<rect x="575" y="202" width="1" height="1"/>
<rect x="574" y="204" width="1" height="1"/>
<rect x="593" y="211" width="1" height="1"/>
<rect x="445" y="215" width="1" height="1"/>
<rect x="478" y="221" width="1" height="1"/>
<rect x="479" y="228" width="1" height="1"/>
<rect x="425" y="227" width="1" height="1"/>
<rect x="503" y="231" width="1" height="1"/>
<rect x="561" y="236" width="1" height="1"/>
<rect x="517" y="241" width="1" height="1"/>
<rect x="415" y="246" width="1" height="1"/>
<rect x="518" y="249" width="1" height="1"/>
<rect x="523" y="250" width="1" height="1"/>
<rect x="532" y="259" width="1" height="1"/>
<rect x="466" y="266" width="1" height="1"/>
<rect x="477" y="262" width="1" height="1"/>
<rect x="437" y="273" width="1" height="1"/>
<rect x="448" y="273" width="1" height="1"/>
<rect x="582" y="269" width="1" height="1"/>
<rect x="601" y="146" width="1" height="1"/>
<rect x="619" y="142" width="1" height="1"/>
<rect x="646" y="155" width="1" height="1"/>
<rect x="606" y="174" width="1" height="1"/>
<rect x="623" y="175" width="1" height="1"/>
<rect x="699" y="175" width="1" height="1"/>
<rect x="735" y="183" width="1" height="1"/>
<rect x="593" y="211" width="1" height="1"/>
<rect x="643" y="227" width="1" height="1"/>
<rect x="719" y="214" width="1" height="1"/>
<rect x="746" y="248" width="1" height="1"/>
<rect x="739" y="257" width="1" height="1"/>
<rect x="631" y="265" width="1" height="1"/>
<rect x="658" y="267" width="1" height="1"/>
<rect x="689" y="265" width="1" height="1"/>
<rect x="677" y="274" width="1" height="1"/>
<rect x="652" y="277" width="1" height="1"/>
<rect x="708" y="279" width="1" height="1"/>
<rect x="51" y="280" width="1" height="1"/>
<rect x="98" y="281" width="1" height="1"/>
<rect x="86" y="297" width="1" height="1"/>
<rect x="95" y="304" width="1" height="1"/>
<rect x="49" y="308" width="1" height="1"/>
<rect x="140" y="293" width="1" height="1"/>
<rect x="181" y="290" width="1" height="1"/>
<rect x="178" y="301" width="1" height="1"/>
<rect x="118" y="321" width="1" height="1"/>
<rect x="121" y="319" width="1" height="1"/>
<rect x="157" y="319" width="1" height="1"/>
<rect x="76" y="329" width="1" height="1"/>
<rect x="103" y="329" width="1" height="1"/>
<rect x="149" y="332" width="1" height="1"/>
<rect x="136" y="338" width="1" height="1"/>
<rect x="191" y="343" width="1" height="1"/>
<rect x="51" y="352" width="1" height="1"/>
<rect x="103" y="355" width="1" height="1"/>
<rect x="106" y="369" width="1" height="1"/>
<rect x="147" y="372" width="1" height="1"/>
<rect x="139" y="374" width="1" height="1"/>
<rect x="189" y="381" width="1" height="1"/>
<rect x="191" y="381" width="1" height="1"/>
<rect x="120" y="383" width="1" height="1"/>
<rect x="125" y="381" width="1" height="1"/>
<rect x="77" y="391" width="1" height="1"/>
<rect x="101" y="394" width="1" height="1"/>
<rect x="131" y="393" width="1" height="1"/>
<rect x="175" y="390" width="1" height="1"/>
<rect x="109" y="400" width="1" height="1"/>
<rect x="134" y="402" width="1" height="1"/>
<rect x="114" y="409" width="1" height="1"/>
<rect x="156" y="407" width="1" height="1"/>
<rect x="173" y="410" width="1" height="1"/>
<rect x="186" y="405" width="1" height="1"/>
<rect x="140" y="419" width="1" height="1"/>
<rect x="255" y="302" width="1" height="1"/>
<rect x="248" y="310" width="1" height="1"/>
<rect x="275" y="311" width="1" height="1"/>
<rect x="250" y="317" width="1" height="1"/>
<rect x="234" y="323" width="1" height="1"/>
<rect x="229" y="325" width="1" height="1"/>
<rect x="208" y="331" width="1" height="1"/>
<rect x="248" y="333" width="1" height="1"/>
<rect x="280" y="336" width="1" height="1"/>
<rect x="271" y="342" width="1" height="1"/>
<rect x="281" y="343" width="1" height="1"/>
<rect x="306" y="338" width="1" height="1"/>
<rect x="251" y="355" width="1" height="1"/>
<rect x="286" y="357" width="1" height="1"/>
<rect x="288" y="360" width="1" height="1"/>
<rect x="296" y="355" width="1" height="1"/>
<rect x="290" y="374" width="1" height="1"/>
<rect x="217" y="373" width="1" height="1"/>
<rect x="200" y="378" width="1" height="1"/>
<rect x="303" y="391" width="1" height="1"/>
<rect x="286" y="396" width="1" height="1"/>
<rect x="294" y="409" width="1" height="1"/>
<rect x="314" y="292" width="1" height="1"/>
<rect x="339" y="307" width="1" height="1"/>
<rect x="325" y="312" width="1" height="1"/>
<rect x="337" y="331" width="1" height="1"/>
<rect x="361" y="328" width="1" height="1"/>
<rect x="364" y="300" width="1" height="1"/>
<rect x="374" y="282" width="1" height="1"/>
<rect x="382" y="282" width="1" height="1"/>
<rect x="330" y="341" width="1" height="1"/>
<rect x="355" y="340" width="1" height="1"/>
<rect x="336" y="345" width="1" height="1"/>
<rect x="317" y="344" width="1" height="1"/>
<rect x="374" y="355" width="1" height="1"/>
<rect x="331" y="369" width="1" height="1"/>
<rect x="367" y="365" width="1" height="1"/>
<rect x="313" y="385" width="1" height="1"/>
<rect x="326" y="391" width="1" height="1"/>
<rect x="366" y="391" width="1" height="1"/>
<rect x="320" y="400" width="1" height="1"/>
<rect x="347" y="415" width="1" height="1"/>
<rect x="406" y="288" width="1" height="1"/>
<rect x="435" y="286" width="1" height="1"/>
<rect x="445" y="287" width="1" height="1"/>
<rect x="465" y="291" width="1" height="1"/>
<rect x="482" y="290" width="1" height="1"/>
<rect x="481" y="293" width="1" height="1"/>
<rect x="567" y="293" width="1" height="1"/>
<rect x="550" y="301" width="1" height="1"/>
<rect x="559" y="311" width="1" height="1"/>
<rect x="590" y="310" width="1" height="1"/>
<rect x="590" y="312" width="1" height="1"/>
<rect x="597" y="312" width="1" height="1"/>
<rect x="563" y="321" width="1" height="1"/>
<rect x="569" y="320" width="1" height="1"/>
<rect x="442" y="325" width="1" height="1"/>
<rect x="401" y="336" width="1" height="1"/>
<rect x="438" y="341" width="1" height="1"/>
<rect x="400" y="347" width="1" height="1"/>
<rect x="420" y="350" width="1" height="1"/>
<rect x="451" y="350" width="1" height="1"/>
<rect x="419" y="355" width="1" height="1"/>
<rect x="483" y="353" width="1" height="1"/>
<rect x="490" y="355" width="1" height="1"/>
<rect x="550" y="347" width="1" height="1"/>
<rect x="562" y="355" width="1" height="1"/>
<rect x="591" y="349" width="1" height="1"/>
<rect x="538" y="360" width="1" height="1"/>
<rect x="549" y="362" width="1" height="1"/>
<rect x="509" y="367" width="1" height="1"/>
<rect x="574" y="369" width="1" height="1"/>
<rect x="428" y="381" width="1" height="1"/>
<rect x="433" y="383" width="1" height="1"/>
<rect x="505" y="384" width="1" height="1"/>
<rect x="509" y="383" width="1" height="1"/>
<rect x="410" y="396" width="1" height="1"/>
<rect x="435" y="397" width="1" height="1"/>
<rect x="453" y="400" width="1" height="1"/>
<rect x="529" y="402" width="1" height="1"/>
<rect x="449" y="409" width="1" height="1"/>
<rect x="452" y="410" width="1" height="1"/>
<rect x="445" y="412" width="1" height="1"/>
<rect x="403" y="412" width="1" height="1"/>
<rect x="553" y="410" width="1" height="1"/>
<rect x="571" y="407" width="1" height="1"/>
<rect x="421" y="419" width="1" height="1"/>
<rect x="662" y="287" width="1" height="1"/>
<rect x="696" y="283" width="1" height="1"/>
<rect x="701" y="283" width="1" height="1"/>
<rect x="703" y="282" width="1" height="1"/>
<rect x="712" y="280" width="1" height="1"/>
<rect x="723" y="300" width="1" height="1"/>
<rect x="736" y="298" width="1" height="1"/>
<rect x="740" y="305" width="1" height="1"/>
<rect x="590" y="311" width="1" height="1"/>
<rect x="597" y="312" width="1" height="1"/>
<rect x="627" y="311" width="1" height="1"/>
<rect x="614" y="316" width="1" height="1"/>
<rect x="696" y="317" width="1" height="1"/>
<rect x="682" y="323" width="1" height="1"/>
<rect x="705" y="325" width="1" height="1"/>
<rect x="631" y="331" width="1" height="1"/>
<rect x="591" y="349" width="1" height="1"/>
<rect x="681" y="373" width="1" height="1"/>
<rect x="609" y="383" width="1" height="1"/>
<rect x="668" y="383" width="1" height="1"/>
<rect x="682" y="383" width="1" height="1"/>
<rect x="684" y="383" width="1" height="1"/>
<rect x="714" y="386" width="1" height="1"/>
<rect x="731" y="389" width="1" height="1"/>
<rect x="656" y="396" width="1" height="1"/>
<rect x="648" y="401" width="1" height="1"/>
<rect x="670" y="402" width="1" height="1"/>
<rect x="728" y="401" width="1" height="1"/>
<rect x="635" y="412" width="1" height="1"/>
<rect x="685" y="411" width="1" height="1"/>
<rect x="634" y="419" width="1" height="1"/>
<rect x="49" y="358" width="1" height="1"/>
<rect x="48" y="373" width="1" height="1"/>
<rect x="330" y="56" width="1" height="1"/>
<rect x="319" y="83" width="1" height="1"/>
<rect x="160" y="425" width="1" height="1"/>
<rect x="576" y="425" width="1" height="1"/>
</g>
<g shape-rendering="crispEdges">
<path d="M160 54h3v1h-3zM161 53h1v3h-1z" fill="#8e8e88"/><rect x="161" y="54" width="1" height="1" fill="#e4e4dc"/>
<path d="M148 122h3v1h-3zM149 121h1v3h-1z" fill="#8e8e88"/><rect x="149" y="122" width="1" height="1" fill="#e4e4dc"/>
<path d="M240 77h3v1h-3zM241 76h1v3h-1z" fill="#8e8e88"/><rect x="241" y="77" width="1" height="1" fill="#e4e4dc"/>
<path d="M329 59h3v1h-3zM330 58h1v3h-1z" fill="#8e8e88"/><rect x="330" y="59" width="1" height="1" fill="#e4e4dc"/>
<path d="M316 82h3v1h-3zM317 81h1v3h-1z" fill="#8e8e88"/><rect x="317" y="82" width="1" height="1" fill="#e4e4dc"/>
<path d="M377 82h3v1h-3zM378 81h1v3h-1z" fill="#8e8e88"/><rect x="378" y="82" width="1" height="1" fill="#e4e4dc"/>
<path d="M350 106h3v1h-3zM351 105h1v3h-1z" fill="#8e8e88"/><rect x="351" y="106" width="1" height="1" fill="#e4e4dc"/>
<path d="M328 113h3v1h-3zM329 112h1v3h-1z" fill="#8e8e88"/><rect x="329" y="113" width="1" height="1" fill="#e4e4dc"/>
<path d="M377 116h3v1h-3zM378 115h1v3h-1z" fill="#8e8e88"/><rect x="378" y="116" width="1" height="1" fill="#e4e4dc"/>
<path d="M341 50h3v1h-3zM342 49h1v3h-1z" fill="#8e8e88"/><rect x="342" y="50" width="1" height="1" fill="#e4e4dc"/>
<path d="M390 68h3v1h-3zM391 67h1v3h-1z" fill="#8e8e88"/><rect x="391" y="68" width="1" height="1" fill="#e4e4dc"/>
<path d="M449 76h3v1h-3zM450 75h1v3h-1z" fill="#8e8e88"/><rect x="450" y="76" width="1" height="1" fill="#e4e4dc"/>
<path d="M464 73h3v1h-3zM465 72h1v3h-1z" fill="#8e8e88"/><rect x="465" y="73" width="1" height="1" fill="#e4e4dc"/>
<path d="M422 92h3v1h-3zM423 91h1v3h-1z" fill="#8e8e88"/><rect x="423" y="92" width="1" height="1" fill="#e4e4dc"/>
<path d="M548 72h3v1h-3zM549 71h1v3h-1z" fill="#8e8e88"/><rect x="549" y="72" width="1" height="1" fill="#e4e4dc"/>
<path d="M663 115h3v1h-3zM664 114h1v3h-1z" fill="#8e8e88"/><rect x="664" y="115" width="1" height="1" fill="#e4e4dc"/>
<path d="M153 159h3v1h-3zM154 158h1v3h-1z" fill="#8e8e88"/><rect x="154" y="159" width="1" height="1" fill="#e4e4dc"/>
<path d="M139 184h3v1h-3zM140 183h1v3h-1z" fill="#8e8e88"/><rect x="140" y="184" width="1" height="1" fill="#e4e4dc"/>
<path d="M176 182h3v1h-3zM177 181h1v3h-1z" fill="#8e8e88"/><rect x="177" y="182" width="1" height="1" fill="#e4e4dc"/>
<path d="M129 208h3v1h-3zM130 207h1v3h-1z" fill="#8e8e88"/><rect x="130" y="208" width="1" height="1" fill="#e4e4dc"/>
<path d="M151 278h3v1h-3zM152 277h1v3h-1z" fill="#8e8e88"/><rect x="152" y="278" width="1" height="1" fill="#e4e4dc"/>
<path d="M50 278h3v1h-3zM51 277h1v3h-1z" fill="#8e8e88"/><rect x="51" y="278" width="1" height="1" fill="#e4e4dc"/>
<path d="M274 154h3v1h-3zM275 153h1v3h-1z" fill="#8e8e88"/><rect x="275" y="154" width="1" height="1" fill="#e4e4dc"/>
<path d="M274 176h3v1h-3zM275 175h1v3h-1z" fill="#8e8e88"/><rect x="275" y="176" width="1" height="1" fill="#e4e4dc"/>
<path d="M304 173h3v1h-3zM305 172h1v3h-1z" fill="#8e8e88"/><rect x="305" y="173" width="1" height="1" fill="#e4e4dc"/>
<path d="M287 206h3v1h-3zM288 205h1v3h-1z" fill="#8e8e88"/><rect x="288" y="206" width="1" height="1" fill="#e4e4dc"/>
<path d="M349 175h3v1h-3zM350 174h1v3h-1z" fill="#8e8e88"/><rect x="350" y="175" width="1" height="1" fill="#e4e4dc"/>
<path d="M373 186h3v1h-3zM374 185h1v3h-1z" fill="#8e8e88"/><rect x="374" y="186" width="1" height="1" fill="#e4e4dc"/>
<path d="M354 204h3v1h-3zM355 203h1v3h-1z" fill="#8e8e88"/><rect x="355" y="204" width="1" height="1" fill="#e4e4dc"/>
<path d="M355 251h3v1h-3zM356 250h1v3h-1z" fill="#8e8e88"/><rect x="356" y="251" width="1" height="1" fill="#e4e4dc"/>
<path d="M378 262h3v1h-3zM379 261h1v3h-1z" fill="#8e8e88"/><rect x="379" y="262" width="1" height="1" fill="#e4e4dc"/>
<path d="M246 275h3v1h-3zM247 274h1v3h-1z" fill="#8e8e88"/><rect x="247" y="275" width="1" height="1" fill="#e4e4dc"/>
<path d="M395 176h3v1h-3zM396 175h1v3h-1z" fill="#8e8e88"/><rect x="396" y="176" width="1" height="1" fill="#e4e4dc"/>
<path d="M498 147h3v1h-3zM499 146h1v3h-1z" fill="#8e8e88"/><rect x="499" y="147" width="1" height="1" fill="#e4e4dc"/>
<path d="M400 168h3v1h-3zM401 167h1v3h-1z" fill="#8e8e88"/><rect x="401" y="168" width="1" height="1" fill="#e4e4dc"/>
<path d="M452 179h3v1h-3zM453 178h1v3h-1z" fill="#8e8e88"/><rect x="453" y="179" width="1" height="1" fill="#e4e4dc"/>
<path d="M429 193h3v1h-3zM430 192h1v3h-1z" fill="#8e8e88"/><rect x="430" y="193" width="1" height="1" fill="#e4e4dc"/>
<path d="M448 202h3v1h-3zM449 201h1v3h-1z" fill="#8e8e88"/><rect x="449" y="202" width="1" height="1" fill="#e4e4dc"/>
<path d="M430 209h3v1h-3zM431 208h1v3h-1z" fill="#8e8e88"/><rect x="431" y="209" width="1" height="1" fill="#e4e4dc"/>
<path d="M566 211h3v1h-3zM567 210h1v3h-1z" fill="#8e8e88"/><rect x="567" y="211" width="1" height="1" fill="#e4e4dc"/>
<path d="M419 251h3v1h-3zM420 250h1v3h-1z" fill="#8e8e88"/><rect x="420" y="251" width="1" height="1" fill="#e4e4dc"/>
<path d="M608 160h3v1h-3zM609 159h1v3h-1z" fill="#8e8e88"/><rect x="609" y="160" width="1" height="1" fill="#e4e4dc"/>
<path d="M702 149h3v1h-3zM703 148h1v3h-1z" fill="#8e8e88"/><rect x="703" y="149" width="1" height="1" fill="#e4e4dc"/>
<path d="M660 203h3v1h-3zM661 202h1v3h-1z" fill="#8e8e88"/><rect x="661" y="203" width="1" height="1" fill="#e4e4dc"/>
<path d="M90 282h3v1h-3zM91 281h1v3h-1z" fill="#8e8e88"/><rect x="91" y="282" width="1" height="1" fill="#e4e4dc"/>
<path d="M147 298h3v1h-3zM148 297h1v3h-1z" fill="#8e8e88"/><rect x="148" y="298" width="1" height="1" fill="#e4e4dc"/>
<path d="M175 316h3v1h-3zM176 315h1v3h-1z" fill="#8e8e88"/><rect x="176" y="316" width="1" height="1" fill="#e4e4dc"/>
<path d="M144 337h3v1h-3zM145 336h1v3h-1z" fill="#8e8e88"/><rect x="145" y="337" width="1" height="1" fill="#e4e4dc"/>
<path d="M121 387h3v1h-3zM122 386h1v3h-1z" fill="#8e8e88"/><rect x="122" y="387" width="1" height="1" fill="#e4e4dc"/>
<path d="M214 285h3v1h-3zM215 284h1v3h-1z" fill="#8e8e88"/><rect x="215" y="285" width="1" height="1" fill="#e4e4dc"/>
<path d="M239 303h3v1h-3zM240 302h1v3h-1z" fill="#8e8e88"/><rect x="240" y="303" width="1" height="1" fill="#e4e4dc"/>
<path d="M210 309h3v1h-3zM211 308h1v3h-1z" fill="#8e8e88"/><rect x="211" y="309" width="1" height="1" fill="#e4e4dc"/>
<path d="M251 330h3v1h-3zM252 329h1v3h-1z" fill="#8e8e88"/><rect x="252" y="330" width="1" height="1" fill="#e4e4dc"/>
<path d="M261 336h3v1h-3zM262 335h1v3h-1z" fill="#8e8e88"/><rect x="262" y="336" width="1" height="1" fill="#e4e4dc"/>
<path d="M291 337h3v1h-3zM292 336h1v3h-1z" fill="#8e8e88"/><rect x="292" y="337" width="1" height="1" fill="#e4e4dc"/>
<path d="M202 353h3v1h-3zM203 352h1v3h-1z" fill="#8e8e88"/><rect x="203" y="353" width="1" height="1" fill="#e4e4dc"/>
<path d="M210 354h3v1h-3zM211 353h1v3h-1z" fill="#8e8e88"/><rect x="211" y="354" width="1" height="1" fill="#e4e4dc"/>
<path d="M283 376h3v1h-3zM284 375h1v3h-1z" fill="#8e8e88"/><rect x="284" y="376" width="1" height="1" fill="#e4e4dc"/>
<path d="M259 404h3v1h-3zM260 403h1v3h-1z" fill="#8e8e88"/><rect x="260" y="404" width="1" height="1" fill="#e4e4dc"/>
<path d="M211 409h3v1h-3zM212 408h1v3h-1z" fill="#8e8e88"/><rect x="212" y="409" width="1" height="1" fill="#e4e4dc"/>
<path d="M214 415h3v1h-3zM215 414h1v3h-1z" fill="#8e8e88"/><rect x="215" y="415" width="1" height="1" fill="#e4e4dc"/>
<path d="M338 310h3v1h-3zM339 309h1v3h-1z" fill="#8e8e88"/><rect x="339" y="310" width="1" height="1" fill="#e4e4dc"/>
<path d="M376 292h3v1h-3zM377 291h1v3h-1z" fill="#8e8e88"/><rect x="377" y="292" width="1" height="1" fill="#e4e4dc"/>
<path d="M384 349h3v1h-3zM385 348h1v3h-1z" fill="#8e8e88"/><rect x="385" y="349" width="1" height="1" fill="#e4e4dc"/>
<path d="M376 368h3v1h-3zM377 367h1v3h-1z" fill="#8e8e88"/><rect x="377" y="368" width="1" height="1" fill="#e4e4dc"/>
<path d="M363 373h3v1h-3zM364 372h1v3h-1z" fill="#8e8e88"/><rect x="364" y="373" width="1" height="1" fill="#e4e4dc"/>
<path d="M398 347h3v1h-3zM399 346h1v3h-1z" fill="#8e8e88"/><rect x="399" y="347" width="1" height="1" fill="#e4e4dc"/>
<path d="M424 284h3v1h-3zM425 283h1v3h-1z" fill="#8e8e88"/><rect x="425" y="284" width="1" height="1" fill="#e4e4dc"/>
<path d="M562 285h3v1h-3zM563 284h1v3h-1z" fill="#8e8e88"/><rect x="563" y="285" width="1" height="1" fill="#e4e4dc"/>
<path d="M567 300h3v1h-3zM568 299h1v3h-1z" fill="#8e8e88"/><rect x="568" y="300" width="1" height="1" fill="#e4e4dc"/>
<path d="M537 334h3v1h-3zM538 333h1v3h-1z" fill="#8e8e88"/><rect x="538" y="334" width="1" height="1" fill="#e4e4dc"/>
<path d="M441 342h3v1h-3zM442 341h1v3h-1z" fill="#8e8e88"/><rect x="442" y="342" width="1" height="1" fill="#e4e4dc"/>
<path d="M462 382h3v1h-3zM463 381h1v3h-1z" fill="#8e8e88"/><rect x="463" y="382" width="1" height="1" fill="#e4e4dc"/>
<path d="M499 403h3v1h-3zM500 402h1v3h-1z" fill="#8e8e88"/><rect x="500" y="403" width="1" height="1" fill="#e4e4dc"/>
<path d="M569 404h3v1h-3zM570 403h1v3h-1z" fill="#8e8e88"/><rect x="570" y="404" width="1" height="1" fill="#e4e4dc"/>
<path d="M481 409h3v1h-3zM482 408h1v3h-1z" fill="#8e8e88"/><rect x="482" y="409" width="1" height="1" fill="#e4e4dc"/>
<path d="M678 292h3v1h-3zM679 291h1v3h-1z" fill="#8e8e88"/><rect x="679" y="292" width="1" height="1" fill="#e4e4dc"/>
<path d="M617 320h3v1h-3zM618 319h1v3h-1z" fill="#8e8e88"/><rect x="618" y="320" width="1" height="1" fill="#e4e4dc"/>
<path d="M644 373h3v1h-3zM645 372h1v3h-1z" fill="#8e8e88"/><rect x="645" y="373" width="1" height="1" fill="#e4e4dc"/>
</g>
<circle cx="168.4" cy="54.2" r="2.60" fill="url(#s)"/>
<circle cx="180.3" cy="80.5" r="3.00" fill="url(#s)"/>
<circle cx="98.5" cy="119.5" r="2.60" fill="url(#s)"/>
<circle cx="323.3" cy="58.0" r="4.30" fill="url(#s)"/>
<circle cx="480.5" cy="60.0" r="2.60" fill="url(#s)"/>
<circle cx="488.4" cy="82.3" r="2.60" fill="url(#s)"/>
<circle cx="574.4" cy="77.7" r="2.40" fill="url(#s)"/>
<circle cx="567.3" cy="96.0" r="4.30" fill="url(#s)"/>
<circle cx="602.4" cy="53.4" r="2.60" fill="url(#s)"/>
<circle cx="52.2" cy="152.0" r="4.80" fill="url(#s)"/>
<circle cx="105.8" cy="148.0" r="2.40" fill="url(#s)"/>
<circle cx="117.5" cy="178.0" r="2.40" fill="url(#s)"/>
<circle cx="95.0" cy="213.7" r="3.00" fill="url(#s)"/>
<circle cx="132.0" cy="271.0" r="2.50" fill="url(#s)"/>
<circle cx="69.0" cy="217.0" r="1.80" fill="url(#s)"/>
<circle cx="272.4" cy="142.5" r="2.60" fill="url(#s)"/>
<circle cx="217.5" cy="205.3" r="2.60" fill="url(#s)"/>
<circle cx="451.4" cy="146.8" r="2.60" fill="url(#s)"/>
<circle cx="426.3" cy="156.2" r="3.20" fill="url(#s)"/>
<circle cx="449.4" cy="194.4" r="3.00" fill="url(#s)"/>
<circle cx="549.4" cy="243.3" r="2.60" fill="url(#s)"/>
<circle cx="495.4" cy="259.7" r="3.20" fill="url(#s)"/>
<circle cx="694.3" cy="189.4" r="2.60" fill="url(#s)"/>
<circle cx="652.8" cy="208.6" r="3.00" fill="url(#s)"/>
<circle cx="707.9" cy="247.0" r="3.60" fill="url(#s)"/>
<circle cx="55.2" cy="376.7" r="4.30" fill="url(#s)"/>
<circle cx="63.3" cy="408.9" r="4.30" fill="url(#s)"/>
<circle cx="69.9" cy="344.3" r="2.40" fill="url(#s)"/>
<circle cx="225.8" cy="367.1" r="4.90" fill="url(#s)"/>
<circle cx="216.5" cy="404.3" r="3.50" fill="url(#s)"/>
<circle cx="262.3" cy="396.2" r="3.50" fill="url(#s)"/>
<circle cx="335.0" cy="324.3" r="3.20" fill="url(#s)"/>
<circle cx="320.0" cy="304.3" r="2.50" fill="url(#s)"/>
<circle cx="347.8" cy="318.7" r="2.10" fill="url(#s)"/>
<circle cx="383.8" cy="336.7" r="2.10" fill="url(#s)"/>
<circle cx="360.3" cy="366.3" r="2.60" fill="url(#s)"/>
<circle cx="246.3" cy="365.0" r="2.00" fill="url(#s)"/>
<circle cx="272.4" cy="419.0" r="2.50" fill="url(#s)"/>
<circle cx="527.9" cy="305.1" r="5.80" fill="url(#s)"/>
<circle cx="556.5" cy="418.7" r="2.50" fill="url(#s)"/>
<circle cx="599.9" cy="352.7" r="3.20" fill="url(#s)"/>
<circle cx="660.9" cy="347.1" r="2.20" fill="url(#s)"/>
<circle cx="684.4" cy="355.0" r="2.60" fill="url(#s)"/>
<circle cx="753.0" cy="344.6" r="2.60" fill="url(#s)"/>
<text class="y" x="53.5" y="145.2" font-size="8">1</text>
<text class="y" x="569.8" y="90.2" font-size="8.6" textLength="11" lengthAdjust="spacingAndGlyphs">121</text>
<text class="y" x="327" y="52.5" font-size="7" textLength="10" lengthAdjust="spacingAndGlyphs" clip-path="url(#cc)">102</text>
<text class="y" x="48.5" y="371" font-size="9" textLength="5.6" lengthAdjust="spacingAndGlyphs">χ</text>
<text class="y" x="56.6" y="372" font-size="10" textLength="4.8" lengthAdjust="spacingAndGlyphs">2</text>
<text class="y" x="65" y="403" font-size="7" textLength="8" lengthAdjust="spacingAndGlyphs">64</text>
<text class="y" x="220.8" y="360.2" font-size="8.5" textLength="5.6" lengthAdjust="spacingAndGlyphs">χ</text>
<text class="y" x="228.2" y="361.3" font-size="10" textLength="4" lengthAdjust="spacingAndGlyphs">1</text>
<text class="y" x="218.2" y="399.9" font-size="7" textLength="8" lengthAdjust="spacingAndGlyphs">57</text>
<text class="y" x="524.6" y="297.2" font-size="10.2" stroke-width=".45">ζ</text>
<g fill="none" stroke="#4aa84a" stroke-width="1" shape-rendering="crispEdges">
<path d="M737.5 235.8 L735.8 234.4 L723.8 232 L717.6 230.3 L698.5 228.6 L659.6 224.3 L607.2 219.2 L544.5 214.4 L471.4 210.4 L390.6 206.3 L302.5 202.5 L209.4 200.5 L111 199.5 L91 198.5"/>
<path d="M197.5 233 L290 232.5 L400 234 L500 236.5 L590 240 L645 242 L700 244.5 L758 247.6"/>
<path d="M199.7 235 L216.5 236.2 L290 236.6 L400 237.6 L500 239 L560 240.4 L690 240.5 L707 239.6 L725.6 239.2 L733.5 238.3 L737.5 235.8"/>
</g>
<g fill="#10f010" shape-rendering="crispEdges">
<path d="M208 200h3v1h-3zM209 199h1v3h-1z"/>
<path d="M301 202h3v1h-3zM302 201h1v3h-1z"/>
<path d="M470 210h3v1h-3zM471 209h1v3h-1z"/>
<path d="M543 214h3v1h-3zM544 213h1v3h-1z"/>
<path d="M658 224h3v1h-3zM659 223h1v3h-1z"/>
<path d="M697 228h3v1h-3zM698 227h1v3h-1z"/>
<path d="M208 232h3v1h-3zM209 231h1v3h-1z"/>
<path d="M233 232h3v1h-3zM234 231h1v3h-1z"/>
<path d="M216 236h3v1h-3zM217 235h1v3h-1z"/>
<path d="M289 236h3v1h-3zM290 235h1v3h-1z"/>
<path d="M323 233h3v1h-3zM324 232h1v3h-1z"/>
<path d="M342 237h3v1h-3zM343 236h1v3h-1z"/>
<path d="M384 233h3v1h-3zM385 232h1v3h-1z"/>
<path d="M465 238h3v1h-3zM466 237h1v3h-1z"/>
<path d="M528 239h3v1h-3zM529 238h1v3h-1z"/>
<path d="M535 238h3v1h-3zM536 237h1v3h-1z"/>
<path d="M622 240h3v1h-3zM623 239h1v3h-1z"/>
<path d="M641 240h3v1h-3zM642 239h1v3h-1z"/>
<path d="M684 240h3v1h-3zM685 239h1v3h-1z"/>
</g>
<g fill="#10f010">
<circle cx="111" cy="199.5" r="2.3"/>
<circle cx="390.6" cy="206.3" r="2.3"/>
<circle cx="607.2" cy="219.2" r="2.3"/>
<circle cx="197.5" cy="234.4" r="2.3"/>
<circle cx="247.6" cy="236.6" r="2.3"/>
<circle cx="273.4" cy="232.5" r="2.3"/>
<circle cx="457.5" cy="235.7" r="2.3"/>
<circle cx="590.6" cy="240" r="2.3"/>
<path d="M714 244 L717.5 246.2 L714 248.4 Z"/>
<path d="M731.8 236.6 L735 238.5 L731.8 240.6 Z"/>
<path d="M720 229.5 L726.5 231 L722 235.5 Z"/>
</g>
<circle cx="724.6" cy="227.2" r="4.7" fill="none" stroke="#10f010" stroke-width="1.3"/>
<ellipse cx="720" cy="234.5" rx="6.5" ry="2.6" transform="rotate(-52 720 234.5)" fill="none" stroke="#10f010" stroke-width="1"/>
<text class="g" x="722.2" y="230.4" font-size="8.5" stroke-width=".4">3</text>
<circle cx="717.6" cy="238.3" r="2.6" fill="#10f010"/>
<ellipse cx="402.6" cy="237.9" rx="3.3" ry="4.1" fill="#10f010"/>
<ellipse cx="402.6" cy="238" rx="7.2" ry="3" fill="none" stroke="#10f010" stroke-width="1.2"/>
<rect x="401.3" y="237" width="2.6" height="2" fill="#6cc46c"/>
<text class="g" x="103" y="197" font-size="10.6" textLength="16" lengthAdjust="spacingAndGlyphs">6/5</text>
<text class="g" x="202.5" y="197" font-size="10.6" textLength="10.5" lengthAdjust="spacingAndGlyphs">26</text>
<text class="g" x="297" y="200" font-size="10.6" textLength="10.5" lengthAdjust="spacingAndGlyphs">16</text>
<text class="g" x="381.8" y="204" font-size="10.6" textLength="16.5" lengthAdjust="spacingAndGlyphs">5/6</text>
<text class="g" x="464.5" y="207.5" font-size="10.6" textLength="10.5" lengthAdjust="spacingAndGlyphs">26</text>
<text class="g" x="538" y="212" font-size="10.6" textLength="10.5" lengthAdjust="spacingAndGlyphs">16</text>
<text class="g" x="599" y="217.5" font-size="10.6" textLength="16.5" lengthAdjust="spacingAndGlyphs">4/6</text>
<text class="g" x="652.8" y="221.5" font-size="10.6" textLength="10.8" lengthAdjust="spacingAndGlyphs">27</text>
<text class="g" x="693" y="225" font-size="10.6" textLength="10.3" lengthAdjust="spacingAndGlyphs">17</text>
<text class="g" x="186" y="231.6" font-size="10.6" textLength="22.5" lengthAdjust="spacingAndGlyphs">10/8</text>
<text class="g" x="203.5" y="231.6" font-size="10.6" textLength="9.5" lengthAdjust="spacingAndGlyphs">28</text>
<text class="g" x="229" y="230" font-size="10.6" textLength="10" lengthAdjust="spacingAndGlyphs">18</text>
<text class="g" x="236.2" y="233.6" font-size="10.6" textLength="22.5" lengthAdjust="spacingAndGlyphs">11/7</text>
<text class="g" x="265" y="230" font-size="10.6" textLength="16" lengthAdjust="spacingAndGlyphs">9/8</text>
<text class="g" x="284.8" y="233.6" font-size="10.6" textLength="9" lengthAdjust="spacingAndGlyphs">17</text>
<text class="g" x="319" y="230.5" font-size="10.6" textLength="10.8" lengthAdjust="spacingAndGlyphs">29</text>
<text class="g" x="336.7" y="234" font-size="10.6" textLength="10.8" lengthAdjust="spacingAndGlyphs">27</text>
<text class="g" x="379.7" y="229.8" font-size="10.6" textLength="10.6" lengthAdjust="spacingAndGlyphs">19</text>
<text class="g" x="391.5" y="236" font-size="10.6" textLength="21.5" lengthAdjust="spacingAndGlyphs">12/7</text>
<text class="g" x="448.6" y="233" font-size="10.6" textLength="16" lengthAdjust="spacingAndGlyphs">8/8</text>
<text class="g" x="459.5" y="235" font-size="10.6" textLength="10.5" lengthAdjust="spacingAndGlyphs">17</text>
<text class="g" x="524" y="235" font-size="10.6" textLength="10" lengthAdjust="spacingAndGlyphs">22</text>
<text class="g" x="532.5" y="234" font-size="10.6" textLength="10.5" lengthAdjust="spacingAndGlyphs">30</text>
<text class="g" x="581" y="238" font-size="10.6" textLength="17" lengthAdjust="spacingAndGlyphs">1/6</text>
<text class="g" x="617" y="238" font-size="10.6" textLength="11.5" lengthAdjust="spacingAndGlyphs">20</text>
<text class="g" x="636.3" y="237" font-size="10.6" textLength="10.2" lengthAdjust="spacingAndGlyphs">16</text>
<text class="g" x="678.6" y="237" font-size="10.6" textLength="10.6" lengthAdjust="spacingAndGlyphs">26</text>
<text class="g" x="708" y="237" font-size="10.6" textLength="10" lengthAdjust="spacingAndGlyphs">27</text>
<text class="y" x="714.4" y="241.3" font-size="8" textLength="7" lengthAdjust="spacingAndGlyphs" stroke-width="0">18</text>
<text class="g" x="392.2" y="252.6" font-size="9.6" textLength="18.8" lengthAdjust="spacingAndGlyphs">土星</text>
<text class="w" x="19.6" y="102" font-size="10">+</text>
<text class="w" x="28.6" y="102" font-size="10.2" textLength="16.4" lengthAdjust="spacingAndGlyphs">24°</text>
<text class="w" x="19.6" y="174" font-size="10">+</text>
<text class="w" x="28.6" y="174" font-size="10.2" textLength="16.4" lengthAdjust="spacingAndGlyphs">23°</text>
<text class="w" x="19.6" y="246" font-size="10">+</text>
<text class="w" x="28.6" y="246" font-size="10.2" textLength="16.4" lengthAdjust="spacingAndGlyphs">22°</text>
<text class="w" x="19.6" y="318" font-size="10">+</text>
<text class="w" x="28.6" y="318" font-size="10.2" textLength="16.4" lengthAdjust="spacingAndGlyphs">21°</text>
<text class="w" x="12.6" y="392.3" font-size="12.5">+</text>
<text class="w" x="23.6" y="392.3" font-size="12.5" textLength="18.6" lengthAdjust="spacingAndGlyphs">20°</text>
<text class="w" x="117.6" y="439" font-size="12.5" textLength="13" lengthAdjust="spacingAndGlyphs">6h</text>
<text class="w" x="205" y="436.6" font-size="10.4" textLength="20.6" lengthAdjust="spacingAndGlyphs">55m</text>
<text class="w" x="295" y="436.6" font-size="10.4" textLength="20.6" lengthAdjust="spacingAndGlyphs">50m</text>
<text class="w" x="385" y="436.6" font-size="10.4" textLength="20.6" lengthAdjust="spacingAndGlyphs">45m</text>
<text class="w" x="475" y="436.6" font-size="10.4" textLength="20.6" lengthAdjust="spacingAndGlyphs">40m</text>
<text class="w" x="565" y="436.6" font-size="10.4" textLength="20.6" lengthAdjust="spacingAndGlyphs">35m</text>
<text class="w" x="655" y="436.6" font-size="10.4" textLength="20.6" lengthAdjust="spacingAndGlyphs">30m</text>
<text class="w" x="745" y="436.6" font-size="10.4" textLength="20.6" lengthAdjust="spacingAndGlyphs">25m</text>
<text class="y" x="3" y="13.2" font-size="11.5" textLength="107.5" lengthAdjust="spacingAndGlyphs">つるぷら for Windows</text>
<text class="c" x="195.2" y="27.9" font-size="20" textLength="43.2" lengthAdjust="spacingAndGlyphs" stroke-width="0">2002</text>
<text class="c" x="243.1" y="28.9" font-size="21" textLength="20.1" lengthAdjust="spacingAndGlyphs" stroke-width="0">年</text>
<text class="c" x="262.1" y="27.9" font-size="20" textLength="18.9" lengthAdjust="spacingAndGlyphs" stroke-width="0">12</text>
<text class="c" x="287.7" y="28.9" font-size="21" textLength="19.0" lengthAdjust="spacingAndGlyphs" stroke-width="0">月</text>
<text class="c" x="305.5" y="27.9" font-size="20" textLength="21.6" lengthAdjust="spacingAndGlyphs" stroke-width="0">07</text>
<text class="c" x="331.9" y="28.9" font-size="21" textLength="19.0" lengthAdjust="spacingAndGlyphs" stroke-width="0">日</text>
<text class="c" x="347.9" y="27.9" font-size="20" textLength="19.4" lengthAdjust="spacingAndGlyphs" stroke-width="0">21</text>
<text class="c" x="375.1" y="28.9" font-size="21" textLength="21.0" lengthAdjust="spacingAndGlyphs" stroke-width="0">時</text>
<text class="c" x="395.1" y="27.9" font-size="20" textLength="20.5" lengthAdjust="spacingAndGlyphs" stroke-width="0">00</text>
<text class="c" x="418.3" y="28.9" font-size="21" textLength="19.0" lengthAdjust="spacingAndGlyphs" stroke-width="0">分</text>
<text class="c" x="447.0" y="28.9" font-size="21" textLength="19.4" lengthAdjust="spacingAndGlyphs" stroke-width="0">（</text>
<text class="c" x="467.3" y="28.9" font-size="21" textLength="19.0" lengthAdjust="spacingAndGlyphs" stroke-width="0">明</text>
<text class="c" x="486.9" y="28.9" font-size="21" textLength="20.1" lengthAdjust="spacingAndGlyphs" stroke-width="0">石</text>
<text class="c" x="504.7" y="28.9" font-size="21" textLength="19.4" lengthAdjust="spacingAndGlyphs" stroke-width="0">）</text>
<text class="c" x="535.1" y="28.9" font-size="21" textLength="18.8" lengthAdjust="spacingAndGlyphs" stroke-width="0">の</text>
<text class="c" x="558.9" y="28.9" font-size="21" textLength="20.1" lengthAdjust="spacingAndGlyphs" stroke-width="0">星</text>
<text class="c" x="581.5" y="28.9" font-size="21" textLength="19.4" lengthAdjust="spacingAndGlyphs" stroke-width="0">空</text>
<rect x="23.5" y="463.5" width="306" height="84" fill="#000" stroke="#00f8f8" stroke-width="1" shape-rendering="crispEdges"/>
<text class="lg" x="33.7" y="478" font-size="12.6" textLength="23.5" lengthAdjust="spacingAndGlyphs">緯度</text>
<text class="w" x="107.6" y="478" font-size="12.6">+</text>
<text class="w" x="125.5" y="478" font-size="12.6" textLength="24.5" lengthAdjust="spacingAndGlyphs">34.6°</text>
<text class="lg" x="33.7" y="490.4" font-size="12.6" textLength="23.5" lengthAdjust="spacingAndGlyphs">経度</text>
<text class="w" x="107.6" y="490.4" font-size="12.6" textLength="40" lengthAdjust="spacingAndGlyphs">+135.0°</text>
<text class="lg" x="33.7" y="502.8" font-size="12.6" textLength="47.5" lengthAdjust="spacingAndGlyphs">空の状態</text>
<text class="w" x="105.8" y="502.8" font-size="12.6" textLength="22.5" lengthAdjust="spacingAndGlyphs">暗い</text>
<text class="lg" x="33.7" y="515.2" font-size="12.6" textLength="83" lengthAdjust="spacingAndGlyphs">空が暗い時間帯</text>
<text class="w" x="62.5" y="527.6" font-size="12.6" textLength="107.5" lengthAdjust="spacingAndGlyphs">18時19分～05時24分</text>
<text class="y" x="33.7" y="540" font-size="12.6" textLength="47.5" lengthAdjust="spacingAndGlyphs">表示方向</text>
<text class="w" x="105.8" y="540" font-size="12.6" textLength="42.5" lengthAdjust="spacingAndGlyphs">05h 45m</text>
<text class="w" x="167" y="540" font-size="12.6" textLength="45" lengthAdjust="spacingAndGlyphs">+22° 04'</text>
<text class="w" x="225" y="540" font-size="12.6" textLength="31" lengthAdjust="spacingAndGlyphs">20.0倍</text>
<text class="lg" x="188" y="478" font-size="12.6" textLength="34.5" lengthAdjust="spacingAndGlyphs">日の出</text>
<text class="w" x="258.9" y="478" font-size="12.6" textLength="46.8" lengthAdjust="spacingAndGlyphs">06時53分</text>
<text class="lg" x="188" y="490.4" font-size="12.6" textLength="34.5" lengthAdjust="spacingAndGlyphs">日の入</text>
<text class="w" x="258.9" y="490.4" font-size="12.6" textLength="46.8" lengthAdjust="spacingAndGlyphs">16時49分</text>
<text class="lg" x="188" y="502.8" font-size="12.6" textLength="34.5" lengthAdjust="spacingAndGlyphs">月の出</text>
<text class="w" x="258.9" y="502.8" font-size="12.6" textLength="46.8" lengthAdjust="spacingAndGlyphs">09時47分</text>
<text class="lg" x="188" y="515.2" font-size="12.6" textLength="34.5" lengthAdjust="spacingAndGlyphs">月の入</text>
<text class="w" x="258.9" y="515.2" font-size="12.6" textLength="46.8" lengthAdjust="spacingAndGlyphs">19時34分</text>
<text class="lg" x="188" y="527.6" font-size="12.6" textLength="23" lengthAdjust="spacingAndGlyphs">月齢</text>
<text class="w" x="229.7" y="527.6" font-size="12.6" textLength="60.8" lengthAdjust="spacingAndGlyphs">3.2 (三日月)</text>
<rect x="344.5" y="463.5" width="421" height="84" fill="#000" stroke="#00f8f8" stroke-width="1" shape-rendering="crispEdges"/>
<circle cx="360.3" cy="480.8" r="7.3" fill="url(#s)"/>
<text class="w" x="372.4" y="485.40000000000003" font-size="12.6" textLength="30" lengthAdjust="spacingAndGlyphs">1等星</text>
<circle cx="360.3" cy="497" r="6.4" fill="url(#s)"/>
<text class="w" x="372.4" y="501.6" font-size="12.6" textLength="30" lengthAdjust="spacingAndGlyphs">2等星</text>
<circle cx="360.3" cy="513.5" r="5.5" fill="url(#s)"/>
<text class="w" x="372.4" y="518.1" font-size="12.6" textLength="30" lengthAdjust="spacingAndGlyphs">3等星</text>
<circle cx="360.3" cy="529.7" r="4.9" fill="url(#s)"/>
<text class="w" x="372.4" y="534.3000000000001" font-size="12.6" textLength="30" lengthAdjust="spacingAndGlyphs">4等星</text>
<circle cx="418" cy="481" r="3.9" fill="url(#s)"/>
<text class="w" x="428.6" y="485.6" font-size="12.6" textLength="30.5" lengthAdjust="spacingAndGlyphs">5等星</text>
<circle cx="418" cy="493.5" r="2.9" fill="url(#s)"/>
<text class="w" x="428.6" y="498.1" font-size="12.6" textLength="30.5" lengthAdjust="spacingAndGlyphs">6等星</text>
<circle cx="418" cy="506" r="2.1" fill="url(#s)"/>
<text class="w" x="431.6" y="510.6" font-size="12.6" textLength="27.5" lengthAdjust="spacingAndGlyphs">7等星</text>
<text class="w" x="428.6" y="522.8000000000001" font-size="12.6" textLength="30.5" lengthAdjust="spacingAndGlyphs">8等星</text>
<text class="w" x="428.6" y="535.6" font-size="12.6" textLength="36.7" lengthAdjust="spacingAndGlyphs">9･10等</text>
<path d="M417 518h3v1h-3zM418 517h1v3h-1z" fill="#8e8e88" shape-rendering="crispEdges"/><rect x="418" y="518" width="1" height="1" fill="#e4e4dc"/>
<rect x="418" y="531" width="1" height="1" fill="#c4c4bc"/>
<path d="M481.0 474.9 L481.0 477.8 L484.1 480.9 L487.0 480.9 L487.0 481.9 L484.1 481.9 L481.0 485.0 L481.0 487.9 L480.0 487.9 L480.0 485.0 L476.9 481.9 L474.0 481.9 L474.0 480.9 L476.9 480.9 L480.0 477.8 L480.0 474.9Z" fill="#f4f080"/>
<text class="w" x="491.4" y="485.6" font-size="12.6" textLength="23.3" lengthAdjust="spacingAndGlyphs">太陽</text>
<path d="M481.0 491.1 L481.0 494.0 L484.1 497.1 L487.0 497.1 L487.0 498.1 L484.1 498.1 L481.0 501.2 L481.0 504.1 L480.0 504.1 L480.0 501.2 L476.9 498.1 L474.0 498.1 L474.0 497.1 L476.9 497.1 L480.0 494.0 L480.0 491.1Z" fill="#00e8e8"/>
<text class="w" x="491.4" y="501.8" font-size="12.6" textLength="23.3" lengthAdjust="spacingAndGlyphs">水星</text>
<path d="M481.0 507.6 L481.0 510.5 L484.1 513.6 L487.0 513.6 L487.0 514.6 L484.1 514.6 L481.0 517.7 L481.0 520.6 L480.0 520.6 L480.0 517.7 L476.9 514.6 L474.0 514.6 L474.0 513.6 L476.9 513.6 L480.0 510.5 L480.0 507.6Z" fill="#f000f0"/>
<text class="w" x="491.4" y="518.3" font-size="12.6" textLength="23.3" lengthAdjust="spacingAndGlyphs">金星</text>
<path d="M481.0 523.8 L481.0 526.7 L484.1 529.8 L487.0 529.8 L487.0 530.8 L484.1 530.8 L481.0 533.9 L481.0 536.8 L480.0 536.8 L480.0 533.9 L476.9 530.8 L474.0 530.8 L474.0 529.8 L476.9 529.8 L480.0 526.7 L480.0 523.8Z" fill="#e80000"/>
<text class="w" x="491.4" y="534.5" font-size="12.6" textLength="23.3" lengthAdjust="spacingAndGlyphs">火星</text>
<circle cx="539" cy="481.1" r="5" fill="#f8f000"/><rect x="535" y="478.6" width="8" height="1" fill="#f07020"/><rect x="534.6" y="482" width="8.8" height="1" fill="#f07020"/>
<text class="w" x="549.7" y="485.8" font-size="12.6" textLength="23.3" lengthAdjust="spacingAndGlyphs">木星</text>
<ellipse cx="538.4" cy="496.8" rx="4.2" ry="3.8" fill="#10f010"/><ellipse cx="538.4" cy="497" rx="6.9" ry="2.5" fill="none" stroke="#10f010" stroke-width="1.4"/>
<text class="w" x="549.7" y="502" font-size="12.6" textLength="23.3" lengthAdjust="spacingAndGlyphs">土星</text>
<circle cx="538.8" cy="513.5" r="2.4" fill="none" stroke="#00e0e0" stroke-width="2"/>
<text class="w" x="549.7" y="518.1" font-size="12.6" textLength="35" lengthAdjust="spacingAndGlyphs">天王星</text>
<circle cx="538.8" cy="529.9" r="2.4" fill="none" stroke="#f0f000" stroke-width="2"/>
<text class="w" x="549.7" y="534.3000000000001" font-size="12.6" textLength="35" lengthAdjust="spacingAndGlyphs">海王星</text>
<circle cx="596.2" cy="481.3" r="2.4" fill="none" stroke="#ffffff" stroke-width="2"/>
<text class="w" x="606.7" y="485.8" font-size="12.6" textLength="35" lengthAdjust="spacingAndGlyphs">冥王星</text>
<circle cx="596.2" cy="497" r="2.4" fill="none" stroke="#6868f0" stroke-width="2"/>
<text class="w" x="606.7" y="502" font-size="12.6" textLength="31" lengthAdjust="spacingAndGlyphs">セレス</text>
<circle cx="596.2" cy="513.6" r="2.4" fill="none" stroke="#c05858" stroke-width="2"/>
<text class="w" x="606.7" y="518.1" font-size="12.6" textLength="31" lengthAdjust="spacingAndGlyphs">パラス</text>
<circle cx="596.2" cy="529.8" r="2.4" fill="none" stroke="#c048c8" stroke-width="2"/>
<text class="w" x="606.7" y="534.3000000000001" font-size="12.6" textLength="31" lengthAdjust="spacingAndGlyphs">ジュノ</text>
<circle cx="654" cy="481.1" r="2.4" fill="none" stroke="#48b048" stroke-width="2"/>
<text class="w" x="665" y="485.8" font-size="12.6" textLength="30.6" lengthAdjust="spacingAndGlyphs">ベスタ</text>
<circle cx="654.1" cy="497" r="6.7" fill="#08085a" stroke="#e8e060" stroke-width="1.3"/><path d="M656 490.6 A6.6 6.6 0 0 1 656 503.4 A9 9 0 0 0 656 490.6Z" fill="#e8e060"/>
<text class="w" x="666.6" y="502" font-size="12.6" textLength="10.5" lengthAdjust="spacingAndGlyphs">月</text>
</svg></body></html>
